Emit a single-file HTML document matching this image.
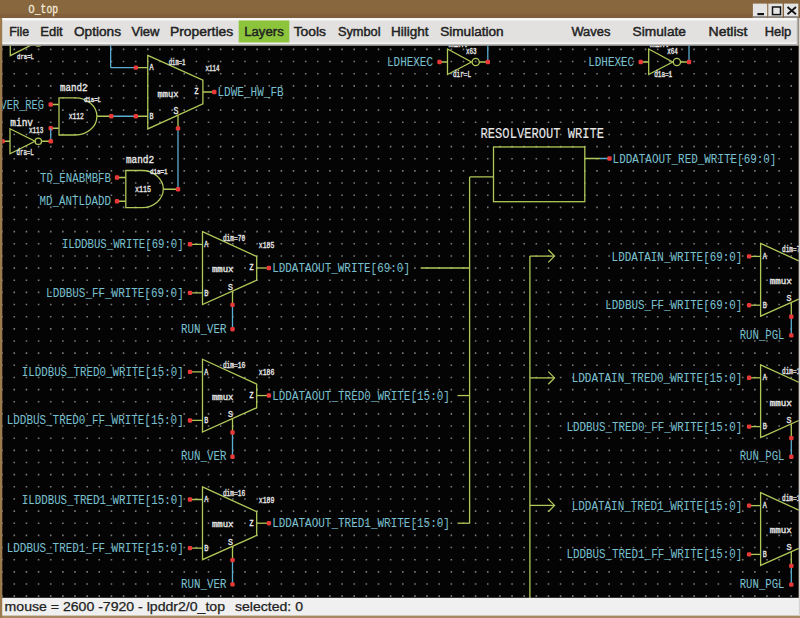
<!DOCTYPE html><html><head><meta charset="utf-8"><style>html,body{margin:0;padding:0;width:800px;height:618px;overflow:hidden;background:#88663e}svg{display:block}</style></head><body>
<svg width="800" height="618" viewBox="0 0 800 618">
<rect x="0" y="0" width="800" height="618" fill="#88663e"/><rect x="0" y="14" width="800" height="4" fill="#80603a"/>
<rect x="2.2" y="45.5" width="796.5" height="552.5" fill="#040404"/>
<clipPath id="cv"><rect x="2.2" y="45.5" width="796.5" height="552.5"/></clipPath>
<g clip-path="url(#cv)">
<path d="M1.36,48.60h1.6v1.6h-1.6zM1.36,60.75h1.6v1.6h-1.6zM1.36,72.90h1.6v1.6h-1.6zM1.36,85.05h1.6v1.6h-1.6zM1.36,97.20h1.6v1.6h-1.6zM1.36,109.35h1.6v1.6h-1.6zM1.36,121.50h1.6v1.6h-1.6zM1.36,133.65h1.6v1.6h-1.6zM1.36,145.80h1.6v1.6h-1.6zM1.36,157.95h1.6v1.6h-1.6zM1.36,170.10h1.6v1.6h-1.6zM1.36,182.25h1.6v1.6h-1.6zM1.36,194.40h1.6v1.6h-1.6zM1.36,206.55h1.6v1.6h-1.6zM1.36,218.70h1.6v1.6h-1.6zM1.36,230.85h1.6v1.6h-1.6zM1.36,243.00h1.6v1.6h-1.6zM1.36,255.15h1.6v1.6h-1.6zM1.36,267.30h1.6v1.6h-1.6zM1.36,279.45h1.6v1.6h-1.6zM1.36,291.60h1.6v1.6h-1.6zM1.36,303.75h1.6v1.6h-1.6zM1.36,315.90h1.6v1.6h-1.6zM1.36,328.05h1.6v1.6h-1.6zM1.36,340.20h1.6v1.6h-1.6zM1.36,352.35h1.6v1.6h-1.6zM1.36,364.50h1.6v1.6h-1.6zM1.36,376.65h1.6v1.6h-1.6zM1.36,388.80h1.6v1.6h-1.6zM1.36,400.95h1.6v1.6h-1.6zM1.36,413.10h1.6v1.6h-1.6zM1.36,425.25h1.6v1.6h-1.6zM1.36,437.40h1.6v1.6h-1.6zM1.36,449.55h1.6v1.6h-1.6zM1.36,461.70h1.6v1.6h-1.6zM1.36,473.85h1.6v1.6h-1.6zM1.36,486.00h1.6v1.6h-1.6zM1.36,498.15h1.6v1.6h-1.6zM1.36,510.30h1.6v1.6h-1.6zM1.36,522.45h1.6v1.6h-1.6zM1.36,534.60h1.6v1.6h-1.6zM1.36,546.75h1.6v1.6h-1.6zM1.36,558.90h1.6v1.6h-1.6zM1.36,571.05h1.6v1.6h-1.6zM1.36,583.20h1.6v1.6h-1.6zM1.36,595.35h1.6v1.6h-1.6zM13.50,48.60h1.6v1.6h-1.6zM13.50,60.75h1.6v1.6h-1.6zM13.50,72.90h1.6v1.6h-1.6zM13.50,85.05h1.6v1.6h-1.6zM13.50,97.20h1.6v1.6h-1.6zM13.50,109.35h1.6v1.6h-1.6zM13.50,121.50h1.6v1.6h-1.6zM13.50,133.65h1.6v1.6h-1.6zM13.50,145.80h1.6v1.6h-1.6zM13.50,157.95h1.6v1.6h-1.6zM13.50,170.10h1.6v1.6h-1.6zM13.50,182.25h1.6v1.6h-1.6zM13.50,194.40h1.6v1.6h-1.6zM13.50,206.55h1.6v1.6h-1.6zM13.50,218.70h1.6v1.6h-1.6zM13.50,230.85h1.6v1.6h-1.6zM13.50,243.00h1.6v1.6h-1.6zM13.50,255.15h1.6v1.6h-1.6zM13.50,267.30h1.6v1.6h-1.6zM13.50,279.45h1.6v1.6h-1.6zM13.50,291.60h1.6v1.6h-1.6zM13.50,303.75h1.6v1.6h-1.6zM13.50,315.90h1.6v1.6h-1.6zM13.50,328.05h1.6v1.6h-1.6zM13.50,340.20h1.6v1.6h-1.6zM13.50,352.35h1.6v1.6h-1.6zM13.50,364.50h1.6v1.6h-1.6zM13.50,376.65h1.6v1.6h-1.6zM13.50,388.80h1.6v1.6h-1.6zM13.50,400.95h1.6v1.6h-1.6zM13.50,413.10h1.6v1.6h-1.6zM13.50,425.25h1.6v1.6h-1.6zM13.50,437.40h1.6v1.6h-1.6zM13.50,449.55h1.6v1.6h-1.6zM13.50,461.70h1.6v1.6h-1.6zM13.50,473.85h1.6v1.6h-1.6zM13.50,486.00h1.6v1.6h-1.6zM13.50,498.15h1.6v1.6h-1.6zM13.50,510.30h1.6v1.6h-1.6zM13.50,522.45h1.6v1.6h-1.6zM13.50,534.60h1.6v1.6h-1.6zM13.50,546.75h1.6v1.6h-1.6zM13.50,558.90h1.6v1.6h-1.6zM13.50,571.05h1.6v1.6h-1.6zM13.50,583.20h1.6v1.6h-1.6zM13.50,595.35h1.6v1.6h-1.6zM25.64,48.60h1.6v1.6h-1.6zM25.64,60.75h1.6v1.6h-1.6zM25.64,72.90h1.6v1.6h-1.6zM25.64,85.05h1.6v1.6h-1.6zM25.64,97.20h1.6v1.6h-1.6zM25.64,109.35h1.6v1.6h-1.6zM25.64,121.50h1.6v1.6h-1.6zM25.64,133.65h1.6v1.6h-1.6zM25.64,145.80h1.6v1.6h-1.6zM25.64,157.95h1.6v1.6h-1.6zM25.64,170.10h1.6v1.6h-1.6zM25.64,182.25h1.6v1.6h-1.6zM25.64,194.40h1.6v1.6h-1.6zM25.64,206.55h1.6v1.6h-1.6zM25.64,218.70h1.6v1.6h-1.6zM25.64,230.85h1.6v1.6h-1.6zM25.64,243.00h1.6v1.6h-1.6zM25.64,255.15h1.6v1.6h-1.6zM25.64,267.30h1.6v1.6h-1.6zM25.64,279.45h1.6v1.6h-1.6zM25.64,291.60h1.6v1.6h-1.6zM25.64,303.75h1.6v1.6h-1.6zM25.64,315.90h1.6v1.6h-1.6zM25.64,328.05h1.6v1.6h-1.6zM25.64,340.20h1.6v1.6h-1.6zM25.64,352.35h1.6v1.6h-1.6zM25.64,364.50h1.6v1.6h-1.6zM25.64,376.65h1.6v1.6h-1.6zM25.64,388.80h1.6v1.6h-1.6zM25.64,400.95h1.6v1.6h-1.6zM25.64,413.10h1.6v1.6h-1.6zM25.64,425.25h1.6v1.6h-1.6zM25.64,437.40h1.6v1.6h-1.6zM25.64,449.55h1.6v1.6h-1.6zM25.64,461.70h1.6v1.6h-1.6zM25.64,473.85h1.6v1.6h-1.6zM25.64,486.00h1.6v1.6h-1.6zM25.64,498.15h1.6v1.6h-1.6zM25.64,510.30h1.6v1.6h-1.6zM25.64,522.45h1.6v1.6h-1.6zM25.64,534.60h1.6v1.6h-1.6zM25.64,546.75h1.6v1.6h-1.6zM25.64,558.90h1.6v1.6h-1.6zM25.64,571.05h1.6v1.6h-1.6zM25.64,583.20h1.6v1.6h-1.6zM25.64,595.35h1.6v1.6h-1.6zM37.78,48.60h1.6v1.6h-1.6zM37.78,60.75h1.6v1.6h-1.6zM37.78,72.90h1.6v1.6h-1.6zM37.78,85.05h1.6v1.6h-1.6zM37.78,97.20h1.6v1.6h-1.6zM37.78,109.35h1.6v1.6h-1.6zM37.78,121.50h1.6v1.6h-1.6zM37.78,133.65h1.6v1.6h-1.6zM37.78,145.80h1.6v1.6h-1.6zM37.78,157.95h1.6v1.6h-1.6zM37.78,170.10h1.6v1.6h-1.6zM37.78,182.25h1.6v1.6h-1.6zM37.78,194.40h1.6v1.6h-1.6zM37.78,206.55h1.6v1.6h-1.6zM37.78,218.70h1.6v1.6h-1.6zM37.78,230.85h1.6v1.6h-1.6zM37.78,243.00h1.6v1.6h-1.6zM37.78,255.15h1.6v1.6h-1.6zM37.78,267.30h1.6v1.6h-1.6zM37.78,279.45h1.6v1.6h-1.6zM37.78,291.60h1.6v1.6h-1.6zM37.78,303.75h1.6v1.6h-1.6zM37.78,315.90h1.6v1.6h-1.6zM37.78,328.05h1.6v1.6h-1.6zM37.78,340.20h1.6v1.6h-1.6zM37.78,352.35h1.6v1.6h-1.6zM37.78,364.50h1.6v1.6h-1.6zM37.78,376.65h1.6v1.6h-1.6zM37.78,388.80h1.6v1.6h-1.6zM37.78,400.95h1.6v1.6h-1.6zM37.78,413.10h1.6v1.6h-1.6zM37.78,425.25h1.6v1.6h-1.6zM37.78,437.40h1.6v1.6h-1.6zM37.78,449.55h1.6v1.6h-1.6zM37.78,461.70h1.6v1.6h-1.6zM37.78,473.85h1.6v1.6h-1.6zM37.78,486.00h1.6v1.6h-1.6zM37.78,498.15h1.6v1.6h-1.6zM37.78,510.30h1.6v1.6h-1.6zM37.78,522.45h1.6v1.6h-1.6zM37.78,534.60h1.6v1.6h-1.6zM37.78,546.75h1.6v1.6h-1.6zM37.78,558.90h1.6v1.6h-1.6zM37.78,571.05h1.6v1.6h-1.6zM37.78,583.20h1.6v1.6h-1.6zM37.78,595.35h1.6v1.6h-1.6zM49.92,48.60h1.6v1.6h-1.6zM49.92,60.75h1.6v1.6h-1.6zM49.92,72.90h1.6v1.6h-1.6zM49.92,85.05h1.6v1.6h-1.6zM49.92,97.20h1.6v1.6h-1.6zM49.92,109.35h1.6v1.6h-1.6zM49.92,121.50h1.6v1.6h-1.6zM49.92,133.65h1.6v1.6h-1.6zM49.92,145.80h1.6v1.6h-1.6zM49.92,157.95h1.6v1.6h-1.6zM49.92,170.10h1.6v1.6h-1.6zM49.92,182.25h1.6v1.6h-1.6zM49.92,194.40h1.6v1.6h-1.6zM49.92,206.55h1.6v1.6h-1.6zM49.92,218.70h1.6v1.6h-1.6zM49.92,230.85h1.6v1.6h-1.6zM49.92,243.00h1.6v1.6h-1.6zM49.92,255.15h1.6v1.6h-1.6zM49.92,267.30h1.6v1.6h-1.6zM49.92,279.45h1.6v1.6h-1.6zM49.92,291.60h1.6v1.6h-1.6zM49.92,303.75h1.6v1.6h-1.6zM49.92,315.90h1.6v1.6h-1.6zM49.92,328.05h1.6v1.6h-1.6zM49.92,340.20h1.6v1.6h-1.6zM49.92,352.35h1.6v1.6h-1.6zM49.92,364.50h1.6v1.6h-1.6zM49.92,376.65h1.6v1.6h-1.6zM49.92,388.80h1.6v1.6h-1.6zM49.92,400.95h1.6v1.6h-1.6zM49.92,413.10h1.6v1.6h-1.6zM49.92,425.25h1.6v1.6h-1.6zM49.92,437.40h1.6v1.6h-1.6zM49.92,449.55h1.6v1.6h-1.6zM49.92,461.70h1.6v1.6h-1.6zM49.92,473.85h1.6v1.6h-1.6zM49.92,486.00h1.6v1.6h-1.6zM49.92,498.15h1.6v1.6h-1.6zM49.92,510.30h1.6v1.6h-1.6zM49.92,522.45h1.6v1.6h-1.6zM49.92,534.60h1.6v1.6h-1.6zM49.92,546.75h1.6v1.6h-1.6zM49.92,558.90h1.6v1.6h-1.6zM49.92,571.05h1.6v1.6h-1.6zM49.92,583.20h1.6v1.6h-1.6zM49.92,595.35h1.6v1.6h-1.6zM62.06,48.60h1.6v1.6h-1.6zM62.06,60.75h1.6v1.6h-1.6zM62.06,72.90h1.6v1.6h-1.6zM62.06,85.05h1.6v1.6h-1.6zM62.06,97.20h1.6v1.6h-1.6zM62.06,109.35h1.6v1.6h-1.6zM62.06,121.50h1.6v1.6h-1.6zM62.06,133.65h1.6v1.6h-1.6zM62.06,145.80h1.6v1.6h-1.6zM62.06,157.95h1.6v1.6h-1.6zM62.06,170.10h1.6v1.6h-1.6zM62.06,182.25h1.6v1.6h-1.6zM62.06,194.40h1.6v1.6h-1.6zM62.06,206.55h1.6v1.6h-1.6zM62.06,218.70h1.6v1.6h-1.6zM62.06,230.85h1.6v1.6h-1.6zM62.06,243.00h1.6v1.6h-1.6zM62.06,255.15h1.6v1.6h-1.6zM62.06,267.30h1.6v1.6h-1.6zM62.06,279.45h1.6v1.6h-1.6zM62.06,291.60h1.6v1.6h-1.6zM62.06,303.75h1.6v1.6h-1.6zM62.06,315.90h1.6v1.6h-1.6zM62.06,328.05h1.6v1.6h-1.6zM62.06,340.20h1.6v1.6h-1.6zM62.06,352.35h1.6v1.6h-1.6zM62.06,364.50h1.6v1.6h-1.6zM62.06,376.65h1.6v1.6h-1.6zM62.06,388.80h1.6v1.6h-1.6zM62.06,400.95h1.6v1.6h-1.6zM62.06,413.10h1.6v1.6h-1.6zM62.06,425.25h1.6v1.6h-1.6zM62.06,437.40h1.6v1.6h-1.6zM62.06,449.55h1.6v1.6h-1.6zM62.06,461.70h1.6v1.6h-1.6zM62.06,473.85h1.6v1.6h-1.6zM62.06,486.00h1.6v1.6h-1.6zM62.06,498.15h1.6v1.6h-1.6zM62.06,510.30h1.6v1.6h-1.6zM62.06,522.45h1.6v1.6h-1.6zM62.06,534.60h1.6v1.6h-1.6zM62.06,546.75h1.6v1.6h-1.6zM62.06,558.90h1.6v1.6h-1.6zM62.06,571.05h1.6v1.6h-1.6zM62.06,583.20h1.6v1.6h-1.6zM62.06,595.35h1.6v1.6h-1.6zM74.20,48.60h1.6v1.6h-1.6zM74.20,60.75h1.6v1.6h-1.6zM74.20,72.90h1.6v1.6h-1.6zM74.20,85.05h1.6v1.6h-1.6zM74.20,97.20h1.6v1.6h-1.6zM74.20,109.35h1.6v1.6h-1.6zM74.20,121.50h1.6v1.6h-1.6zM74.20,133.65h1.6v1.6h-1.6zM74.20,145.80h1.6v1.6h-1.6zM74.20,157.95h1.6v1.6h-1.6zM74.20,170.10h1.6v1.6h-1.6zM74.20,182.25h1.6v1.6h-1.6zM74.20,194.40h1.6v1.6h-1.6zM74.20,206.55h1.6v1.6h-1.6zM74.20,218.70h1.6v1.6h-1.6zM74.20,230.85h1.6v1.6h-1.6zM74.20,243.00h1.6v1.6h-1.6zM74.20,255.15h1.6v1.6h-1.6zM74.20,267.30h1.6v1.6h-1.6zM74.20,279.45h1.6v1.6h-1.6zM74.20,291.60h1.6v1.6h-1.6zM74.20,303.75h1.6v1.6h-1.6zM74.20,315.90h1.6v1.6h-1.6zM74.20,328.05h1.6v1.6h-1.6zM74.20,340.20h1.6v1.6h-1.6zM74.20,352.35h1.6v1.6h-1.6zM74.20,364.50h1.6v1.6h-1.6zM74.20,376.65h1.6v1.6h-1.6zM74.20,388.80h1.6v1.6h-1.6zM74.20,400.95h1.6v1.6h-1.6zM74.20,413.10h1.6v1.6h-1.6zM74.20,425.25h1.6v1.6h-1.6zM74.20,437.40h1.6v1.6h-1.6zM74.20,449.55h1.6v1.6h-1.6zM74.20,461.70h1.6v1.6h-1.6zM74.20,473.85h1.6v1.6h-1.6zM74.20,486.00h1.6v1.6h-1.6zM74.20,498.15h1.6v1.6h-1.6zM74.20,510.30h1.6v1.6h-1.6zM74.20,522.45h1.6v1.6h-1.6zM74.20,534.60h1.6v1.6h-1.6zM74.20,546.75h1.6v1.6h-1.6zM74.20,558.90h1.6v1.6h-1.6zM74.20,571.05h1.6v1.6h-1.6zM74.20,583.20h1.6v1.6h-1.6zM74.20,595.35h1.6v1.6h-1.6zM86.34,48.60h1.6v1.6h-1.6zM86.34,60.75h1.6v1.6h-1.6zM86.34,72.90h1.6v1.6h-1.6zM86.34,85.05h1.6v1.6h-1.6zM86.34,97.20h1.6v1.6h-1.6zM86.34,109.35h1.6v1.6h-1.6zM86.34,121.50h1.6v1.6h-1.6zM86.34,133.65h1.6v1.6h-1.6zM86.34,145.80h1.6v1.6h-1.6zM86.34,157.95h1.6v1.6h-1.6zM86.34,170.10h1.6v1.6h-1.6zM86.34,182.25h1.6v1.6h-1.6zM86.34,194.40h1.6v1.6h-1.6zM86.34,206.55h1.6v1.6h-1.6zM86.34,218.70h1.6v1.6h-1.6zM86.34,230.85h1.6v1.6h-1.6zM86.34,243.00h1.6v1.6h-1.6zM86.34,255.15h1.6v1.6h-1.6zM86.34,267.30h1.6v1.6h-1.6zM86.34,279.45h1.6v1.6h-1.6zM86.34,291.60h1.6v1.6h-1.6zM86.34,303.75h1.6v1.6h-1.6zM86.34,315.90h1.6v1.6h-1.6zM86.34,328.05h1.6v1.6h-1.6zM86.34,340.20h1.6v1.6h-1.6zM86.34,352.35h1.6v1.6h-1.6zM86.34,364.50h1.6v1.6h-1.6zM86.34,376.65h1.6v1.6h-1.6zM86.34,388.80h1.6v1.6h-1.6zM86.34,400.95h1.6v1.6h-1.6zM86.34,413.10h1.6v1.6h-1.6zM86.34,425.25h1.6v1.6h-1.6zM86.34,437.40h1.6v1.6h-1.6zM86.34,449.55h1.6v1.6h-1.6zM86.34,461.70h1.6v1.6h-1.6zM86.34,473.85h1.6v1.6h-1.6zM86.34,486.00h1.6v1.6h-1.6zM86.34,498.15h1.6v1.6h-1.6zM86.34,510.30h1.6v1.6h-1.6zM86.34,522.45h1.6v1.6h-1.6zM86.34,534.60h1.6v1.6h-1.6zM86.34,546.75h1.6v1.6h-1.6zM86.34,558.90h1.6v1.6h-1.6zM86.34,571.05h1.6v1.6h-1.6zM86.34,583.20h1.6v1.6h-1.6zM86.34,595.35h1.6v1.6h-1.6zM98.48,48.60h1.6v1.6h-1.6zM98.48,60.75h1.6v1.6h-1.6zM98.48,72.90h1.6v1.6h-1.6zM98.48,85.05h1.6v1.6h-1.6zM98.48,97.20h1.6v1.6h-1.6zM98.48,109.35h1.6v1.6h-1.6zM98.48,121.50h1.6v1.6h-1.6zM98.48,133.65h1.6v1.6h-1.6zM98.48,145.80h1.6v1.6h-1.6zM98.48,157.95h1.6v1.6h-1.6zM98.48,170.10h1.6v1.6h-1.6zM98.48,182.25h1.6v1.6h-1.6zM98.48,194.40h1.6v1.6h-1.6zM98.48,206.55h1.6v1.6h-1.6zM98.48,218.70h1.6v1.6h-1.6zM98.48,230.85h1.6v1.6h-1.6zM98.48,243.00h1.6v1.6h-1.6zM98.48,255.15h1.6v1.6h-1.6zM98.48,267.30h1.6v1.6h-1.6zM98.48,279.45h1.6v1.6h-1.6zM98.48,291.60h1.6v1.6h-1.6zM98.48,303.75h1.6v1.6h-1.6zM98.48,315.90h1.6v1.6h-1.6zM98.48,328.05h1.6v1.6h-1.6zM98.48,340.20h1.6v1.6h-1.6zM98.48,352.35h1.6v1.6h-1.6zM98.48,364.50h1.6v1.6h-1.6zM98.48,376.65h1.6v1.6h-1.6zM98.48,388.80h1.6v1.6h-1.6zM98.48,400.95h1.6v1.6h-1.6zM98.48,413.10h1.6v1.6h-1.6zM98.48,425.25h1.6v1.6h-1.6zM98.48,437.40h1.6v1.6h-1.6zM98.48,449.55h1.6v1.6h-1.6zM98.48,461.70h1.6v1.6h-1.6zM98.48,473.85h1.6v1.6h-1.6zM98.48,486.00h1.6v1.6h-1.6zM98.48,498.15h1.6v1.6h-1.6zM98.48,510.30h1.6v1.6h-1.6zM98.48,522.45h1.6v1.6h-1.6zM98.48,534.60h1.6v1.6h-1.6zM98.48,546.75h1.6v1.6h-1.6zM98.48,558.90h1.6v1.6h-1.6zM98.48,571.05h1.6v1.6h-1.6zM98.48,583.20h1.6v1.6h-1.6zM98.48,595.35h1.6v1.6h-1.6zM110.62,48.60h1.6v1.6h-1.6zM110.62,60.75h1.6v1.6h-1.6zM110.62,72.90h1.6v1.6h-1.6zM110.62,85.05h1.6v1.6h-1.6zM110.62,97.20h1.6v1.6h-1.6zM110.62,109.35h1.6v1.6h-1.6zM110.62,121.50h1.6v1.6h-1.6zM110.62,133.65h1.6v1.6h-1.6zM110.62,145.80h1.6v1.6h-1.6zM110.62,157.95h1.6v1.6h-1.6zM110.62,170.10h1.6v1.6h-1.6zM110.62,182.25h1.6v1.6h-1.6zM110.62,194.40h1.6v1.6h-1.6zM110.62,206.55h1.6v1.6h-1.6zM110.62,218.70h1.6v1.6h-1.6zM110.62,230.85h1.6v1.6h-1.6zM110.62,243.00h1.6v1.6h-1.6zM110.62,255.15h1.6v1.6h-1.6zM110.62,267.30h1.6v1.6h-1.6zM110.62,279.45h1.6v1.6h-1.6zM110.62,291.60h1.6v1.6h-1.6zM110.62,303.75h1.6v1.6h-1.6zM110.62,315.90h1.6v1.6h-1.6zM110.62,328.05h1.6v1.6h-1.6zM110.62,340.20h1.6v1.6h-1.6zM110.62,352.35h1.6v1.6h-1.6zM110.62,364.50h1.6v1.6h-1.6zM110.62,376.65h1.6v1.6h-1.6zM110.62,388.80h1.6v1.6h-1.6zM110.62,400.95h1.6v1.6h-1.6zM110.62,413.10h1.6v1.6h-1.6zM110.62,425.25h1.6v1.6h-1.6zM110.62,437.40h1.6v1.6h-1.6zM110.62,449.55h1.6v1.6h-1.6zM110.62,461.70h1.6v1.6h-1.6zM110.62,473.85h1.6v1.6h-1.6zM110.62,486.00h1.6v1.6h-1.6zM110.62,498.15h1.6v1.6h-1.6zM110.62,510.30h1.6v1.6h-1.6zM110.62,522.45h1.6v1.6h-1.6zM110.62,534.60h1.6v1.6h-1.6zM110.62,546.75h1.6v1.6h-1.6zM110.62,558.90h1.6v1.6h-1.6zM110.62,571.05h1.6v1.6h-1.6zM110.62,583.20h1.6v1.6h-1.6zM110.62,595.35h1.6v1.6h-1.6zM122.76,48.60h1.6v1.6h-1.6zM122.76,60.75h1.6v1.6h-1.6zM122.76,72.90h1.6v1.6h-1.6zM122.76,85.05h1.6v1.6h-1.6zM122.76,97.20h1.6v1.6h-1.6zM122.76,109.35h1.6v1.6h-1.6zM122.76,121.50h1.6v1.6h-1.6zM122.76,133.65h1.6v1.6h-1.6zM122.76,145.80h1.6v1.6h-1.6zM122.76,157.95h1.6v1.6h-1.6zM122.76,170.10h1.6v1.6h-1.6zM122.76,182.25h1.6v1.6h-1.6zM122.76,194.40h1.6v1.6h-1.6zM122.76,206.55h1.6v1.6h-1.6zM122.76,218.70h1.6v1.6h-1.6zM122.76,230.85h1.6v1.6h-1.6zM122.76,243.00h1.6v1.6h-1.6zM122.76,255.15h1.6v1.6h-1.6zM122.76,267.30h1.6v1.6h-1.6zM122.76,279.45h1.6v1.6h-1.6zM122.76,291.60h1.6v1.6h-1.6zM122.76,303.75h1.6v1.6h-1.6zM122.76,315.90h1.6v1.6h-1.6zM122.76,328.05h1.6v1.6h-1.6zM122.76,340.20h1.6v1.6h-1.6zM122.76,352.35h1.6v1.6h-1.6zM122.76,364.50h1.6v1.6h-1.6zM122.76,376.65h1.6v1.6h-1.6zM122.76,388.80h1.6v1.6h-1.6zM122.76,400.95h1.6v1.6h-1.6zM122.76,413.10h1.6v1.6h-1.6zM122.76,425.25h1.6v1.6h-1.6zM122.76,437.40h1.6v1.6h-1.6zM122.76,449.55h1.6v1.6h-1.6zM122.76,461.70h1.6v1.6h-1.6zM122.76,473.85h1.6v1.6h-1.6zM122.76,486.00h1.6v1.6h-1.6zM122.76,498.15h1.6v1.6h-1.6zM122.76,510.30h1.6v1.6h-1.6zM122.76,522.45h1.6v1.6h-1.6zM122.76,534.60h1.6v1.6h-1.6zM122.76,546.75h1.6v1.6h-1.6zM122.76,558.90h1.6v1.6h-1.6zM122.76,571.05h1.6v1.6h-1.6zM122.76,583.20h1.6v1.6h-1.6zM122.76,595.35h1.6v1.6h-1.6zM134.90,48.60h1.6v1.6h-1.6zM134.90,60.75h1.6v1.6h-1.6zM134.90,72.90h1.6v1.6h-1.6zM134.90,85.05h1.6v1.6h-1.6zM134.90,97.20h1.6v1.6h-1.6zM134.90,109.35h1.6v1.6h-1.6zM134.90,121.50h1.6v1.6h-1.6zM134.90,133.65h1.6v1.6h-1.6zM134.90,145.80h1.6v1.6h-1.6zM134.90,157.95h1.6v1.6h-1.6zM134.90,170.10h1.6v1.6h-1.6zM134.90,182.25h1.6v1.6h-1.6zM134.90,194.40h1.6v1.6h-1.6zM134.90,206.55h1.6v1.6h-1.6zM134.90,218.70h1.6v1.6h-1.6zM134.90,230.85h1.6v1.6h-1.6zM134.90,243.00h1.6v1.6h-1.6zM134.90,255.15h1.6v1.6h-1.6zM134.90,267.30h1.6v1.6h-1.6zM134.90,279.45h1.6v1.6h-1.6zM134.90,291.60h1.6v1.6h-1.6zM134.90,303.75h1.6v1.6h-1.6zM134.90,315.90h1.6v1.6h-1.6zM134.90,328.05h1.6v1.6h-1.6zM134.90,340.20h1.6v1.6h-1.6zM134.90,352.35h1.6v1.6h-1.6zM134.90,364.50h1.6v1.6h-1.6zM134.90,376.65h1.6v1.6h-1.6zM134.90,388.80h1.6v1.6h-1.6zM134.90,400.95h1.6v1.6h-1.6zM134.90,413.10h1.6v1.6h-1.6zM134.90,425.25h1.6v1.6h-1.6zM134.90,437.40h1.6v1.6h-1.6zM134.90,449.55h1.6v1.6h-1.6zM134.90,461.70h1.6v1.6h-1.6zM134.90,473.85h1.6v1.6h-1.6zM134.90,486.00h1.6v1.6h-1.6zM134.90,498.15h1.6v1.6h-1.6zM134.90,510.30h1.6v1.6h-1.6zM134.90,522.45h1.6v1.6h-1.6zM134.90,534.60h1.6v1.6h-1.6zM134.90,546.75h1.6v1.6h-1.6zM134.90,558.90h1.6v1.6h-1.6zM134.90,571.05h1.6v1.6h-1.6zM134.90,583.20h1.6v1.6h-1.6zM134.90,595.35h1.6v1.6h-1.6zM147.04,48.60h1.6v1.6h-1.6zM147.04,60.75h1.6v1.6h-1.6zM147.04,72.90h1.6v1.6h-1.6zM147.04,85.05h1.6v1.6h-1.6zM147.04,97.20h1.6v1.6h-1.6zM147.04,109.35h1.6v1.6h-1.6zM147.04,121.50h1.6v1.6h-1.6zM147.04,133.65h1.6v1.6h-1.6zM147.04,145.80h1.6v1.6h-1.6zM147.04,157.95h1.6v1.6h-1.6zM147.04,170.10h1.6v1.6h-1.6zM147.04,182.25h1.6v1.6h-1.6zM147.04,194.40h1.6v1.6h-1.6zM147.04,206.55h1.6v1.6h-1.6zM147.04,218.70h1.6v1.6h-1.6zM147.04,230.85h1.6v1.6h-1.6zM147.04,243.00h1.6v1.6h-1.6zM147.04,255.15h1.6v1.6h-1.6zM147.04,267.30h1.6v1.6h-1.6zM147.04,279.45h1.6v1.6h-1.6zM147.04,291.60h1.6v1.6h-1.6zM147.04,303.75h1.6v1.6h-1.6zM147.04,315.90h1.6v1.6h-1.6zM147.04,328.05h1.6v1.6h-1.6zM147.04,340.20h1.6v1.6h-1.6zM147.04,352.35h1.6v1.6h-1.6zM147.04,364.50h1.6v1.6h-1.6zM147.04,376.65h1.6v1.6h-1.6zM147.04,388.80h1.6v1.6h-1.6zM147.04,400.95h1.6v1.6h-1.6zM147.04,413.10h1.6v1.6h-1.6zM147.04,425.25h1.6v1.6h-1.6zM147.04,437.40h1.6v1.6h-1.6zM147.04,449.55h1.6v1.6h-1.6zM147.04,461.70h1.6v1.6h-1.6zM147.04,473.85h1.6v1.6h-1.6zM147.04,486.00h1.6v1.6h-1.6zM147.04,498.15h1.6v1.6h-1.6zM147.04,510.30h1.6v1.6h-1.6zM147.04,522.45h1.6v1.6h-1.6zM147.04,534.60h1.6v1.6h-1.6zM147.04,546.75h1.6v1.6h-1.6zM147.04,558.90h1.6v1.6h-1.6zM147.04,571.05h1.6v1.6h-1.6zM147.04,583.20h1.6v1.6h-1.6zM147.04,595.35h1.6v1.6h-1.6zM159.18,48.60h1.6v1.6h-1.6zM159.18,60.75h1.6v1.6h-1.6zM159.18,72.90h1.6v1.6h-1.6zM159.18,85.05h1.6v1.6h-1.6zM159.18,97.20h1.6v1.6h-1.6zM159.18,109.35h1.6v1.6h-1.6zM159.18,121.50h1.6v1.6h-1.6zM159.18,133.65h1.6v1.6h-1.6zM159.18,145.80h1.6v1.6h-1.6zM159.18,157.95h1.6v1.6h-1.6zM159.18,170.10h1.6v1.6h-1.6zM159.18,182.25h1.6v1.6h-1.6zM159.18,194.40h1.6v1.6h-1.6zM159.18,206.55h1.6v1.6h-1.6zM159.18,218.70h1.6v1.6h-1.6zM159.18,230.85h1.6v1.6h-1.6zM159.18,243.00h1.6v1.6h-1.6zM159.18,255.15h1.6v1.6h-1.6zM159.18,267.30h1.6v1.6h-1.6zM159.18,279.45h1.6v1.6h-1.6zM159.18,291.60h1.6v1.6h-1.6zM159.18,303.75h1.6v1.6h-1.6zM159.18,315.90h1.6v1.6h-1.6zM159.18,328.05h1.6v1.6h-1.6zM159.18,340.20h1.6v1.6h-1.6zM159.18,352.35h1.6v1.6h-1.6zM159.18,364.50h1.6v1.6h-1.6zM159.18,376.65h1.6v1.6h-1.6zM159.18,388.80h1.6v1.6h-1.6zM159.18,400.95h1.6v1.6h-1.6zM159.18,413.10h1.6v1.6h-1.6zM159.18,425.25h1.6v1.6h-1.6zM159.18,437.40h1.6v1.6h-1.6zM159.18,449.55h1.6v1.6h-1.6zM159.18,461.70h1.6v1.6h-1.6zM159.18,473.85h1.6v1.6h-1.6zM159.18,486.00h1.6v1.6h-1.6zM159.18,498.15h1.6v1.6h-1.6zM159.18,510.30h1.6v1.6h-1.6zM159.18,522.45h1.6v1.6h-1.6zM159.18,534.60h1.6v1.6h-1.6zM159.18,546.75h1.6v1.6h-1.6zM159.18,558.90h1.6v1.6h-1.6zM159.18,571.05h1.6v1.6h-1.6zM159.18,583.20h1.6v1.6h-1.6zM159.18,595.35h1.6v1.6h-1.6zM171.32,48.60h1.6v1.6h-1.6zM171.32,60.75h1.6v1.6h-1.6zM171.32,72.90h1.6v1.6h-1.6zM171.32,85.05h1.6v1.6h-1.6zM171.32,97.20h1.6v1.6h-1.6zM171.32,109.35h1.6v1.6h-1.6zM171.32,121.50h1.6v1.6h-1.6zM171.32,133.65h1.6v1.6h-1.6zM171.32,145.80h1.6v1.6h-1.6zM171.32,157.95h1.6v1.6h-1.6zM171.32,170.10h1.6v1.6h-1.6zM171.32,182.25h1.6v1.6h-1.6zM171.32,194.40h1.6v1.6h-1.6zM171.32,206.55h1.6v1.6h-1.6zM171.32,218.70h1.6v1.6h-1.6zM171.32,230.85h1.6v1.6h-1.6zM171.32,243.00h1.6v1.6h-1.6zM171.32,255.15h1.6v1.6h-1.6zM171.32,267.30h1.6v1.6h-1.6zM171.32,279.45h1.6v1.6h-1.6zM171.32,291.60h1.6v1.6h-1.6zM171.32,303.75h1.6v1.6h-1.6zM171.32,315.90h1.6v1.6h-1.6zM171.32,328.05h1.6v1.6h-1.6zM171.32,340.20h1.6v1.6h-1.6zM171.32,352.35h1.6v1.6h-1.6zM171.32,364.50h1.6v1.6h-1.6zM171.32,376.65h1.6v1.6h-1.6zM171.32,388.80h1.6v1.6h-1.6zM171.32,400.95h1.6v1.6h-1.6zM171.32,413.10h1.6v1.6h-1.6zM171.32,425.25h1.6v1.6h-1.6zM171.32,437.40h1.6v1.6h-1.6zM171.32,449.55h1.6v1.6h-1.6zM171.32,461.70h1.6v1.6h-1.6zM171.32,473.85h1.6v1.6h-1.6zM171.32,486.00h1.6v1.6h-1.6zM171.32,498.15h1.6v1.6h-1.6zM171.32,510.30h1.6v1.6h-1.6zM171.32,522.45h1.6v1.6h-1.6zM171.32,534.60h1.6v1.6h-1.6zM171.32,546.75h1.6v1.6h-1.6zM171.32,558.90h1.6v1.6h-1.6zM171.32,571.05h1.6v1.6h-1.6zM171.32,583.20h1.6v1.6h-1.6zM171.32,595.35h1.6v1.6h-1.6zM183.46,48.60h1.6v1.6h-1.6zM183.46,60.75h1.6v1.6h-1.6zM183.46,72.90h1.6v1.6h-1.6zM183.46,85.05h1.6v1.6h-1.6zM183.46,97.20h1.6v1.6h-1.6zM183.46,109.35h1.6v1.6h-1.6zM183.46,121.50h1.6v1.6h-1.6zM183.46,133.65h1.6v1.6h-1.6zM183.46,145.80h1.6v1.6h-1.6zM183.46,157.95h1.6v1.6h-1.6zM183.46,170.10h1.6v1.6h-1.6zM183.46,182.25h1.6v1.6h-1.6zM183.46,194.40h1.6v1.6h-1.6zM183.46,206.55h1.6v1.6h-1.6zM183.46,218.70h1.6v1.6h-1.6zM183.46,230.85h1.6v1.6h-1.6zM183.46,243.00h1.6v1.6h-1.6zM183.46,255.15h1.6v1.6h-1.6zM183.46,267.30h1.6v1.6h-1.6zM183.46,279.45h1.6v1.6h-1.6zM183.46,291.60h1.6v1.6h-1.6zM183.46,303.75h1.6v1.6h-1.6zM183.46,315.90h1.6v1.6h-1.6zM183.46,328.05h1.6v1.6h-1.6zM183.46,340.20h1.6v1.6h-1.6zM183.46,352.35h1.6v1.6h-1.6zM183.46,364.50h1.6v1.6h-1.6zM183.46,376.65h1.6v1.6h-1.6zM183.46,388.80h1.6v1.6h-1.6zM183.46,400.95h1.6v1.6h-1.6zM183.46,413.10h1.6v1.6h-1.6zM183.46,425.25h1.6v1.6h-1.6zM183.46,437.40h1.6v1.6h-1.6zM183.46,449.55h1.6v1.6h-1.6zM183.46,461.70h1.6v1.6h-1.6zM183.46,473.85h1.6v1.6h-1.6zM183.46,486.00h1.6v1.6h-1.6zM183.46,498.15h1.6v1.6h-1.6zM183.46,510.30h1.6v1.6h-1.6zM183.46,522.45h1.6v1.6h-1.6zM183.46,534.60h1.6v1.6h-1.6zM183.46,546.75h1.6v1.6h-1.6zM183.46,558.90h1.6v1.6h-1.6zM183.46,571.05h1.6v1.6h-1.6zM183.46,583.20h1.6v1.6h-1.6zM183.46,595.35h1.6v1.6h-1.6zM195.60,48.60h1.6v1.6h-1.6zM195.60,60.75h1.6v1.6h-1.6zM195.60,72.90h1.6v1.6h-1.6zM195.60,85.05h1.6v1.6h-1.6zM195.60,97.20h1.6v1.6h-1.6zM195.60,109.35h1.6v1.6h-1.6zM195.60,121.50h1.6v1.6h-1.6zM195.60,133.65h1.6v1.6h-1.6zM195.60,145.80h1.6v1.6h-1.6zM195.60,157.95h1.6v1.6h-1.6zM195.60,170.10h1.6v1.6h-1.6zM195.60,182.25h1.6v1.6h-1.6zM195.60,194.40h1.6v1.6h-1.6zM195.60,206.55h1.6v1.6h-1.6zM195.60,218.70h1.6v1.6h-1.6zM195.60,230.85h1.6v1.6h-1.6zM195.60,243.00h1.6v1.6h-1.6zM195.60,255.15h1.6v1.6h-1.6zM195.60,267.30h1.6v1.6h-1.6zM195.60,279.45h1.6v1.6h-1.6zM195.60,291.60h1.6v1.6h-1.6zM195.60,303.75h1.6v1.6h-1.6zM195.60,315.90h1.6v1.6h-1.6zM195.60,328.05h1.6v1.6h-1.6zM195.60,340.20h1.6v1.6h-1.6zM195.60,352.35h1.6v1.6h-1.6zM195.60,364.50h1.6v1.6h-1.6zM195.60,376.65h1.6v1.6h-1.6zM195.60,388.80h1.6v1.6h-1.6zM195.60,400.95h1.6v1.6h-1.6zM195.60,413.10h1.6v1.6h-1.6zM195.60,425.25h1.6v1.6h-1.6zM195.60,437.40h1.6v1.6h-1.6zM195.60,449.55h1.6v1.6h-1.6zM195.60,461.70h1.6v1.6h-1.6zM195.60,473.85h1.6v1.6h-1.6zM195.60,486.00h1.6v1.6h-1.6zM195.60,498.15h1.6v1.6h-1.6zM195.60,510.30h1.6v1.6h-1.6zM195.60,522.45h1.6v1.6h-1.6zM195.60,534.60h1.6v1.6h-1.6zM195.60,546.75h1.6v1.6h-1.6zM195.60,558.90h1.6v1.6h-1.6zM195.60,571.05h1.6v1.6h-1.6zM195.60,583.20h1.6v1.6h-1.6zM195.60,595.35h1.6v1.6h-1.6zM207.74,48.60h1.6v1.6h-1.6zM207.74,60.75h1.6v1.6h-1.6zM207.74,72.90h1.6v1.6h-1.6zM207.74,85.05h1.6v1.6h-1.6zM207.74,97.20h1.6v1.6h-1.6zM207.74,109.35h1.6v1.6h-1.6zM207.74,121.50h1.6v1.6h-1.6zM207.74,133.65h1.6v1.6h-1.6zM207.74,145.80h1.6v1.6h-1.6zM207.74,157.95h1.6v1.6h-1.6zM207.74,170.10h1.6v1.6h-1.6zM207.74,182.25h1.6v1.6h-1.6zM207.74,194.40h1.6v1.6h-1.6zM207.74,206.55h1.6v1.6h-1.6zM207.74,218.70h1.6v1.6h-1.6zM207.74,230.85h1.6v1.6h-1.6zM207.74,243.00h1.6v1.6h-1.6zM207.74,255.15h1.6v1.6h-1.6zM207.74,267.30h1.6v1.6h-1.6zM207.74,279.45h1.6v1.6h-1.6zM207.74,291.60h1.6v1.6h-1.6zM207.74,303.75h1.6v1.6h-1.6zM207.74,315.90h1.6v1.6h-1.6zM207.74,328.05h1.6v1.6h-1.6zM207.74,340.20h1.6v1.6h-1.6zM207.74,352.35h1.6v1.6h-1.6zM207.74,364.50h1.6v1.6h-1.6zM207.74,376.65h1.6v1.6h-1.6zM207.74,388.80h1.6v1.6h-1.6zM207.74,400.95h1.6v1.6h-1.6zM207.74,413.10h1.6v1.6h-1.6zM207.74,425.25h1.6v1.6h-1.6zM207.74,437.40h1.6v1.6h-1.6zM207.74,449.55h1.6v1.6h-1.6zM207.74,461.70h1.6v1.6h-1.6zM207.74,473.85h1.6v1.6h-1.6zM207.74,486.00h1.6v1.6h-1.6zM207.74,498.15h1.6v1.6h-1.6zM207.74,510.30h1.6v1.6h-1.6zM207.74,522.45h1.6v1.6h-1.6zM207.74,534.60h1.6v1.6h-1.6zM207.74,546.75h1.6v1.6h-1.6zM207.74,558.90h1.6v1.6h-1.6zM207.74,571.05h1.6v1.6h-1.6zM207.74,583.20h1.6v1.6h-1.6zM207.74,595.35h1.6v1.6h-1.6zM219.88,48.60h1.6v1.6h-1.6zM219.88,60.75h1.6v1.6h-1.6zM219.88,72.90h1.6v1.6h-1.6zM219.88,85.05h1.6v1.6h-1.6zM219.88,97.20h1.6v1.6h-1.6zM219.88,109.35h1.6v1.6h-1.6zM219.88,121.50h1.6v1.6h-1.6zM219.88,133.65h1.6v1.6h-1.6zM219.88,145.80h1.6v1.6h-1.6zM219.88,157.95h1.6v1.6h-1.6zM219.88,170.10h1.6v1.6h-1.6zM219.88,182.25h1.6v1.6h-1.6zM219.88,194.40h1.6v1.6h-1.6zM219.88,206.55h1.6v1.6h-1.6zM219.88,218.70h1.6v1.6h-1.6zM219.88,230.85h1.6v1.6h-1.6zM219.88,243.00h1.6v1.6h-1.6zM219.88,255.15h1.6v1.6h-1.6zM219.88,267.30h1.6v1.6h-1.6zM219.88,279.45h1.6v1.6h-1.6zM219.88,291.60h1.6v1.6h-1.6zM219.88,303.75h1.6v1.6h-1.6zM219.88,315.90h1.6v1.6h-1.6zM219.88,328.05h1.6v1.6h-1.6zM219.88,340.20h1.6v1.6h-1.6zM219.88,352.35h1.6v1.6h-1.6zM219.88,364.50h1.6v1.6h-1.6zM219.88,376.65h1.6v1.6h-1.6zM219.88,388.80h1.6v1.6h-1.6zM219.88,400.95h1.6v1.6h-1.6zM219.88,413.10h1.6v1.6h-1.6zM219.88,425.25h1.6v1.6h-1.6zM219.88,437.40h1.6v1.6h-1.6zM219.88,449.55h1.6v1.6h-1.6zM219.88,461.70h1.6v1.6h-1.6zM219.88,473.85h1.6v1.6h-1.6zM219.88,486.00h1.6v1.6h-1.6zM219.88,498.15h1.6v1.6h-1.6zM219.88,510.30h1.6v1.6h-1.6zM219.88,522.45h1.6v1.6h-1.6zM219.88,534.60h1.6v1.6h-1.6zM219.88,546.75h1.6v1.6h-1.6zM219.88,558.90h1.6v1.6h-1.6zM219.88,571.05h1.6v1.6h-1.6zM219.88,583.20h1.6v1.6h-1.6zM219.88,595.35h1.6v1.6h-1.6zM232.02,48.60h1.6v1.6h-1.6zM232.02,60.75h1.6v1.6h-1.6zM232.02,72.90h1.6v1.6h-1.6zM232.02,85.05h1.6v1.6h-1.6zM232.02,97.20h1.6v1.6h-1.6zM232.02,109.35h1.6v1.6h-1.6zM232.02,121.50h1.6v1.6h-1.6zM232.02,133.65h1.6v1.6h-1.6zM232.02,145.80h1.6v1.6h-1.6zM232.02,157.95h1.6v1.6h-1.6zM232.02,170.10h1.6v1.6h-1.6zM232.02,182.25h1.6v1.6h-1.6zM232.02,194.40h1.6v1.6h-1.6zM232.02,206.55h1.6v1.6h-1.6zM232.02,218.70h1.6v1.6h-1.6zM232.02,230.85h1.6v1.6h-1.6zM232.02,243.00h1.6v1.6h-1.6zM232.02,255.15h1.6v1.6h-1.6zM232.02,267.30h1.6v1.6h-1.6zM232.02,279.45h1.6v1.6h-1.6zM232.02,291.60h1.6v1.6h-1.6zM232.02,303.75h1.6v1.6h-1.6zM232.02,315.90h1.6v1.6h-1.6zM232.02,328.05h1.6v1.6h-1.6zM232.02,340.20h1.6v1.6h-1.6zM232.02,352.35h1.6v1.6h-1.6zM232.02,364.50h1.6v1.6h-1.6zM232.02,376.65h1.6v1.6h-1.6zM232.02,388.80h1.6v1.6h-1.6zM232.02,400.95h1.6v1.6h-1.6zM232.02,413.10h1.6v1.6h-1.6zM232.02,425.25h1.6v1.6h-1.6zM232.02,437.40h1.6v1.6h-1.6zM232.02,449.55h1.6v1.6h-1.6zM232.02,461.70h1.6v1.6h-1.6zM232.02,473.85h1.6v1.6h-1.6zM232.02,486.00h1.6v1.6h-1.6zM232.02,498.15h1.6v1.6h-1.6zM232.02,510.30h1.6v1.6h-1.6zM232.02,522.45h1.6v1.6h-1.6zM232.02,534.60h1.6v1.6h-1.6zM232.02,546.75h1.6v1.6h-1.6zM232.02,558.90h1.6v1.6h-1.6zM232.02,571.05h1.6v1.6h-1.6zM232.02,583.20h1.6v1.6h-1.6zM232.02,595.35h1.6v1.6h-1.6zM244.16,48.60h1.6v1.6h-1.6zM244.16,60.75h1.6v1.6h-1.6zM244.16,72.90h1.6v1.6h-1.6zM244.16,85.05h1.6v1.6h-1.6zM244.16,97.20h1.6v1.6h-1.6zM244.16,109.35h1.6v1.6h-1.6zM244.16,121.50h1.6v1.6h-1.6zM244.16,133.65h1.6v1.6h-1.6zM244.16,145.80h1.6v1.6h-1.6zM244.16,157.95h1.6v1.6h-1.6zM244.16,170.10h1.6v1.6h-1.6zM244.16,182.25h1.6v1.6h-1.6zM244.16,194.40h1.6v1.6h-1.6zM244.16,206.55h1.6v1.6h-1.6zM244.16,218.70h1.6v1.6h-1.6zM244.16,230.85h1.6v1.6h-1.6zM244.16,243.00h1.6v1.6h-1.6zM244.16,255.15h1.6v1.6h-1.6zM244.16,267.30h1.6v1.6h-1.6zM244.16,279.45h1.6v1.6h-1.6zM244.16,291.60h1.6v1.6h-1.6zM244.16,303.75h1.6v1.6h-1.6zM244.16,315.90h1.6v1.6h-1.6zM244.16,328.05h1.6v1.6h-1.6zM244.16,340.20h1.6v1.6h-1.6zM244.16,352.35h1.6v1.6h-1.6zM244.16,364.50h1.6v1.6h-1.6zM244.16,376.65h1.6v1.6h-1.6zM244.16,388.80h1.6v1.6h-1.6zM244.16,400.95h1.6v1.6h-1.6zM244.16,413.10h1.6v1.6h-1.6zM244.16,425.25h1.6v1.6h-1.6zM244.16,437.40h1.6v1.6h-1.6zM244.16,449.55h1.6v1.6h-1.6zM244.16,461.70h1.6v1.6h-1.6zM244.16,473.85h1.6v1.6h-1.6zM244.16,486.00h1.6v1.6h-1.6zM244.16,498.15h1.6v1.6h-1.6zM244.16,510.30h1.6v1.6h-1.6zM244.16,522.45h1.6v1.6h-1.6zM244.16,534.60h1.6v1.6h-1.6zM244.16,546.75h1.6v1.6h-1.6zM244.16,558.90h1.6v1.6h-1.6zM244.16,571.05h1.6v1.6h-1.6zM244.16,583.20h1.6v1.6h-1.6zM244.16,595.35h1.6v1.6h-1.6zM256.30,48.60h1.6v1.6h-1.6zM256.30,60.75h1.6v1.6h-1.6zM256.30,72.90h1.6v1.6h-1.6zM256.30,85.05h1.6v1.6h-1.6zM256.30,97.20h1.6v1.6h-1.6zM256.30,109.35h1.6v1.6h-1.6zM256.30,121.50h1.6v1.6h-1.6zM256.30,133.65h1.6v1.6h-1.6zM256.30,145.80h1.6v1.6h-1.6zM256.30,157.95h1.6v1.6h-1.6zM256.30,170.10h1.6v1.6h-1.6zM256.30,182.25h1.6v1.6h-1.6zM256.30,194.40h1.6v1.6h-1.6zM256.30,206.55h1.6v1.6h-1.6zM256.30,218.70h1.6v1.6h-1.6zM256.30,230.85h1.6v1.6h-1.6zM256.30,243.00h1.6v1.6h-1.6zM256.30,255.15h1.6v1.6h-1.6zM256.30,267.30h1.6v1.6h-1.6zM256.30,279.45h1.6v1.6h-1.6zM256.30,291.60h1.6v1.6h-1.6zM256.30,303.75h1.6v1.6h-1.6zM256.30,315.90h1.6v1.6h-1.6zM256.30,328.05h1.6v1.6h-1.6zM256.30,340.20h1.6v1.6h-1.6zM256.30,352.35h1.6v1.6h-1.6zM256.30,364.50h1.6v1.6h-1.6zM256.30,376.65h1.6v1.6h-1.6zM256.30,388.80h1.6v1.6h-1.6zM256.30,400.95h1.6v1.6h-1.6zM256.30,413.10h1.6v1.6h-1.6zM256.30,425.25h1.6v1.6h-1.6zM256.30,437.40h1.6v1.6h-1.6zM256.30,449.55h1.6v1.6h-1.6zM256.30,461.70h1.6v1.6h-1.6zM256.30,473.85h1.6v1.6h-1.6zM256.30,486.00h1.6v1.6h-1.6zM256.30,498.15h1.6v1.6h-1.6zM256.30,510.30h1.6v1.6h-1.6zM256.30,522.45h1.6v1.6h-1.6zM256.30,534.60h1.6v1.6h-1.6zM256.30,546.75h1.6v1.6h-1.6zM256.30,558.90h1.6v1.6h-1.6zM256.30,571.05h1.6v1.6h-1.6zM256.30,583.20h1.6v1.6h-1.6zM256.30,595.35h1.6v1.6h-1.6zM268.44,48.60h1.6v1.6h-1.6zM268.44,60.75h1.6v1.6h-1.6zM268.44,72.90h1.6v1.6h-1.6zM268.44,85.05h1.6v1.6h-1.6zM268.44,97.20h1.6v1.6h-1.6zM268.44,109.35h1.6v1.6h-1.6zM268.44,121.50h1.6v1.6h-1.6zM268.44,133.65h1.6v1.6h-1.6zM268.44,145.80h1.6v1.6h-1.6zM268.44,157.95h1.6v1.6h-1.6zM268.44,170.10h1.6v1.6h-1.6zM268.44,182.25h1.6v1.6h-1.6zM268.44,194.40h1.6v1.6h-1.6zM268.44,206.55h1.6v1.6h-1.6zM268.44,218.70h1.6v1.6h-1.6zM268.44,230.85h1.6v1.6h-1.6zM268.44,243.00h1.6v1.6h-1.6zM268.44,255.15h1.6v1.6h-1.6zM268.44,267.30h1.6v1.6h-1.6zM268.44,279.45h1.6v1.6h-1.6zM268.44,291.60h1.6v1.6h-1.6zM268.44,303.75h1.6v1.6h-1.6zM268.44,315.90h1.6v1.6h-1.6zM268.44,328.05h1.6v1.6h-1.6zM268.44,340.20h1.6v1.6h-1.6zM268.44,352.35h1.6v1.6h-1.6zM268.44,364.50h1.6v1.6h-1.6zM268.44,376.65h1.6v1.6h-1.6zM268.44,388.80h1.6v1.6h-1.6zM268.44,400.95h1.6v1.6h-1.6zM268.44,413.10h1.6v1.6h-1.6zM268.44,425.25h1.6v1.6h-1.6zM268.44,437.40h1.6v1.6h-1.6zM268.44,449.55h1.6v1.6h-1.6zM268.44,461.70h1.6v1.6h-1.6zM268.44,473.85h1.6v1.6h-1.6zM268.44,486.00h1.6v1.6h-1.6zM268.44,498.15h1.6v1.6h-1.6zM268.44,510.30h1.6v1.6h-1.6zM268.44,522.45h1.6v1.6h-1.6zM268.44,534.60h1.6v1.6h-1.6zM268.44,546.75h1.6v1.6h-1.6zM268.44,558.90h1.6v1.6h-1.6zM268.44,571.05h1.6v1.6h-1.6zM268.44,583.20h1.6v1.6h-1.6zM268.44,595.35h1.6v1.6h-1.6zM280.58,48.60h1.6v1.6h-1.6zM280.58,60.75h1.6v1.6h-1.6zM280.58,72.90h1.6v1.6h-1.6zM280.58,85.05h1.6v1.6h-1.6zM280.58,97.20h1.6v1.6h-1.6zM280.58,109.35h1.6v1.6h-1.6zM280.58,121.50h1.6v1.6h-1.6zM280.58,133.65h1.6v1.6h-1.6zM280.58,145.80h1.6v1.6h-1.6zM280.58,157.95h1.6v1.6h-1.6zM280.58,170.10h1.6v1.6h-1.6zM280.58,182.25h1.6v1.6h-1.6zM280.58,194.40h1.6v1.6h-1.6zM280.58,206.55h1.6v1.6h-1.6zM280.58,218.70h1.6v1.6h-1.6zM280.58,230.85h1.6v1.6h-1.6zM280.58,243.00h1.6v1.6h-1.6zM280.58,255.15h1.6v1.6h-1.6zM280.58,267.30h1.6v1.6h-1.6zM280.58,279.45h1.6v1.6h-1.6zM280.58,291.60h1.6v1.6h-1.6zM280.58,303.75h1.6v1.6h-1.6zM280.58,315.90h1.6v1.6h-1.6zM280.58,328.05h1.6v1.6h-1.6zM280.58,340.20h1.6v1.6h-1.6zM280.58,352.35h1.6v1.6h-1.6zM280.58,364.50h1.6v1.6h-1.6zM280.58,376.65h1.6v1.6h-1.6zM280.58,388.80h1.6v1.6h-1.6zM280.58,400.95h1.6v1.6h-1.6zM280.58,413.10h1.6v1.6h-1.6zM280.58,425.25h1.6v1.6h-1.6zM280.58,437.40h1.6v1.6h-1.6zM280.58,449.55h1.6v1.6h-1.6zM280.58,461.70h1.6v1.6h-1.6zM280.58,473.85h1.6v1.6h-1.6zM280.58,486.00h1.6v1.6h-1.6zM280.58,498.15h1.6v1.6h-1.6zM280.58,510.30h1.6v1.6h-1.6zM280.58,522.45h1.6v1.6h-1.6zM280.58,534.60h1.6v1.6h-1.6zM280.58,546.75h1.6v1.6h-1.6zM280.58,558.90h1.6v1.6h-1.6zM280.58,571.05h1.6v1.6h-1.6zM280.58,583.20h1.6v1.6h-1.6zM280.58,595.35h1.6v1.6h-1.6zM292.72,48.60h1.6v1.6h-1.6zM292.72,60.75h1.6v1.6h-1.6zM292.72,72.90h1.6v1.6h-1.6zM292.72,85.05h1.6v1.6h-1.6zM292.72,97.20h1.6v1.6h-1.6zM292.72,109.35h1.6v1.6h-1.6zM292.72,121.50h1.6v1.6h-1.6zM292.72,133.65h1.6v1.6h-1.6zM292.72,145.80h1.6v1.6h-1.6zM292.72,157.95h1.6v1.6h-1.6zM292.72,170.10h1.6v1.6h-1.6zM292.72,182.25h1.6v1.6h-1.6zM292.72,194.40h1.6v1.6h-1.6zM292.72,206.55h1.6v1.6h-1.6zM292.72,218.70h1.6v1.6h-1.6zM292.72,230.85h1.6v1.6h-1.6zM292.72,243.00h1.6v1.6h-1.6zM292.72,255.15h1.6v1.6h-1.6zM292.72,267.30h1.6v1.6h-1.6zM292.72,279.45h1.6v1.6h-1.6zM292.72,291.60h1.6v1.6h-1.6zM292.72,303.75h1.6v1.6h-1.6zM292.72,315.90h1.6v1.6h-1.6zM292.72,328.05h1.6v1.6h-1.6zM292.72,340.20h1.6v1.6h-1.6zM292.72,352.35h1.6v1.6h-1.6zM292.72,364.50h1.6v1.6h-1.6zM292.72,376.65h1.6v1.6h-1.6zM292.72,388.80h1.6v1.6h-1.6zM292.72,400.95h1.6v1.6h-1.6zM292.72,413.10h1.6v1.6h-1.6zM292.72,425.25h1.6v1.6h-1.6zM292.72,437.40h1.6v1.6h-1.6zM292.72,449.55h1.6v1.6h-1.6zM292.72,461.70h1.6v1.6h-1.6zM292.72,473.85h1.6v1.6h-1.6zM292.72,486.00h1.6v1.6h-1.6zM292.72,498.15h1.6v1.6h-1.6zM292.72,510.30h1.6v1.6h-1.6zM292.72,522.45h1.6v1.6h-1.6zM292.72,534.60h1.6v1.6h-1.6zM292.72,546.75h1.6v1.6h-1.6zM292.72,558.90h1.6v1.6h-1.6zM292.72,571.05h1.6v1.6h-1.6zM292.72,583.20h1.6v1.6h-1.6zM292.72,595.35h1.6v1.6h-1.6zM304.86,48.60h1.6v1.6h-1.6zM304.86,60.75h1.6v1.6h-1.6zM304.86,72.90h1.6v1.6h-1.6zM304.86,85.05h1.6v1.6h-1.6zM304.86,97.20h1.6v1.6h-1.6zM304.86,109.35h1.6v1.6h-1.6zM304.86,121.50h1.6v1.6h-1.6zM304.86,133.65h1.6v1.6h-1.6zM304.86,145.80h1.6v1.6h-1.6zM304.86,157.95h1.6v1.6h-1.6zM304.86,170.10h1.6v1.6h-1.6zM304.86,182.25h1.6v1.6h-1.6zM304.86,194.40h1.6v1.6h-1.6zM304.86,206.55h1.6v1.6h-1.6zM304.86,218.70h1.6v1.6h-1.6zM304.86,230.85h1.6v1.6h-1.6zM304.86,243.00h1.6v1.6h-1.6zM304.86,255.15h1.6v1.6h-1.6zM304.86,267.30h1.6v1.6h-1.6zM304.86,279.45h1.6v1.6h-1.6zM304.86,291.60h1.6v1.6h-1.6zM304.86,303.75h1.6v1.6h-1.6zM304.86,315.90h1.6v1.6h-1.6zM304.86,328.05h1.6v1.6h-1.6zM304.86,340.20h1.6v1.6h-1.6zM304.86,352.35h1.6v1.6h-1.6zM304.86,364.50h1.6v1.6h-1.6zM304.86,376.65h1.6v1.6h-1.6zM304.86,388.80h1.6v1.6h-1.6zM304.86,400.95h1.6v1.6h-1.6zM304.86,413.10h1.6v1.6h-1.6zM304.86,425.25h1.6v1.6h-1.6zM304.86,437.40h1.6v1.6h-1.6zM304.86,449.55h1.6v1.6h-1.6zM304.86,461.70h1.6v1.6h-1.6zM304.86,473.85h1.6v1.6h-1.6zM304.86,486.00h1.6v1.6h-1.6zM304.86,498.15h1.6v1.6h-1.6zM304.86,510.30h1.6v1.6h-1.6zM304.86,522.45h1.6v1.6h-1.6zM304.86,534.60h1.6v1.6h-1.6zM304.86,546.75h1.6v1.6h-1.6zM304.86,558.90h1.6v1.6h-1.6zM304.86,571.05h1.6v1.6h-1.6zM304.86,583.20h1.6v1.6h-1.6zM304.86,595.35h1.6v1.6h-1.6zM317.00,48.60h1.6v1.6h-1.6zM317.00,60.75h1.6v1.6h-1.6zM317.00,72.90h1.6v1.6h-1.6zM317.00,85.05h1.6v1.6h-1.6zM317.00,97.20h1.6v1.6h-1.6zM317.00,109.35h1.6v1.6h-1.6zM317.00,121.50h1.6v1.6h-1.6zM317.00,133.65h1.6v1.6h-1.6zM317.00,145.80h1.6v1.6h-1.6zM317.00,157.95h1.6v1.6h-1.6zM317.00,170.10h1.6v1.6h-1.6zM317.00,182.25h1.6v1.6h-1.6zM317.00,194.40h1.6v1.6h-1.6zM317.00,206.55h1.6v1.6h-1.6zM317.00,218.70h1.6v1.6h-1.6zM317.00,230.85h1.6v1.6h-1.6zM317.00,243.00h1.6v1.6h-1.6zM317.00,255.15h1.6v1.6h-1.6zM317.00,267.30h1.6v1.6h-1.6zM317.00,279.45h1.6v1.6h-1.6zM317.00,291.60h1.6v1.6h-1.6zM317.00,303.75h1.6v1.6h-1.6zM317.00,315.90h1.6v1.6h-1.6zM317.00,328.05h1.6v1.6h-1.6zM317.00,340.20h1.6v1.6h-1.6zM317.00,352.35h1.6v1.6h-1.6zM317.00,364.50h1.6v1.6h-1.6zM317.00,376.65h1.6v1.6h-1.6zM317.00,388.80h1.6v1.6h-1.6zM317.00,400.95h1.6v1.6h-1.6zM317.00,413.10h1.6v1.6h-1.6zM317.00,425.25h1.6v1.6h-1.6zM317.00,437.40h1.6v1.6h-1.6zM317.00,449.55h1.6v1.6h-1.6zM317.00,461.70h1.6v1.6h-1.6zM317.00,473.85h1.6v1.6h-1.6zM317.00,486.00h1.6v1.6h-1.6zM317.00,498.15h1.6v1.6h-1.6zM317.00,510.30h1.6v1.6h-1.6zM317.00,522.45h1.6v1.6h-1.6zM317.00,534.60h1.6v1.6h-1.6zM317.00,546.75h1.6v1.6h-1.6zM317.00,558.90h1.6v1.6h-1.6zM317.00,571.05h1.6v1.6h-1.6zM317.00,583.20h1.6v1.6h-1.6zM317.00,595.35h1.6v1.6h-1.6zM329.14,48.60h1.6v1.6h-1.6zM329.14,60.75h1.6v1.6h-1.6zM329.14,72.90h1.6v1.6h-1.6zM329.14,85.05h1.6v1.6h-1.6zM329.14,97.20h1.6v1.6h-1.6zM329.14,109.35h1.6v1.6h-1.6zM329.14,121.50h1.6v1.6h-1.6zM329.14,133.65h1.6v1.6h-1.6zM329.14,145.80h1.6v1.6h-1.6zM329.14,157.95h1.6v1.6h-1.6zM329.14,170.10h1.6v1.6h-1.6zM329.14,182.25h1.6v1.6h-1.6zM329.14,194.40h1.6v1.6h-1.6zM329.14,206.55h1.6v1.6h-1.6zM329.14,218.70h1.6v1.6h-1.6zM329.14,230.85h1.6v1.6h-1.6zM329.14,243.00h1.6v1.6h-1.6zM329.14,255.15h1.6v1.6h-1.6zM329.14,267.30h1.6v1.6h-1.6zM329.14,279.45h1.6v1.6h-1.6zM329.14,291.60h1.6v1.6h-1.6zM329.14,303.75h1.6v1.6h-1.6zM329.14,315.90h1.6v1.6h-1.6zM329.14,328.05h1.6v1.6h-1.6zM329.14,340.20h1.6v1.6h-1.6zM329.14,352.35h1.6v1.6h-1.6zM329.14,364.50h1.6v1.6h-1.6zM329.14,376.65h1.6v1.6h-1.6zM329.14,388.80h1.6v1.6h-1.6zM329.14,400.95h1.6v1.6h-1.6zM329.14,413.10h1.6v1.6h-1.6zM329.14,425.25h1.6v1.6h-1.6zM329.14,437.40h1.6v1.6h-1.6zM329.14,449.55h1.6v1.6h-1.6zM329.14,461.70h1.6v1.6h-1.6zM329.14,473.85h1.6v1.6h-1.6zM329.14,486.00h1.6v1.6h-1.6zM329.14,498.15h1.6v1.6h-1.6zM329.14,510.30h1.6v1.6h-1.6zM329.14,522.45h1.6v1.6h-1.6zM329.14,534.60h1.6v1.6h-1.6zM329.14,546.75h1.6v1.6h-1.6zM329.14,558.90h1.6v1.6h-1.6zM329.14,571.05h1.6v1.6h-1.6zM329.14,583.20h1.6v1.6h-1.6zM329.14,595.35h1.6v1.6h-1.6zM341.28,48.60h1.6v1.6h-1.6zM341.28,60.75h1.6v1.6h-1.6zM341.28,72.90h1.6v1.6h-1.6zM341.28,85.05h1.6v1.6h-1.6zM341.28,97.20h1.6v1.6h-1.6zM341.28,109.35h1.6v1.6h-1.6zM341.28,121.50h1.6v1.6h-1.6zM341.28,133.65h1.6v1.6h-1.6zM341.28,145.80h1.6v1.6h-1.6zM341.28,157.95h1.6v1.6h-1.6zM341.28,170.10h1.6v1.6h-1.6zM341.28,182.25h1.6v1.6h-1.6zM341.28,194.40h1.6v1.6h-1.6zM341.28,206.55h1.6v1.6h-1.6zM341.28,218.70h1.6v1.6h-1.6zM341.28,230.85h1.6v1.6h-1.6zM341.28,243.00h1.6v1.6h-1.6zM341.28,255.15h1.6v1.6h-1.6zM341.28,267.30h1.6v1.6h-1.6zM341.28,279.45h1.6v1.6h-1.6zM341.28,291.60h1.6v1.6h-1.6zM341.28,303.75h1.6v1.6h-1.6zM341.28,315.90h1.6v1.6h-1.6zM341.28,328.05h1.6v1.6h-1.6zM341.28,340.20h1.6v1.6h-1.6zM341.28,352.35h1.6v1.6h-1.6zM341.28,364.50h1.6v1.6h-1.6zM341.28,376.65h1.6v1.6h-1.6zM341.28,388.80h1.6v1.6h-1.6zM341.28,400.95h1.6v1.6h-1.6zM341.28,413.10h1.6v1.6h-1.6zM341.28,425.25h1.6v1.6h-1.6zM341.28,437.40h1.6v1.6h-1.6zM341.28,449.55h1.6v1.6h-1.6zM341.28,461.70h1.6v1.6h-1.6zM341.28,473.85h1.6v1.6h-1.6zM341.28,486.00h1.6v1.6h-1.6zM341.28,498.15h1.6v1.6h-1.6zM341.28,510.30h1.6v1.6h-1.6zM341.28,522.45h1.6v1.6h-1.6zM341.28,534.60h1.6v1.6h-1.6zM341.28,546.75h1.6v1.6h-1.6zM341.28,558.90h1.6v1.6h-1.6zM341.28,571.05h1.6v1.6h-1.6zM341.28,583.20h1.6v1.6h-1.6zM341.28,595.35h1.6v1.6h-1.6zM353.42,48.60h1.6v1.6h-1.6zM353.42,60.75h1.6v1.6h-1.6zM353.42,72.90h1.6v1.6h-1.6zM353.42,85.05h1.6v1.6h-1.6zM353.42,97.20h1.6v1.6h-1.6zM353.42,109.35h1.6v1.6h-1.6zM353.42,121.50h1.6v1.6h-1.6zM353.42,133.65h1.6v1.6h-1.6zM353.42,145.80h1.6v1.6h-1.6zM353.42,157.95h1.6v1.6h-1.6zM353.42,170.10h1.6v1.6h-1.6zM353.42,182.25h1.6v1.6h-1.6zM353.42,194.40h1.6v1.6h-1.6zM353.42,206.55h1.6v1.6h-1.6zM353.42,218.70h1.6v1.6h-1.6zM353.42,230.85h1.6v1.6h-1.6zM353.42,243.00h1.6v1.6h-1.6zM353.42,255.15h1.6v1.6h-1.6zM353.42,267.30h1.6v1.6h-1.6zM353.42,279.45h1.6v1.6h-1.6zM353.42,291.60h1.6v1.6h-1.6zM353.42,303.75h1.6v1.6h-1.6zM353.42,315.90h1.6v1.6h-1.6zM353.42,328.05h1.6v1.6h-1.6zM353.42,340.20h1.6v1.6h-1.6zM353.42,352.35h1.6v1.6h-1.6zM353.42,364.50h1.6v1.6h-1.6zM353.42,376.65h1.6v1.6h-1.6zM353.42,388.80h1.6v1.6h-1.6zM353.42,400.95h1.6v1.6h-1.6zM353.42,413.10h1.6v1.6h-1.6zM353.42,425.25h1.6v1.6h-1.6zM353.42,437.40h1.6v1.6h-1.6zM353.42,449.55h1.6v1.6h-1.6zM353.42,461.70h1.6v1.6h-1.6zM353.42,473.85h1.6v1.6h-1.6zM353.42,486.00h1.6v1.6h-1.6zM353.42,498.15h1.6v1.6h-1.6zM353.42,510.30h1.6v1.6h-1.6zM353.42,522.45h1.6v1.6h-1.6zM353.42,534.60h1.6v1.6h-1.6zM353.42,546.75h1.6v1.6h-1.6zM353.42,558.90h1.6v1.6h-1.6zM353.42,571.05h1.6v1.6h-1.6zM353.42,583.20h1.6v1.6h-1.6zM353.42,595.35h1.6v1.6h-1.6zM365.56,48.60h1.6v1.6h-1.6zM365.56,60.75h1.6v1.6h-1.6zM365.56,72.90h1.6v1.6h-1.6zM365.56,85.05h1.6v1.6h-1.6zM365.56,97.20h1.6v1.6h-1.6zM365.56,109.35h1.6v1.6h-1.6zM365.56,121.50h1.6v1.6h-1.6zM365.56,133.65h1.6v1.6h-1.6zM365.56,145.80h1.6v1.6h-1.6zM365.56,157.95h1.6v1.6h-1.6zM365.56,170.10h1.6v1.6h-1.6zM365.56,182.25h1.6v1.6h-1.6zM365.56,194.40h1.6v1.6h-1.6zM365.56,206.55h1.6v1.6h-1.6zM365.56,218.70h1.6v1.6h-1.6zM365.56,230.85h1.6v1.6h-1.6zM365.56,243.00h1.6v1.6h-1.6zM365.56,255.15h1.6v1.6h-1.6zM365.56,267.30h1.6v1.6h-1.6zM365.56,279.45h1.6v1.6h-1.6zM365.56,291.60h1.6v1.6h-1.6zM365.56,303.75h1.6v1.6h-1.6zM365.56,315.90h1.6v1.6h-1.6zM365.56,328.05h1.6v1.6h-1.6zM365.56,340.20h1.6v1.6h-1.6zM365.56,352.35h1.6v1.6h-1.6zM365.56,364.50h1.6v1.6h-1.6zM365.56,376.65h1.6v1.6h-1.6zM365.56,388.80h1.6v1.6h-1.6zM365.56,400.95h1.6v1.6h-1.6zM365.56,413.10h1.6v1.6h-1.6zM365.56,425.25h1.6v1.6h-1.6zM365.56,437.40h1.6v1.6h-1.6zM365.56,449.55h1.6v1.6h-1.6zM365.56,461.70h1.6v1.6h-1.6zM365.56,473.85h1.6v1.6h-1.6zM365.56,486.00h1.6v1.6h-1.6zM365.56,498.15h1.6v1.6h-1.6zM365.56,510.30h1.6v1.6h-1.6zM365.56,522.45h1.6v1.6h-1.6zM365.56,534.60h1.6v1.6h-1.6zM365.56,546.75h1.6v1.6h-1.6zM365.56,558.90h1.6v1.6h-1.6zM365.56,571.05h1.6v1.6h-1.6zM365.56,583.20h1.6v1.6h-1.6zM365.56,595.35h1.6v1.6h-1.6zM377.70,48.60h1.6v1.6h-1.6zM377.70,60.75h1.6v1.6h-1.6zM377.70,72.90h1.6v1.6h-1.6zM377.70,85.05h1.6v1.6h-1.6zM377.70,97.20h1.6v1.6h-1.6zM377.70,109.35h1.6v1.6h-1.6zM377.70,121.50h1.6v1.6h-1.6zM377.70,133.65h1.6v1.6h-1.6zM377.70,145.80h1.6v1.6h-1.6zM377.70,157.95h1.6v1.6h-1.6zM377.70,170.10h1.6v1.6h-1.6zM377.70,182.25h1.6v1.6h-1.6zM377.70,194.40h1.6v1.6h-1.6zM377.70,206.55h1.6v1.6h-1.6zM377.70,218.70h1.6v1.6h-1.6zM377.70,230.85h1.6v1.6h-1.6zM377.70,243.00h1.6v1.6h-1.6zM377.70,255.15h1.6v1.6h-1.6zM377.70,267.30h1.6v1.6h-1.6zM377.70,279.45h1.6v1.6h-1.6zM377.70,291.60h1.6v1.6h-1.6zM377.70,303.75h1.6v1.6h-1.6zM377.70,315.90h1.6v1.6h-1.6zM377.70,328.05h1.6v1.6h-1.6zM377.70,340.20h1.6v1.6h-1.6zM377.70,352.35h1.6v1.6h-1.6zM377.70,364.50h1.6v1.6h-1.6zM377.70,376.65h1.6v1.6h-1.6zM377.70,388.80h1.6v1.6h-1.6zM377.70,400.95h1.6v1.6h-1.6zM377.70,413.10h1.6v1.6h-1.6zM377.70,425.25h1.6v1.6h-1.6zM377.70,437.40h1.6v1.6h-1.6zM377.70,449.55h1.6v1.6h-1.6zM377.70,461.70h1.6v1.6h-1.6zM377.70,473.85h1.6v1.6h-1.6zM377.70,486.00h1.6v1.6h-1.6zM377.70,498.15h1.6v1.6h-1.6zM377.70,510.30h1.6v1.6h-1.6zM377.70,522.45h1.6v1.6h-1.6zM377.70,534.60h1.6v1.6h-1.6zM377.70,546.75h1.6v1.6h-1.6zM377.70,558.90h1.6v1.6h-1.6zM377.70,571.05h1.6v1.6h-1.6zM377.70,583.20h1.6v1.6h-1.6zM377.70,595.35h1.6v1.6h-1.6zM389.84,48.60h1.6v1.6h-1.6zM389.84,60.75h1.6v1.6h-1.6zM389.84,72.90h1.6v1.6h-1.6zM389.84,85.05h1.6v1.6h-1.6zM389.84,97.20h1.6v1.6h-1.6zM389.84,109.35h1.6v1.6h-1.6zM389.84,121.50h1.6v1.6h-1.6zM389.84,133.65h1.6v1.6h-1.6zM389.84,145.80h1.6v1.6h-1.6zM389.84,157.95h1.6v1.6h-1.6zM389.84,170.10h1.6v1.6h-1.6zM389.84,182.25h1.6v1.6h-1.6zM389.84,194.40h1.6v1.6h-1.6zM389.84,206.55h1.6v1.6h-1.6zM389.84,218.70h1.6v1.6h-1.6zM389.84,230.85h1.6v1.6h-1.6zM389.84,243.00h1.6v1.6h-1.6zM389.84,255.15h1.6v1.6h-1.6zM389.84,267.30h1.6v1.6h-1.6zM389.84,279.45h1.6v1.6h-1.6zM389.84,291.60h1.6v1.6h-1.6zM389.84,303.75h1.6v1.6h-1.6zM389.84,315.90h1.6v1.6h-1.6zM389.84,328.05h1.6v1.6h-1.6zM389.84,340.20h1.6v1.6h-1.6zM389.84,352.35h1.6v1.6h-1.6zM389.84,364.50h1.6v1.6h-1.6zM389.84,376.65h1.6v1.6h-1.6zM389.84,388.80h1.6v1.6h-1.6zM389.84,400.95h1.6v1.6h-1.6zM389.84,413.10h1.6v1.6h-1.6zM389.84,425.25h1.6v1.6h-1.6zM389.84,437.40h1.6v1.6h-1.6zM389.84,449.55h1.6v1.6h-1.6zM389.84,461.70h1.6v1.6h-1.6zM389.84,473.85h1.6v1.6h-1.6zM389.84,486.00h1.6v1.6h-1.6zM389.84,498.15h1.6v1.6h-1.6zM389.84,510.30h1.6v1.6h-1.6zM389.84,522.45h1.6v1.6h-1.6zM389.84,534.60h1.6v1.6h-1.6zM389.84,546.75h1.6v1.6h-1.6zM389.84,558.90h1.6v1.6h-1.6zM389.84,571.05h1.6v1.6h-1.6zM389.84,583.20h1.6v1.6h-1.6zM389.84,595.35h1.6v1.6h-1.6zM401.98,48.60h1.6v1.6h-1.6zM401.98,60.75h1.6v1.6h-1.6zM401.98,72.90h1.6v1.6h-1.6zM401.98,85.05h1.6v1.6h-1.6zM401.98,97.20h1.6v1.6h-1.6zM401.98,109.35h1.6v1.6h-1.6zM401.98,121.50h1.6v1.6h-1.6zM401.98,133.65h1.6v1.6h-1.6zM401.98,145.80h1.6v1.6h-1.6zM401.98,157.95h1.6v1.6h-1.6zM401.98,170.10h1.6v1.6h-1.6zM401.98,182.25h1.6v1.6h-1.6zM401.98,194.40h1.6v1.6h-1.6zM401.98,206.55h1.6v1.6h-1.6zM401.98,218.70h1.6v1.6h-1.6zM401.98,230.85h1.6v1.6h-1.6zM401.98,243.00h1.6v1.6h-1.6zM401.98,255.15h1.6v1.6h-1.6zM401.98,267.30h1.6v1.6h-1.6zM401.98,279.45h1.6v1.6h-1.6zM401.98,291.60h1.6v1.6h-1.6zM401.98,303.75h1.6v1.6h-1.6zM401.98,315.90h1.6v1.6h-1.6zM401.98,328.05h1.6v1.6h-1.6zM401.98,340.20h1.6v1.6h-1.6zM401.98,352.35h1.6v1.6h-1.6zM401.98,364.50h1.6v1.6h-1.6zM401.98,376.65h1.6v1.6h-1.6zM401.98,388.80h1.6v1.6h-1.6zM401.98,400.95h1.6v1.6h-1.6zM401.98,413.10h1.6v1.6h-1.6zM401.98,425.25h1.6v1.6h-1.6zM401.98,437.40h1.6v1.6h-1.6zM401.98,449.55h1.6v1.6h-1.6zM401.98,461.70h1.6v1.6h-1.6zM401.98,473.85h1.6v1.6h-1.6zM401.98,486.00h1.6v1.6h-1.6zM401.98,498.15h1.6v1.6h-1.6zM401.98,510.30h1.6v1.6h-1.6zM401.98,522.45h1.6v1.6h-1.6zM401.98,534.60h1.6v1.6h-1.6zM401.98,546.75h1.6v1.6h-1.6zM401.98,558.90h1.6v1.6h-1.6zM401.98,571.05h1.6v1.6h-1.6zM401.98,583.20h1.6v1.6h-1.6zM401.98,595.35h1.6v1.6h-1.6zM414.12,48.60h1.6v1.6h-1.6zM414.12,60.75h1.6v1.6h-1.6zM414.12,72.90h1.6v1.6h-1.6zM414.12,85.05h1.6v1.6h-1.6zM414.12,97.20h1.6v1.6h-1.6zM414.12,109.35h1.6v1.6h-1.6zM414.12,121.50h1.6v1.6h-1.6zM414.12,133.65h1.6v1.6h-1.6zM414.12,145.80h1.6v1.6h-1.6zM414.12,157.95h1.6v1.6h-1.6zM414.12,170.10h1.6v1.6h-1.6zM414.12,182.25h1.6v1.6h-1.6zM414.12,194.40h1.6v1.6h-1.6zM414.12,206.55h1.6v1.6h-1.6zM414.12,218.70h1.6v1.6h-1.6zM414.12,230.85h1.6v1.6h-1.6zM414.12,243.00h1.6v1.6h-1.6zM414.12,255.15h1.6v1.6h-1.6zM414.12,267.30h1.6v1.6h-1.6zM414.12,279.45h1.6v1.6h-1.6zM414.12,291.60h1.6v1.6h-1.6zM414.12,303.75h1.6v1.6h-1.6zM414.12,315.90h1.6v1.6h-1.6zM414.12,328.05h1.6v1.6h-1.6zM414.12,340.20h1.6v1.6h-1.6zM414.12,352.35h1.6v1.6h-1.6zM414.12,364.50h1.6v1.6h-1.6zM414.12,376.65h1.6v1.6h-1.6zM414.12,388.80h1.6v1.6h-1.6zM414.12,400.95h1.6v1.6h-1.6zM414.12,413.10h1.6v1.6h-1.6zM414.12,425.25h1.6v1.6h-1.6zM414.12,437.40h1.6v1.6h-1.6zM414.12,449.55h1.6v1.6h-1.6zM414.12,461.70h1.6v1.6h-1.6zM414.12,473.85h1.6v1.6h-1.6zM414.12,486.00h1.6v1.6h-1.6zM414.12,498.15h1.6v1.6h-1.6zM414.12,510.30h1.6v1.6h-1.6zM414.12,522.45h1.6v1.6h-1.6zM414.12,534.60h1.6v1.6h-1.6zM414.12,546.75h1.6v1.6h-1.6zM414.12,558.90h1.6v1.6h-1.6zM414.12,571.05h1.6v1.6h-1.6zM414.12,583.20h1.6v1.6h-1.6zM414.12,595.35h1.6v1.6h-1.6zM426.26,48.60h1.6v1.6h-1.6zM426.26,60.75h1.6v1.6h-1.6zM426.26,72.90h1.6v1.6h-1.6zM426.26,85.05h1.6v1.6h-1.6zM426.26,97.20h1.6v1.6h-1.6zM426.26,109.35h1.6v1.6h-1.6zM426.26,121.50h1.6v1.6h-1.6zM426.26,133.65h1.6v1.6h-1.6zM426.26,145.80h1.6v1.6h-1.6zM426.26,157.95h1.6v1.6h-1.6zM426.26,170.10h1.6v1.6h-1.6zM426.26,182.25h1.6v1.6h-1.6zM426.26,194.40h1.6v1.6h-1.6zM426.26,206.55h1.6v1.6h-1.6zM426.26,218.70h1.6v1.6h-1.6zM426.26,230.85h1.6v1.6h-1.6zM426.26,243.00h1.6v1.6h-1.6zM426.26,255.15h1.6v1.6h-1.6zM426.26,267.30h1.6v1.6h-1.6zM426.26,279.45h1.6v1.6h-1.6zM426.26,291.60h1.6v1.6h-1.6zM426.26,303.75h1.6v1.6h-1.6zM426.26,315.90h1.6v1.6h-1.6zM426.26,328.05h1.6v1.6h-1.6zM426.26,340.20h1.6v1.6h-1.6zM426.26,352.35h1.6v1.6h-1.6zM426.26,364.50h1.6v1.6h-1.6zM426.26,376.65h1.6v1.6h-1.6zM426.26,388.80h1.6v1.6h-1.6zM426.26,400.95h1.6v1.6h-1.6zM426.26,413.10h1.6v1.6h-1.6zM426.26,425.25h1.6v1.6h-1.6zM426.26,437.40h1.6v1.6h-1.6zM426.26,449.55h1.6v1.6h-1.6zM426.26,461.70h1.6v1.6h-1.6zM426.26,473.85h1.6v1.6h-1.6zM426.26,486.00h1.6v1.6h-1.6zM426.26,498.15h1.6v1.6h-1.6zM426.26,510.30h1.6v1.6h-1.6zM426.26,522.45h1.6v1.6h-1.6zM426.26,534.60h1.6v1.6h-1.6zM426.26,546.75h1.6v1.6h-1.6zM426.26,558.90h1.6v1.6h-1.6zM426.26,571.05h1.6v1.6h-1.6zM426.26,583.20h1.6v1.6h-1.6zM426.26,595.35h1.6v1.6h-1.6zM438.40,48.60h1.6v1.6h-1.6zM438.40,60.75h1.6v1.6h-1.6zM438.40,72.90h1.6v1.6h-1.6zM438.40,85.05h1.6v1.6h-1.6zM438.40,97.20h1.6v1.6h-1.6zM438.40,109.35h1.6v1.6h-1.6zM438.40,121.50h1.6v1.6h-1.6zM438.40,133.65h1.6v1.6h-1.6zM438.40,145.80h1.6v1.6h-1.6zM438.40,157.95h1.6v1.6h-1.6zM438.40,170.10h1.6v1.6h-1.6zM438.40,182.25h1.6v1.6h-1.6zM438.40,194.40h1.6v1.6h-1.6zM438.40,206.55h1.6v1.6h-1.6zM438.40,218.70h1.6v1.6h-1.6zM438.40,230.85h1.6v1.6h-1.6zM438.40,243.00h1.6v1.6h-1.6zM438.40,255.15h1.6v1.6h-1.6zM438.40,267.30h1.6v1.6h-1.6zM438.40,279.45h1.6v1.6h-1.6zM438.40,291.60h1.6v1.6h-1.6zM438.40,303.75h1.6v1.6h-1.6zM438.40,315.90h1.6v1.6h-1.6zM438.40,328.05h1.6v1.6h-1.6zM438.40,340.20h1.6v1.6h-1.6zM438.40,352.35h1.6v1.6h-1.6zM438.40,364.50h1.6v1.6h-1.6zM438.40,376.65h1.6v1.6h-1.6zM438.40,388.80h1.6v1.6h-1.6zM438.40,400.95h1.6v1.6h-1.6zM438.40,413.10h1.6v1.6h-1.6zM438.40,425.25h1.6v1.6h-1.6zM438.40,437.40h1.6v1.6h-1.6zM438.40,449.55h1.6v1.6h-1.6zM438.40,461.70h1.6v1.6h-1.6zM438.40,473.85h1.6v1.6h-1.6zM438.40,486.00h1.6v1.6h-1.6zM438.40,498.15h1.6v1.6h-1.6zM438.40,510.30h1.6v1.6h-1.6zM438.40,522.45h1.6v1.6h-1.6zM438.40,534.60h1.6v1.6h-1.6zM438.40,546.75h1.6v1.6h-1.6zM438.40,558.90h1.6v1.6h-1.6zM438.40,571.05h1.6v1.6h-1.6zM438.40,583.20h1.6v1.6h-1.6zM438.40,595.35h1.6v1.6h-1.6zM450.54,48.60h1.6v1.6h-1.6zM450.54,60.75h1.6v1.6h-1.6zM450.54,72.90h1.6v1.6h-1.6zM450.54,85.05h1.6v1.6h-1.6zM450.54,97.20h1.6v1.6h-1.6zM450.54,109.35h1.6v1.6h-1.6zM450.54,121.50h1.6v1.6h-1.6zM450.54,133.65h1.6v1.6h-1.6zM450.54,145.80h1.6v1.6h-1.6zM450.54,157.95h1.6v1.6h-1.6zM450.54,170.10h1.6v1.6h-1.6zM450.54,182.25h1.6v1.6h-1.6zM450.54,194.40h1.6v1.6h-1.6zM450.54,206.55h1.6v1.6h-1.6zM450.54,218.70h1.6v1.6h-1.6zM450.54,230.85h1.6v1.6h-1.6zM450.54,243.00h1.6v1.6h-1.6zM450.54,255.15h1.6v1.6h-1.6zM450.54,267.30h1.6v1.6h-1.6zM450.54,279.45h1.6v1.6h-1.6zM450.54,291.60h1.6v1.6h-1.6zM450.54,303.75h1.6v1.6h-1.6zM450.54,315.90h1.6v1.6h-1.6zM450.54,328.05h1.6v1.6h-1.6zM450.54,340.20h1.6v1.6h-1.6zM450.54,352.35h1.6v1.6h-1.6zM450.54,364.50h1.6v1.6h-1.6zM450.54,376.65h1.6v1.6h-1.6zM450.54,388.80h1.6v1.6h-1.6zM450.54,400.95h1.6v1.6h-1.6zM450.54,413.10h1.6v1.6h-1.6zM450.54,425.25h1.6v1.6h-1.6zM450.54,437.40h1.6v1.6h-1.6zM450.54,449.55h1.6v1.6h-1.6zM450.54,461.70h1.6v1.6h-1.6zM450.54,473.85h1.6v1.6h-1.6zM450.54,486.00h1.6v1.6h-1.6zM450.54,498.15h1.6v1.6h-1.6zM450.54,510.30h1.6v1.6h-1.6zM450.54,522.45h1.6v1.6h-1.6zM450.54,534.60h1.6v1.6h-1.6zM450.54,546.75h1.6v1.6h-1.6zM450.54,558.90h1.6v1.6h-1.6zM450.54,571.05h1.6v1.6h-1.6zM450.54,583.20h1.6v1.6h-1.6zM450.54,595.35h1.6v1.6h-1.6zM462.68,48.60h1.6v1.6h-1.6zM462.68,60.75h1.6v1.6h-1.6zM462.68,72.90h1.6v1.6h-1.6zM462.68,85.05h1.6v1.6h-1.6zM462.68,97.20h1.6v1.6h-1.6zM462.68,109.35h1.6v1.6h-1.6zM462.68,121.50h1.6v1.6h-1.6zM462.68,133.65h1.6v1.6h-1.6zM462.68,145.80h1.6v1.6h-1.6zM462.68,157.95h1.6v1.6h-1.6zM462.68,170.10h1.6v1.6h-1.6zM462.68,182.25h1.6v1.6h-1.6zM462.68,194.40h1.6v1.6h-1.6zM462.68,206.55h1.6v1.6h-1.6zM462.68,218.70h1.6v1.6h-1.6zM462.68,230.85h1.6v1.6h-1.6zM462.68,243.00h1.6v1.6h-1.6zM462.68,255.15h1.6v1.6h-1.6zM462.68,267.30h1.6v1.6h-1.6zM462.68,279.45h1.6v1.6h-1.6zM462.68,291.60h1.6v1.6h-1.6zM462.68,303.75h1.6v1.6h-1.6zM462.68,315.90h1.6v1.6h-1.6zM462.68,328.05h1.6v1.6h-1.6zM462.68,340.20h1.6v1.6h-1.6zM462.68,352.35h1.6v1.6h-1.6zM462.68,364.50h1.6v1.6h-1.6zM462.68,376.65h1.6v1.6h-1.6zM462.68,388.80h1.6v1.6h-1.6zM462.68,400.95h1.6v1.6h-1.6zM462.68,413.10h1.6v1.6h-1.6zM462.68,425.25h1.6v1.6h-1.6zM462.68,437.40h1.6v1.6h-1.6zM462.68,449.55h1.6v1.6h-1.6zM462.68,461.70h1.6v1.6h-1.6zM462.68,473.85h1.6v1.6h-1.6zM462.68,486.00h1.6v1.6h-1.6zM462.68,498.15h1.6v1.6h-1.6zM462.68,510.30h1.6v1.6h-1.6zM462.68,522.45h1.6v1.6h-1.6zM462.68,534.60h1.6v1.6h-1.6zM462.68,546.75h1.6v1.6h-1.6zM462.68,558.90h1.6v1.6h-1.6zM462.68,571.05h1.6v1.6h-1.6zM462.68,583.20h1.6v1.6h-1.6zM462.68,595.35h1.6v1.6h-1.6zM474.82,48.60h1.6v1.6h-1.6zM474.82,60.75h1.6v1.6h-1.6zM474.82,72.90h1.6v1.6h-1.6zM474.82,85.05h1.6v1.6h-1.6zM474.82,97.20h1.6v1.6h-1.6zM474.82,109.35h1.6v1.6h-1.6zM474.82,121.50h1.6v1.6h-1.6zM474.82,133.65h1.6v1.6h-1.6zM474.82,145.80h1.6v1.6h-1.6zM474.82,157.95h1.6v1.6h-1.6zM474.82,170.10h1.6v1.6h-1.6zM474.82,182.25h1.6v1.6h-1.6zM474.82,194.40h1.6v1.6h-1.6zM474.82,206.55h1.6v1.6h-1.6zM474.82,218.70h1.6v1.6h-1.6zM474.82,230.85h1.6v1.6h-1.6zM474.82,243.00h1.6v1.6h-1.6zM474.82,255.15h1.6v1.6h-1.6zM474.82,267.30h1.6v1.6h-1.6zM474.82,279.45h1.6v1.6h-1.6zM474.82,291.60h1.6v1.6h-1.6zM474.82,303.75h1.6v1.6h-1.6zM474.82,315.90h1.6v1.6h-1.6zM474.82,328.05h1.6v1.6h-1.6zM474.82,340.20h1.6v1.6h-1.6zM474.82,352.35h1.6v1.6h-1.6zM474.82,364.50h1.6v1.6h-1.6zM474.82,376.65h1.6v1.6h-1.6zM474.82,388.80h1.6v1.6h-1.6zM474.82,400.95h1.6v1.6h-1.6zM474.82,413.10h1.6v1.6h-1.6zM474.82,425.25h1.6v1.6h-1.6zM474.82,437.40h1.6v1.6h-1.6zM474.82,449.55h1.6v1.6h-1.6zM474.82,461.70h1.6v1.6h-1.6zM474.82,473.85h1.6v1.6h-1.6zM474.82,486.00h1.6v1.6h-1.6zM474.82,498.15h1.6v1.6h-1.6zM474.82,510.30h1.6v1.6h-1.6zM474.82,522.45h1.6v1.6h-1.6zM474.82,534.60h1.6v1.6h-1.6zM474.82,546.75h1.6v1.6h-1.6zM474.82,558.90h1.6v1.6h-1.6zM474.82,571.05h1.6v1.6h-1.6zM474.82,583.20h1.6v1.6h-1.6zM474.82,595.35h1.6v1.6h-1.6zM486.96,48.60h1.6v1.6h-1.6zM486.96,60.75h1.6v1.6h-1.6zM486.96,72.90h1.6v1.6h-1.6zM486.96,85.05h1.6v1.6h-1.6zM486.96,97.20h1.6v1.6h-1.6zM486.96,109.35h1.6v1.6h-1.6zM486.96,121.50h1.6v1.6h-1.6zM486.96,133.65h1.6v1.6h-1.6zM486.96,145.80h1.6v1.6h-1.6zM486.96,157.95h1.6v1.6h-1.6zM486.96,170.10h1.6v1.6h-1.6zM486.96,182.25h1.6v1.6h-1.6zM486.96,194.40h1.6v1.6h-1.6zM486.96,206.55h1.6v1.6h-1.6zM486.96,218.70h1.6v1.6h-1.6zM486.96,230.85h1.6v1.6h-1.6zM486.96,243.00h1.6v1.6h-1.6zM486.96,255.15h1.6v1.6h-1.6zM486.96,267.30h1.6v1.6h-1.6zM486.96,279.45h1.6v1.6h-1.6zM486.96,291.60h1.6v1.6h-1.6zM486.96,303.75h1.6v1.6h-1.6zM486.96,315.90h1.6v1.6h-1.6zM486.96,328.05h1.6v1.6h-1.6zM486.96,340.20h1.6v1.6h-1.6zM486.96,352.35h1.6v1.6h-1.6zM486.96,364.50h1.6v1.6h-1.6zM486.96,376.65h1.6v1.6h-1.6zM486.96,388.80h1.6v1.6h-1.6zM486.96,400.95h1.6v1.6h-1.6zM486.96,413.10h1.6v1.6h-1.6zM486.96,425.25h1.6v1.6h-1.6zM486.96,437.40h1.6v1.6h-1.6zM486.96,449.55h1.6v1.6h-1.6zM486.96,461.70h1.6v1.6h-1.6zM486.96,473.85h1.6v1.6h-1.6zM486.96,486.00h1.6v1.6h-1.6zM486.96,498.15h1.6v1.6h-1.6zM486.96,510.30h1.6v1.6h-1.6zM486.96,522.45h1.6v1.6h-1.6zM486.96,534.60h1.6v1.6h-1.6zM486.96,546.75h1.6v1.6h-1.6zM486.96,558.90h1.6v1.6h-1.6zM486.96,571.05h1.6v1.6h-1.6zM486.96,583.20h1.6v1.6h-1.6zM486.96,595.35h1.6v1.6h-1.6zM499.10,48.60h1.6v1.6h-1.6zM499.10,60.75h1.6v1.6h-1.6zM499.10,72.90h1.6v1.6h-1.6zM499.10,85.05h1.6v1.6h-1.6zM499.10,97.20h1.6v1.6h-1.6zM499.10,109.35h1.6v1.6h-1.6zM499.10,121.50h1.6v1.6h-1.6zM499.10,133.65h1.6v1.6h-1.6zM499.10,145.80h1.6v1.6h-1.6zM499.10,157.95h1.6v1.6h-1.6zM499.10,170.10h1.6v1.6h-1.6zM499.10,182.25h1.6v1.6h-1.6zM499.10,194.40h1.6v1.6h-1.6zM499.10,206.55h1.6v1.6h-1.6zM499.10,218.70h1.6v1.6h-1.6zM499.10,230.85h1.6v1.6h-1.6zM499.10,243.00h1.6v1.6h-1.6zM499.10,255.15h1.6v1.6h-1.6zM499.10,267.30h1.6v1.6h-1.6zM499.10,279.45h1.6v1.6h-1.6zM499.10,291.60h1.6v1.6h-1.6zM499.10,303.75h1.6v1.6h-1.6zM499.10,315.90h1.6v1.6h-1.6zM499.10,328.05h1.6v1.6h-1.6zM499.10,340.20h1.6v1.6h-1.6zM499.10,352.35h1.6v1.6h-1.6zM499.10,364.50h1.6v1.6h-1.6zM499.10,376.65h1.6v1.6h-1.6zM499.10,388.80h1.6v1.6h-1.6zM499.10,400.95h1.6v1.6h-1.6zM499.10,413.10h1.6v1.6h-1.6zM499.10,425.25h1.6v1.6h-1.6zM499.10,437.40h1.6v1.6h-1.6zM499.10,449.55h1.6v1.6h-1.6zM499.10,461.70h1.6v1.6h-1.6zM499.10,473.85h1.6v1.6h-1.6zM499.10,486.00h1.6v1.6h-1.6zM499.10,498.15h1.6v1.6h-1.6zM499.10,510.30h1.6v1.6h-1.6zM499.10,522.45h1.6v1.6h-1.6zM499.10,534.60h1.6v1.6h-1.6zM499.10,546.75h1.6v1.6h-1.6zM499.10,558.90h1.6v1.6h-1.6zM499.10,571.05h1.6v1.6h-1.6zM499.10,583.20h1.6v1.6h-1.6zM499.10,595.35h1.6v1.6h-1.6zM511.24,48.60h1.6v1.6h-1.6zM511.24,60.75h1.6v1.6h-1.6zM511.24,72.90h1.6v1.6h-1.6zM511.24,85.05h1.6v1.6h-1.6zM511.24,97.20h1.6v1.6h-1.6zM511.24,109.35h1.6v1.6h-1.6zM511.24,121.50h1.6v1.6h-1.6zM511.24,133.65h1.6v1.6h-1.6zM511.24,145.80h1.6v1.6h-1.6zM511.24,157.95h1.6v1.6h-1.6zM511.24,170.10h1.6v1.6h-1.6zM511.24,182.25h1.6v1.6h-1.6zM511.24,194.40h1.6v1.6h-1.6zM511.24,206.55h1.6v1.6h-1.6zM511.24,218.70h1.6v1.6h-1.6zM511.24,230.85h1.6v1.6h-1.6zM511.24,243.00h1.6v1.6h-1.6zM511.24,255.15h1.6v1.6h-1.6zM511.24,267.30h1.6v1.6h-1.6zM511.24,279.45h1.6v1.6h-1.6zM511.24,291.60h1.6v1.6h-1.6zM511.24,303.75h1.6v1.6h-1.6zM511.24,315.90h1.6v1.6h-1.6zM511.24,328.05h1.6v1.6h-1.6zM511.24,340.20h1.6v1.6h-1.6zM511.24,352.35h1.6v1.6h-1.6zM511.24,364.50h1.6v1.6h-1.6zM511.24,376.65h1.6v1.6h-1.6zM511.24,388.80h1.6v1.6h-1.6zM511.24,400.95h1.6v1.6h-1.6zM511.24,413.10h1.6v1.6h-1.6zM511.24,425.25h1.6v1.6h-1.6zM511.24,437.40h1.6v1.6h-1.6zM511.24,449.55h1.6v1.6h-1.6zM511.24,461.70h1.6v1.6h-1.6zM511.24,473.85h1.6v1.6h-1.6zM511.24,486.00h1.6v1.6h-1.6zM511.24,498.15h1.6v1.6h-1.6zM511.24,510.30h1.6v1.6h-1.6zM511.24,522.45h1.6v1.6h-1.6zM511.24,534.60h1.6v1.6h-1.6zM511.24,546.75h1.6v1.6h-1.6zM511.24,558.90h1.6v1.6h-1.6zM511.24,571.05h1.6v1.6h-1.6zM511.24,583.20h1.6v1.6h-1.6zM511.24,595.35h1.6v1.6h-1.6zM523.38,48.60h1.6v1.6h-1.6zM523.38,60.75h1.6v1.6h-1.6zM523.38,72.90h1.6v1.6h-1.6zM523.38,85.05h1.6v1.6h-1.6zM523.38,97.20h1.6v1.6h-1.6zM523.38,109.35h1.6v1.6h-1.6zM523.38,121.50h1.6v1.6h-1.6zM523.38,133.65h1.6v1.6h-1.6zM523.38,145.80h1.6v1.6h-1.6zM523.38,157.95h1.6v1.6h-1.6zM523.38,170.10h1.6v1.6h-1.6zM523.38,182.25h1.6v1.6h-1.6zM523.38,194.40h1.6v1.6h-1.6zM523.38,206.55h1.6v1.6h-1.6zM523.38,218.70h1.6v1.6h-1.6zM523.38,230.85h1.6v1.6h-1.6zM523.38,243.00h1.6v1.6h-1.6zM523.38,255.15h1.6v1.6h-1.6zM523.38,267.30h1.6v1.6h-1.6zM523.38,279.45h1.6v1.6h-1.6zM523.38,291.60h1.6v1.6h-1.6zM523.38,303.75h1.6v1.6h-1.6zM523.38,315.90h1.6v1.6h-1.6zM523.38,328.05h1.6v1.6h-1.6zM523.38,340.20h1.6v1.6h-1.6zM523.38,352.35h1.6v1.6h-1.6zM523.38,364.50h1.6v1.6h-1.6zM523.38,376.65h1.6v1.6h-1.6zM523.38,388.80h1.6v1.6h-1.6zM523.38,400.95h1.6v1.6h-1.6zM523.38,413.10h1.6v1.6h-1.6zM523.38,425.25h1.6v1.6h-1.6zM523.38,437.40h1.6v1.6h-1.6zM523.38,449.55h1.6v1.6h-1.6zM523.38,461.70h1.6v1.6h-1.6zM523.38,473.85h1.6v1.6h-1.6zM523.38,486.00h1.6v1.6h-1.6zM523.38,498.15h1.6v1.6h-1.6zM523.38,510.30h1.6v1.6h-1.6zM523.38,522.45h1.6v1.6h-1.6zM523.38,534.60h1.6v1.6h-1.6zM523.38,546.75h1.6v1.6h-1.6zM523.38,558.90h1.6v1.6h-1.6zM523.38,571.05h1.6v1.6h-1.6zM523.38,583.20h1.6v1.6h-1.6zM523.38,595.35h1.6v1.6h-1.6zM535.52,48.60h1.6v1.6h-1.6zM535.52,60.75h1.6v1.6h-1.6zM535.52,72.90h1.6v1.6h-1.6zM535.52,85.05h1.6v1.6h-1.6zM535.52,97.20h1.6v1.6h-1.6zM535.52,109.35h1.6v1.6h-1.6zM535.52,121.50h1.6v1.6h-1.6zM535.52,133.65h1.6v1.6h-1.6zM535.52,145.80h1.6v1.6h-1.6zM535.52,157.95h1.6v1.6h-1.6zM535.52,170.10h1.6v1.6h-1.6zM535.52,182.25h1.6v1.6h-1.6zM535.52,194.40h1.6v1.6h-1.6zM535.52,206.55h1.6v1.6h-1.6zM535.52,218.70h1.6v1.6h-1.6zM535.52,230.85h1.6v1.6h-1.6zM535.52,243.00h1.6v1.6h-1.6zM535.52,255.15h1.6v1.6h-1.6zM535.52,267.30h1.6v1.6h-1.6zM535.52,279.45h1.6v1.6h-1.6zM535.52,291.60h1.6v1.6h-1.6zM535.52,303.75h1.6v1.6h-1.6zM535.52,315.90h1.6v1.6h-1.6zM535.52,328.05h1.6v1.6h-1.6zM535.52,340.20h1.6v1.6h-1.6zM535.52,352.35h1.6v1.6h-1.6zM535.52,364.50h1.6v1.6h-1.6zM535.52,376.65h1.6v1.6h-1.6zM535.52,388.80h1.6v1.6h-1.6zM535.52,400.95h1.6v1.6h-1.6zM535.52,413.10h1.6v1.6h-1.6zM535.52,425.25h1.6v1.6h-1.6zM535.52,437.40h1.6v1.6h-1.6zM535.52,449.55h1.6v1.6h-1.6zM535.52,461.70h1.6v1.6h-1.6zM535.52,473.85h1.6v1.6h-1.6zM535.52,486.00h1.6v1.6h-1.6zM535.52,498.15h1.6v1.6h-1.6zM535.52,510.30h1.6v1.6h-1.6zM535.52,522.45h1.6v1.6h-1.6zM535.52,534.60h1.6v1.6h-1.6zM535.52,546.75h1.6v1.6h-1.6zM535.52,558.90h1.6v1.6h-1.6zM535.52,571.05h1.6v1.6h-1.6zM535.52,583.20h1.6v1.6h-1.6zM535.52,595.35h1.6v1.6h-1.6zM547.66,48.60h1.6v1.6h-1.6zM547.66,60.75h1.6v1.6h-1.6zM547.66,72.90h1.6v1.6h-1.6zM547.66,85.05h1.6v1.6h-1.6zM547.66,97.20h1.6v1.6h-1.6zM547.66,109.35h1.6v1.6h-1.6zM547.66,121.50h1.6v1.6h-1.6zM547.66,133.65h1.6v1.6h-1.6zM547.66,145.80h1.6v1.6h-1.6zM547.66,157.95h1.6v1.6h-1.6zM547.66,170.10h1.6v1.6h-1.6zM547.66,182.25h1.6v1.6h-1.6zM547.66,194.40h1.6v1.6h-1.6zM547.66,206.55h1.6v1.6h-1.6zM547.66,218.70h1.6v1.6h-1.6zM547.66,230.85h1.6v1.6h-1.6zM547.66,243.00h1.6v1.6h-1.6zM547.66,255.15h1.6v1.6h-1.6zM547.66,267.30h1.6v1.6h-1.6zM547.66,279.45h1.6v1.6h-1.6zM547.66,291.60h1.6v1.6h-1.6zM547.66,303.75h1.6v1.6h-1.6zM547.66,315.90h1.6v1.6h-1.6zM547.66,328.05h1.6v1.6h-1.6zM547.66,340.20h1.6v1.6h-1.6zM547.66,352.35h1.6v1.6h-1.6zM547.66,364.50h1.6v1.6h-1.6zM547.66,376.65h1.6v1.6h-1.6zM547.66,388.80h1.6v1.6h-1.6zM547.66,400.95h1.6v1.6h-1.6zM547.66,413.10h1.6v1.6h-1.6zM547.66,425.25h1.6v1.6h-1.6zM547.66,437.40h1.6v1.6h-1.6zM547.66,449.55h1.6v1.6h-1.6zM547.66,461.70h1.6v1.6h-1.6zM547.66,473.85h1.6v1.6h-1.6zM547.66,486.00h1.6v1.6h-1.6zM547.66,498.15h1.6v1.6h-1.6zM547.66,510.30h1.6v1.6h-1.6zM547.66,522.45h1.6v1.6h-1.6zM547.66,534.60h1.6v1.6h-1.6zM547.66,546.75h1.6v1.6h-1.6zM547.66,558.90h1.6v1.6h-1.6zM547.66,571.05h1.6v1.6h-1.6zM547.66,583.20h1.6v1.6h-1.6zM547.66,595.35h1.6v1.6h-1.6zM559.80,48.60h1.6v1.6h-1.6zM559.80,60.75h1.6v1.6h-1.6zM559.80,72.90h1.6v1.6h-1.6zM559.80,85.05h1.6v1.6h-1.6zM559.80,97.20h1.6v1.6h-1.6zM559.80,109.35h1.6v1.6h-1.6zM559.80,121.50h1.6v1.6h-1.6zM559.80,133.65h1.6v1.6h-1.6zM559.80,145.80h1.6v1.6h-1.6zM559.80,157.95h1.6v1.6h-1.6zM559.80,170.10h1.6v1.6h-1.6zM559.80,182.25h1.6v1.6h-1.6zM559.80,194.40h1.6v1.6h-1.6zM559.80,206.55h1.6v1.6h-1.6zM559.80,218.70h1.6v1.6h-1.6zM559.80,230.85h1.6v1.6h-1.6zM559.80,243.00h1.6v1.6h-1.6zM559.80,255.15h1.6v1.6h-1.6zM559.80,267.30h1.6v1.6h-1.6zM559.80,279.45h1.6v1.6h-1.6zM559.80,291.60h1.6v1.6h-1.6zM559.80,303.75h1.6v1.6h-1.6zM559.80,315.90h1.6v1.6h-1.6zM559.80,328.05h1.6v1.6h-1.6zM559.80,340.20h1.6v1.6h-1.6zM559.80,352.35h1.6v1.6h-1.6zM559.80,364.50h1.6v1.6h-1.6zM559.80,376.65h1.6v1.6h-1.6zM559.80,388.80h1.6v1.6h-1.6zM559.80,400.95h1.6v1.6h-1.6zM559.80,413.10h1.6v1.6h-1.6zM559.80,425.25h1.6v1.6h-1.6zM559.80,437.40h1.6v1.6h-1.6zM559.80,449.55h1.6v1.6h-1.6zM559.80,461.70h1.6v1.6h-1.6zM559.80,473.85h1.6v1.6h-1.6zM559.80,486.00h1.6v1.6h-1.6zM559.80,498.15h1.6v1.6h-1.6zM559.80,510.30h1.6v1.6h-1.6zM559.80,522.45h1.6v1.6h-1.6zM559.80,534.60h1.6v1.6h-1.6zM559.80,546.75h1.6v1.6h-1.6zM559.80,558.90h1.6v1.6h-1.6zM559.80,571.05h1.6v1.6h-1.6zM559.80,583.20h1.6v1.6h-1.6zM559.80,595.35h1.6v1.6h-1.6zM571.94,48.60h1.6v1.6h-1.6zM571.94,60.75h1.6v1.6h-1.6zM571.94,72.90h1.6v1.6h-1.6zM571.94,85.05h1.6v1.6h-1.6zM571.94,97.20h1.6v1.6h-1.6zM571.94,109.35h1.6v1.6h-1.6zM571.94,121.50h1.6v1.6h-1.6zM571.94,133.65h1.6v1.6h-1.6zM571.94,145.80h1.6v1.6h-1.6zM571.94,157.95h1.6v1.6h-1.6zM571.94,170.10h1.6v1.6h-1.6zM571.94,182.25h1.6v1.6h-1.6zM571.94,194.40h1.6v1.6h-1.6zM571.94,206.55h1.6v1.6h-1.6zM571.94,218.70h1.6v1.6h-1.6zM571.94,230.85h1.6v1.6h-1.6zM571.94,243.00h1.6v1.6h-1.6zM571.94,255.15h1.6v1.6h-1.6zM571.94,267.30h1.6v1.6h-1.6zM571.94,279.45h1.6v1.6h-1.6zM571.94,291.60h1.6v1.6h-1.6zM571.94,303.75h1.6v1.6h-1.6zM571.94,315.90h1.6v1.6h-1.6zM571.94,328.05h1.6v1.6h-1.6zM571.94,340.20h1.6v1.6h-1.6zM571.94,352.35h1.6v1.6h-1.6zM571.94,364.50h1.6v1.6h-1.6zM571.94,376.65h1.6v1.6h-1.6zM571.94,388.80h1.6v1.6h-1.6zM571.94,400.95h1.6v1.6h-1.6zM571.94,413.10h1.6v1.6h-1.6zM571.94,425.25h1.6v1.6h-1.6zM571.94,437.40h1.6v1.6h-1.6zM571.94,449.55h1.6v1.6h-1.6zM571.94,461.70h1.6v1.6h-1.6zM571.94,473.85h1.6v1.6h-1.6zM571.94,486.00h1.6v1.6h-1.6zM571.94,498.15h1.6v1.6h-1.6zM571.94,510.30h1.6v1.6h-1.6zM571.94,522.45h1.6v1.6h-1.6zM571.94,534.60h1.6v1.6h-1.6zM571.94,546.75h1.6v1.6h-1.6zM571.94,558.90h1.6v1.6h-1.6zM571.94,571.05h1.6v1.6h-1.6zM571.94,583.20h1.6v1.6h-1.6zM571.94,595.35h1.6v1.6h-1.6zM584.08,48.60h1.6v1.6h-1.6zM584.08,60.75h1.6v1.6h-1.6zM584.08,72.90h1.6v1.6h-1.6zM584.08,85.05h1.6v1.6h-1.6zM584.08,97.20h1.6v1.6h-1.6zM584.08,109.35h1.6v1.6h-1.6zM584.08,121.50h1.6v1.6h-1.6zM584.08,133.65h1.6v1.6h-1.6zM584.08,145.80h1.6v1.6h-1.6zM584.08,157.95h1.6v1.6h-1.6zM584.08,170.10h1.6v1.6h-1.6zM584.08,182.25h1.6v1.6h-1.6zM584.08,194.40h1.6v1.6h-1.6zM584.08,206.55h1.6v1.6h-1.6zM584.08,218.70h1.6v1.6h-1.6zM584.08,230.85h1.6v1.6h-1.6zM584.08,243.00h1.6v1.6h-1.6zM584.08,255.15h1.6v1.6h-1.6zM584.08,267.30h1.6v1.6h-1.6zM584.08,279.45h1.6v1.6h-1.6zM584.08,291.60h1.6v1.6h-1.6zM584.08,303.75h1.6v1.6h-1.6zM584.08,315.90h1.6v1.6h-1.6zM584.08,328.05h1.6v1.6h-1.6zM584.08,340.20h1.6v1.6h-1.6zM584.08,352.35h1.6v1.6h-1.6zM584.08,364.50h1.6v1.6h-1.6zM584.08,376.65h1.6v1.6h-1.6zM584.08,388.80h1.6v1.6h-1.6zM584.08,400.95h1.6v1.6h-1.6zM584.08,413.10h1.6v1.6h-1.6zM584.08,425.25h1.6v1.6h-1.6zM584.08,437.40h1.6v1.6h-1.6zM584.08,449.55h1.6v1.6h-1.6zM584.08,461.70h1.6v1.6h-1.6zM584.08,473.85h1.6v1.6h-1.6zM584.08,486.00h1.6v1.6h-1.6zM584.08,498.15h1.6v1.6h-1.6zM584.08,510.30h1.6v1.6h-1.6zM584.08,522.45h1.6v1.6h-1.6zM584.08,534.60h1.6v1.6h-1.6zM584.08,546.75h1.6v1.6h-1.6zM584.08,558.90h1.6v1.6h-1.6zM584.08,571.05h1.6v1.6h-1.6zM584.08,583.20h1.6v1.6h-1.6zM584.08,595.35h1.6v1.6h-1.6zM596.22,48.60h1.6v1.6h-1.6zM596.22,60.75h1.6v1.6h-1.6zM596.22,72.90h1.6v1.6h-1.6zM596.22,85.05h1.6v1.6h-1.6zM596.22,97.20h1.6v1.6h-1.6zM596.22,109.35h1.6v1.6h-1.6zM596.22,121.50h1.6v1.6h-1.6zM596.22,133.65h1.6v1.6h-1.6zM596.22,145.80h1.6v1.6h-1.6zM596.22,157.95h1.6v1.6h-1.6zM596.22,170.10h1.6v1.6h-1.6zM596.22,182.25h1.6v1.6h-1.6zM596.22,194.40h1.6v1.6h-1.6zM596.22,206.55h1.6v1.6h-1.6zM596.22,218.70h1.6v1.6h-1.6zM596.22,230.85h1.6v1.6h-1.6zM596.22,243.00h1.6v1.6h-1.6zM596.22,255.15h1.6v1.6h-1.6zM596.22,267.30h1.6v1.6h-1.6zM596.22,279.45h1.6v1.6h-1.6zM596.22,291.60h1.6v1.6h-1.6zM596.22,303.75h1.6v1.6h-1.6zM596.22,315.90h1.6v1.6h-1.6zM596.22,328.05h1.6v1.6h-1.6zM596.22,340.20h1.6v1.6h-1.6zM596.22,352.35h1.6v1.6h-1.6zM596.22,364.50h1.6v1.6h-1.6zM596.22,376.65h1.6v1.6h-1.6zM596.22,388.80h1.6v1.6h-1.6zM596.22,400.95h1.6v1.6h-1.6zM596.22,413.10h1.6v1.6h-1.6zM596.22,425.25h1.6v1.6h-1.6zM596.22,437.40h1.6v1.6h-1.6zM596.22,449.55h1.6v1.6h-1.6zM596.22,461.70h1.6v1.6h-1.6zM596.22,473.85h1.6v1.6h-1.6zM596.22,486.00h1.6v1.6h-1.6zM596.22,498.15h1.6v1.6h-1.6zM596.22,510.30h1.6v1.6h-1.6zM596.22,522.45h1.6v1.6h-1.6zM596.22,534.60h1.6v1.6h-1.6zM596.22,546.75h1.6v1.6h-1.6zM596.22,558.90h1.6v1.6h-1.6zM596.22,571.05h1.6v1.6h-1.6zM596.22,583.20h1.6v1.6h-1.6zM596.22,595.35h1.6v1.6h-1.6zM608.36,48.60h1.6v1.6h-1.6zM608.36,60.75h1.6v1.6h-1.6zM608.36,72.90h1.6v1.6h-1.6zM608.36,85.05h1.6v1.6h-1.6zM608.36,97.20h1.6v1.6h-1.6zM608.36,109.35h1.6v1.6h-1.6zM608.36,121.50h1.6v1.6h-1.6zM608.36,133.65h1.6v1.6h-1.6zM608.36,145.80h1.6v1.6h-1.6zM608.36,157.95h1.6v1.6h-1.6zM608.36,170.10h1.6v1.6h-1.6zM608.36,182.25h1.6v1.6h-1.6zM608.36,194.40h1.6v1.6h-1.6zM608.36,206.55h1.6v1.6h-1.6zM608.36,218.70h1.6v1.6h-1.6zM608.36,230.85h1.6v1.6h-1.6zM608.36,243.00h1.6v1.6h-1.6zM608.36,255.15h1.6v1.6h-1.6zM608.36,267.30h1.6v1.6h-1.6zM608.36,279.45h1.6v1.6h-1.6zM608.36,291.60h1.6v1.6h-1.6zM608.36,303.75h1.6v1.6h-1.6zM608.36,315.90h1.6v1.6h-1.6zM608.36,328.05h1.6v1.6h-1.6zM608.36,340.20h1.6v1.6h-1.6zM608.36,352.35h1.6v1.6h-1.6zM608.36,364.50h1.6v1.6h-1.6zM608.36,376.65h1.6v1.6h-1.6zM608.36,388.80h1.6v1.6h-1.6zM608.36,400.95h1.6v1.6h-1.6zM608.36,413.10h1.6v1.6h-1.6zM608.36,425.25h1.6v1.6h-1.6zM608.36,437.40h1.6v1.6h-1.6zM608.36,449.55h1.6v1.6h-1.6zM608.36,461.70h1.6v1.6h-1.6zM608.36,473.85h1.6v1.6h-1.6zM608.36,486.00h1.6v1.6h-1.6zM608.36,498.15h1.6v1.6h-1.6zM608.36,510.30h1.6v1.6h-1.6zM608.36,522.45h1.6v1.6h-1.6zM608.36,534.60h1.6v1.6h-1.6zM608.36,546.75h1.6v1.6h-1.6zM608.36,558.90h1.6v1.6h-1.6zM608.36,571.05h1.6v1.6h-1.6zM608.36,583.20h1.6v1.6h-1.6zM608.36,595.35h1.6v1.6h-1.6zM620.50,48.60h1.6v1.6h-1.6zM620.50,60.75h1.6v1.6h-1.6zM620.50,72.90h1.6v1.6h-1.6zM620.50,85.05h1.6v1.6h-1.6zM620.50,97.20h1.6v1.6h-1.6zM620.50,109.35h1.6v1.6h-1.6zM620.50,121.50h1.6v1.6h-1.6zM620.50,133.65h1.6v1.6h-1.6zM620.50,145.80h1.6v1.6h-1.6zM620.50,157.95h1.6v1.6h-1.6zM620.50,170.10h1.6v1.6h-1.6zM620.50,182.25h1.6v1.6h-1.6zM620.50,194.40h1.6v1.6h-1.6zM620.50,206.55h1.6v1.6h-1.6zM620.50,218.70h1.6v1.6h-1.6zM620.50,230.85h1.6v1.6h-1.6zM620.50,243.00h1.6v1.6h-1.6zM620.50,255.15h1.6v1.6h-1.6zM620.50,267.30h1.6v1.6h-1.6zM620.50,279.45h1.6v1.6h-1.6zM620.50,291.60h1.6v1.6h-1.6zM620.50,303.75h1.6v1.6h-1.6zM620.50,315.90h1.6v1.6h-1.6zM620.50,328.05h1.6v1.6h-1.6zM620.50,340.20h1.6v1.6h-1.6zM620.50,352.35h1.6v1.6h-1.6zM620.50,364.50h1.6v1.6h-1.6zM620.50,376.65h1.6v1.6h-1.6zM620.50,388.80h1.6v1.6h-1.6zM620.50,400.95h1.6v1.6h-1.6zM620.50,413.10h1.6v1.6h-1.6zM620.50,425.25h1.6v1.6h-1.6zM620.50,437.40h1.6v1.6h-1.6zM620.50,449.55h1.6v1.6h-1.6zM620.50,461.70h1.6v1.6h-1.6zM620.50,473.85h1.6v1.6h-1.6zM620.50,486.00h1.6v1.6h-1.6zM620.50,498.15h1.6v1.6h-1.6zM620.50,510.30h1.6v1.6h-1.6zM620.50,522.45h1.6v1.6h-1.6zM620.50,534.60h1.6v1.6h-1.6zM620.50,546.75h1.6v1.6h-1.6zM620.50,558.90h1.6v1.6h-1.6zM620.50,571.05h1.6v1.6h-1.6zM620.50,583.20h1.6v1.6h-1.6zM620.50,595.35h1.6v1.6h-1.6zM632.64,48.60h1.6v1.6h-1.6zM632.64,60.75h1.6v1.6h-1.6zM632.64,72.90h1.6v1.6h-1.6zM632.64,85.05h1.6v1.6h-1.6zM632.64,97.20h1.6v1.6h-1.6zM632.64,109.35h1.6v1.6h-1.6zM632.64,121.50h1.6v1.6h-1.6zM632.64,133.65h1.6v1.6h-1.6zM632.64,145.80h1.6v1.6h-1.6zM632.64,157.95h1.6v1.6h-1.6zM632.64,170.10h1.6v1.6h-1.6zM632.64,182.25h1.6v1.6h-1.6zM632.64,194.40h1.6v1.6h-1.6zM632.64,206.55h1.6v1.6h-1.6zM632.64,218.70h1.6v1.6h-1.6zM632.64,230.85h1.6v1.6h-1.6zM632.64,243.00h1.6v1.6h-1.6zM632.64,255.15h1.6v1.6h-1.6zM632.64,267.30h1.6v1.6h-1.6zM632.64,279.45h1.6v1.6h-1.6zM632.64,291.60h1.6v1.6h-1.6zM632.64,303.75h1.6v1.6h-1.6zM632.64,315.90h1.6v1.6h-1.6zM632.64,328.05h1.6v1.6h-1.6zM632.64,340.20h1.6v1.6h-1.6zM632.64,352.35h1.6v1.6h-1.6zM632.64,364.50h1.6v1.6h-1.6zM632.64,376.65h1.6v1.6h-1.6zM632.64,388.80h1.6v1.6h-1.6zM632.64,400.95h1.6v1.6h-1.6zM632.64,413.10h1.6v1.6h-1.6zM632.64,425.25h1.6v1.6h-1.6zM632.64,437.40h1.6v1.6h-1.6zM632.64,449.55h1.6v1.6h-1.6zM632.64,461.70h1.6v1.6h-1.6zM632.64,473.85h1.6v1.6h-1.6zM632.64,486.00h1.6v1.6h-1.6zM632.64,498.15h1.6v1.6h-1.6zM632.64,510.30h1.6v1.6h-1.6zM632.64,522.45h1.6v1.6h-1.6zM632.64,534.60h1.6v1.6h-1.6zM632.64,546.75h1.6v1.6h-1.6zM632.64,558.90h1.6v1.6h-1.6zM632.64,571.05h1.6v1.6h-1.6zM632.64,583.20h1.6v1.6h-1.6zM632.64,595.35h1.6v1.6h-1.6zM644.78,48.60h1.6v1.6h-1.6zM644.78,60.75h1.6v1.6h-1.6zM644.78,72.90h1.6v1.6h-1.6zM644.78,85.05h1.6v1.6h-1.6zM644.78,97.20h1.6v1.6h-1.6zM644.78,109.35h1.6v1.6h-1.6zM644.78,121.50h1.6v1.6h-1.6zM644.78,133.65h1.6v1.6h-1.6zM644.78,145.80h1.6v1.6h-1.6zM644.78,157.95h1.6v1.6h-1.6zM644.78,170.10h1.6v1.6h-1.6zM644.78,182.25h1.6v1.6h-1.6zM644.78,194.40h1.6v1.6h-1.6zM644.78,206.55h1.6v1.6h-1.6zM644.78,218.70h1.6v1.6h-1.6zM644.78,230.85h1.6v1.6h-1.6zM644.78,243.00h1.6v1.6h-1.6zM644.78,255.15h1.6v1.6h-1.6zM644.78,267.30h1.6v1.6h-1.6zM644.78,279.45h1.6v1.6h-1.6zM644.78,291.60h1.6v1.6h-1.6zM644.78,303.75h1.6v1.6h-1.6zM644.78,315.90h1.6v1.6h-1.6zM644.78,328.05h1.6v1.6h-1.6zM644.78,340.20h1.6v1.6h-1.6zM644.78,352.35h1.6v1.6h-1.6zM644.78,364.50h1.6v1.6h-1.6zM644.78,376.65h1.6v1.6h-1.6zM644.78,388.80h1.6v1.6h-1.6zM644.78,400.95h1.6v1.6h-1.6zM644.78,413.10h1.6v1.6h-1.6zM644.78,425.25h1.6v1.6h-1.6zM644.78,437.40h1.6v1.6h-1.6zM644.78,449.55h1.6v1.6h-1.6zM644.78,461.70h1.6v1.6h-1.6zM644.78,473.85h1.6v1.6h-1.6zM644.78,486.00h1.6v1.6h-1.6zM644.78,498.15h1.6v1.6h-1.6zM644.78,510.30h1.6v1.6h-1.6zM644.78,522.45h1.6v1.6h-1.6zM644.78,534.60h1.6v1.6h-1.6zM644.78,546.75h1.6v1.6h-1.6zM644.78,558.90h1.6v1.6h-1.6zM644.78,571.05h1.6v1.6h-1.6zM644.78,583.20h1.6v1.6h-1.6zM644.78,595.35h1.6v1.6h-1.6zM656.92,48.60h1.6v1.6h-1.6zM656.92,60.75h1.6v1.6h-1.6zM656.92,72.90h1.6v1.6h-1.6zM656.92,85.05h1.6v1.6h-1.6zM656.92,97.20h1.6v1.6h-1.6zM656.92,109.35h1.6v1.6h-1.6zM656.92,121.50h1.6v1.6h-1.6zM656.92,133.65h1.6v1.6h-1.6zM656.92,145.80h1.6v1.6h-1.6zM656.92,157.95h1.6v1.6h-1.6zM656.92,170.10h1.6v1.6h-1.6zM656.92,182.25h1.6v1.6h-1.6zM656.92,194.40h1.6v1.6h-1.6zM656.92,206.55h1.6v1.6h-1.6zM656.92,218.70h1.6v1.6h-1.6zM656.92,230.85h1.6v1.6h-1.6zM656.92,243.00h1.6v1.6h-1.6zM656.92,255.15h1.6v1.6h-1.6zM656.92,267.30h1.6v1.6h-1.6zM656.92,279.45h1.6v1.6h-1.6zM656.92,291.60h1.6v1.6h-1.6zM656.92,303.75h1.6v1.6h-1.6zM656.92,315.90h1.6v1.6h-1.6zM656.92,328.05h1.6v1.6h-1.6zM656.92,340.20h1.6v1.6h-1.6zM656.92,352.35h1.6v1.6h-1.6zM656.92,364.50h1.6v1.6h-1.6zM656.92,376.65h1.6v1.6h-1.6zM656.92,388.80h1.6v1.6h-1.6zM656.92,400.95h1.6v1.6h-1.6zM656.92,413.10h1.6v1.6h-1.6zM656.92,425.25h1.6v1.6h-1.6zM656.92,437.40h1.6v1.6h-1.6zM656.92,449.55h1.6v1.6h-1.6zM656.92,461.70h1.6v1.6h-1.6zM656.92,473.85h1.6v1.6h-1.6zM656.92,486.00h1.6v1.6h-1.6zM656.92,498.15h1.6v1.6h-1.6zM656.92,510.30h1.6v1.6h-1.6zM656.92,522.45h1.6v1.6h-1.6zM656.92,534.60h1.6v1.6h-1.6zM656.92,546.75h1.6v1.6h-1.6zM656.92,558.90h1.6v1.6h-1.6zM656.92,571.05h1.6v1.6h-1.6zM656.92,583.20h1.6v1.6h-1.6zM656.92,595.35h1.6v1.6h-1.6zM669.06,48.60h1.6v1.6h-1.6zM669.06,60.75h1.6v1.6h-1.6zM669.06,72.90h1.6v1.6h-1.6zM669.06,85.05h1.6v1.6h-1.6zM669.06,97.20h1.6v1.6h-1.6zM669.06,109.35h1.6v1.6h-1.6zM669.06,121.50h1.6v1.6h-1.6zM669.06,133.65h1.6v1.6h-1.6zM669.06,145.80h1.6v1.6h-1.6zM669.06,157.95h1.6v1.6h-1.6zM669.06,170.10h1.6v1.6h-1.6zM669.06,182.25h1.6v1.6h-1.6zM669.06,194.40h1.6v1.6h-1.6zM669.06,206.55h1.6v1.6h-1.6zM669.06,218.70h1.6v1.6h-1.6zM669.06,230.85h1.6v1.6h-1.6zM669.06,243.00h1.6v1.6h-1.6zM669.06,255.15h1.6v1.6h-1.6zM669.06,267.30h1.6v1.6h-1.6zM669.06,279.45h1.6v1.6h-1.6zM669.06,291.60h1.6v1.6h-1.6zM669.06,303.75h1.6v1.6h-1.6zM669.06,315.90h1.6v1.6h-1.6zM669.06,328.05h1.6v1.6h-1.6zM669.06,340.20h1.6v1.6h-1.6zM669.06,352.35h1.6v1.6h-1.6zM669.06,364.50h1.6v1.6h-1.6zM669.06,376.65h1.6v1.6h-1.6zM669.06,388.80h1.6v1.6h-1.6zM669.06,400.95h1.6v1.6h-1.6zM669.06,413.10h1.6v1.6h-1.6zM669.06,425.25h1.6v1.6h-1.6zM669.06,437.40h1.6v1.6h-1.6zM669.06,449.55h1.6v1.6h-1.6zM669.06,461.70h1.6v1.6h-1.6zM669.06,473.85h1.6v1.6h-1.6zM669.06,486.00h1.6v1.6h-1.6zM669.06,498.15h1.6v1.6h-1.6zM669.06,510.30h1.6v1.6h-1.6zM669.06,522.45h1.6v1.6h-1.6zM669.06,534.60h1.6v1.6h-1.6zM669.06,546.75h1.6v1.6h-1.6zM669.06,558.90h1.6v1.6h-1.6zM669.06,571.05h1.6v1.6h-1.6zM669.06,583.20h1.6v1.6h-1.6zM669.06,595.35h1.6v1.6h-1.6zM681.20,48.60h1.6v1.6h-1.6zM681.20,60.75h1.6v1.6h-1.6zM681.20,72.90h1.6v1.6h-1.6zM681.20,85.05h1.6v1.6h-1.6zM681.20,97.20h1.6v1.6h-1.6zM681.20,109.35h1.6v1.6h-1.6zM681.20,121.50h1.6v1.6h-1.6zM681.20,133.65h1.6v1.6h-1.6zM681.20,145.80h1.6v1.6h-1.6zM681.20,157.95h1.6v1.6h-1.6zM681.20,170.10h1.6v1.6h-1.6zM681.20,182.25h1.6v1.6h-1.6zM681.20,194.40h1.6v1.6h-1.6zM681.20,206.55h1.6v1.6h-1.6zM681.20,218.70h1.6v1.6h-1.6zM681.20,230.85h1.6v1.6h-1.6zM681.20,243.00h1.6v1.6h-1.6zM681.20,255.15h1.6v1.6h-1.6zM681.20,267.30h1.6v1.6h-1.6zM681.20,279.45h1.6v1.6h-1.6zM681.20,291.60h1.6v1.6h-1.6zM681.20,303.75h1.6v1.6h-1.6zM681.20,315.90h1.6v1.6h-1.6zM681.20,328.05h1.6v1.6h-1.6zM681.20,340.20h1.6v1.6h-1.6zM681.20,352.35h1.6v1.6h-1.6zM681.20,364.50h1.6v1.6h-1.6zM681.20,376.65h1.6v1.6h-1.6zM681.20,388.80h1.6v1.6h-1.6zM681.20,400.95h1.6v1.6h-1.6zM681.20,413.10h1.6v1.6h-1.6zM681.20,425.25h1.6v1.6h-1.6zM681.20,437.40h1.6v1.6h-1.6zM681.20,449.55h1.6v1.6h-1.6zM681.20,461.70h1.6v1.6h-1.6zM681.20,473.85h1.6v1.6h-1.6zM681.20,486.00h1.6v1.6h-1.6zM681.20,498.15h1.6v1.6h-1.6zM681.20,510.30h1.6v1.6h-1.6zM681.20,522.45h1.6v1.6h-1.6zM681.20,534.60h1.6v1.6h-1.6zM681.20,546.75h1.6v1.6h-1.6zM681.20,558.90h1.6v1.6h-1.6zM681.20,571.05h1.6v1.6h-1.6zM681.20,583.20h1.6v1.6h-1.6zM681.20,595.35h1.6v1.6h-1.6zM693.34,48.60h1.6v1.6h-1.6zM693.34,60.75h1.6v1.6h-1.6zM693.34,72.90h1.6v1.6h-1.6zM693.34,85.05h1.6v1.6h-1.6zM693.34,97.20h1.6v1.6h-1.6zM693.34,109.35h1.6v1.6h-1.6zM693.34,121.50h1.6v1.6h-1.6zM693.34,133.65h1.6v1.6h-1.6zM693.34,145.80h1.6v1.6h-1.6zM693.34,157.95h1.6v1.6h-1.6zM693.34,170.10h1.6v1.6h-1.6zM693.34,182.25h1.6v1.6h-1.6zM693.34,194.40h1.6v1.6h-1.6zM693.34,206.55h1.6v1.6h-1.6zM693.34,218.70h1.6v1.6h-1.6zM693.34,230.85h1.6v1.6h-1.6zM693.34,243.00h1.6v1.6h-1.6zM693.34,255.15h1.6v1.6h-1.6zM693.34,267.30h1.6v1.6h-1.6zM693.34,279.45h1.6v1.6h-1.6zM693.34,291.60h1.6v1.6h-1.6zM693.34,303.75h1.6v1.6h-1.6zM693.34,315.90h1.6v1.6h-1.6zM693.34,328.05h1.6v1.6h-1.6zM693.34,340.20h1.6v1.6h-1.6zM693.34,352.35h1.6v1.6h-1.6zM693.34,364.50h1.6v1.6h-1.6zM693.34,376.65h1.6v1.6h-1.6zM693.34,388.80h1.6v1.6h-1.6zM693.34,400.95h1.6v1.6h-1.6zM693.34,413.10h1.6v1.6h-1.6zM693.34,425.25h1.6v1.6h-1.6zM693.34,437.40h1.6v1.6h-1.6zM693.34,449.55h1.6v1.6h-1.6zM693.34,461.70h1.6v1.6h-1.6zM693.34,473.85h1.6v1.6h-1.6zM693.34,486.00h1.6v1.6h-1.6zM693.34,498.15h1.6v1.6h-1.6zM693.34,510.30h1.6v1.6h-1.6zM693.34,522.45h1.6v1.6h-1.6zM693.34,534.60h1.6v1.6h-1.6zM693.34,546.75h1.6v1.6h-1.6zM693.34,558.90h1.6v1.6h-1.6zM693.34,571.05h1.6v1.6h-1.6zM693.34,583.20h1.6v1.6h-1.6zM693.34,595.35h1.6v1.6h-1.6zM705.48,48.60h1.6v1.6h-1.6zM705.48,60.75h1.6v1.6h-1.6zM705.48,72.90h1.6v1.6h-1.6zM705.48,85.05h1.6v1.6h-1.6zM705.48,97.20h1.6v1.6h-1.6zM705.48,109.35h1.6v1.6h-1.6zM705.48,121.50h1.6v1.6h-1.6zM705.48,133.65h1.6v1.6h-1.6zM705.48,145.80h1.6v1.6h-1.6zM705.48,157.95h1.6v1.6h-1.6zM705.48,170.10h1.6v1.6h-1.6zM705.48,182.25h1.6v1.6h-1.6zM705.48,194.40h1.6v1.6h-1.6zM705.48,206.55h1.6v1.6h-1.6zM705.48,218.70h1.6v1.6h-1.6zM705.48,230.85h1.6v1.6h-1.6zM705.48,243.00h1.6v1.6h-1.6zM705.48,255.15h1.6v1.6h-1.6zM705.48,267.30h1.6v1.6h-1.6zM705.48,279.45h1.6v1.6h-1.6zM705.48,291.60h1.6v1.6h-1.6zM705.48,303.75h1.6v1.6h-1.6zM705.48,315.90h1.6v1.6h-1.6zM705.48,328.05h1.6v1.6h-1.6zM705.48,340.20h1.6v1.6h-1.6zM705.48,352.35h1.6v1.6h-1.6zM705.48,364.50h1.6v1.6h-1.6zM705.48,376.65h1.6v1.6h-1.6zM705.48,388.80h1.6v1.6h-1.6zM705.48,400.95h1.6v1.6h-1.6zM705.48,413.10h1.6v1.6h-1.6zM705.48,425.25h1.6v1.6h-1.6zM705.48,437.40h1.6v1.6h-1.6zM705.48,449.55h1.6v1.6h-1.6zM705.48,461.70h1.6v1.6h-1.6zM705.48,473.85h1.6v1.6h-1.6zM705.48,486.00h1.6v1.6h-1.6zM705.48,498.15h1.6v1.6h-1.6zM705.48,510.30h1.6v1.6h-1.6zM705.48,522.45h1.6v1.6h-1.6zM705.48,534.60h1.6v1.6h-1.6zM705.48,546.75h1.6v1.6h-1.6zM705.48,558.90h1.6v1.6h-1.6zM705.48,571.05h1.6v1.6h-1.6zM705.48,583.20h1.6v1.6h-1.6zM705.48,595.35h1.6v1.6h-1.6zM717.62,48.60h1.6v1.6h-1.6zM717.62,60.75h1.6v1.6h-1.6zM717.62,72.90h1.6v1.6h-1.6zM717.62,85.05h1.6v1.6h-1.6zM717.62,97.20h1.6v1.6h-1.6zM717.62,109.35h1.6v1.6h-1.6zM717.62,121.50h1.6v1.6h-1.6zM717.62,133.65h1.6v1.6h-1.6zM717.62,145.80h1.6v1.6h-1.6zM717.62,157.95h1.6v1.6h-1.6zM717.62,170.10h1.6v1.6h-1.6zM717.62,182.25h1.6v1.6h-1.6zM717.62,194.40h1.6v1.6h-1.6zM717.62,206.55h1.6v1.6h-1.6zM717.62,218.70h1.6v1.6h-1.6zM717.62,230.85h1.6v1.6h-1.6zM717.62,243.00h1.6v1.6h-1.6zM717.62,255.15h1.6v1.6h-1.6zM717.62,267.30h1.6v1.6h-1.6zM717.62,279.45h1.6v1.6h-1.6zM717.62,291.60h1.6v1.6h-1.6zM717.62,303.75h1.6v1.6h-1.6zM717.62,315.90h1.6v1.6h-1.6zM717.62,328.05h1.6v1.6h-1.6zM717.62,340.20h1.6v1.6h-1.6zM717.62,352.35h1.6v1.6h-1.6zM717.62,364.50h1.6v1.6h-1.6zM717.62,376.65h1.6v1.6h-1.6zM717.62,388.80h1.6v1.6h-1.6zM717.62,400.95h1.6v1.6h-1.6zM717.62,413.10h1.6v1.6h-1.6zM717.62,425.25h1.6v1.6h-1.6zM717.62,437.40h1.6v1.6h-1.6zM717.62,449.55h1.6v1.6h-1.6zM717.62,461.70h1.6v1.6h-1.6zM717.62,473.85h1.6v1.6h-1.6zM717.62,486.00h1.6v1.6h-1.6zM717.62,498.15h1.6v1.6h-1.6zM717.62,510.30h1.6v1.6h-1.6zM717.62,522.45h1.6v1.6h-1.6zM717.62,534.60h1.6v1.6h-1.6zM717.62,546.75h1.6v1.6h-1.6zM717.62,558.90h1.6v1.6h-1.6zM717.62,571.05h1.6v1.6h-1.6zM717.62,583.20h1.6v1.6h-1.6zM717.62,595.35h1.6v1.6h-1.6zM729.76,48.60h1.6v1.6h-1.6zM729.76,60.75h1.6v1.6h-1.6zM729.76,72.90h1.6v1.6h-1.6zM729.76,85.05h1.6v1.6h-1.6zM729.76,97.20h1.6v1.6h-1.6zM729.76,109.35h1.6v1.6h-1.6zM729.76,121.50h1.6v1.6h-1.6zM729.76,133.65h1.6v1.6h-1.6zM729.76,145.80h1.6v1.6h-1.6zM729.76,157.95h1.6v1.6h-1.6zM729.76,170.10h1.6v1.6h-1.6zM729.76,182.25h1.6v1.6h-1.6zM729.76,194.40h1.6v1.6h-1.6zM729.76,206.55h1.6v1.6h-1.6zM729.76,218.70h1.6v1.6h-1.6zM729.76,230.85h1.6v1.6h-1.6zM729.76,243.00h1.6v1.6h-1.6zM729.76,255.15h1.6v1.6h-1.6zM729.76,267.30h1.6v1.6h-1.6zM729.76,279.45h1.6v1.6h-1.6zM729.76,291.60h1.6v1.6h-1.6zM729.76,303.75h1.6v1.6h-1.6zM729.76,315.90h1.6v1.6h-1.6zM729.76,328.05h1.6v1.6h-1.6zM729.76,340.20h1.6v1.6h-1.6zM729.76,352.35h1.6v1.6h-1.6zM729.76,364.50h1.6v1.6h-1.6zM729.76,376.65h1.6v1.6h-1.6zM729.76,388.80h1.6v1.6h-1.6zM729.76,400.95h1.6v1.6h-1.6zM729.76,413.10h1.6v1.6h-1.6zM729.76,425.25h1.6v1.6h-1.6zM729.76,437.40h1.6v1.6h-1.6zM729.76,449.55h1.6v1.6h-1.6zM729.76,461.70h1.6v1.6h-1.6zM729.76,473.85h1.6v1.6h-1.6zM729.76,486.00h1.6v1.6h-1.6zM729.76,498.15h1.6v1.6h-1.6zM729.76,510.30h1.6v1.6h-1.6zM729.76,522.45h1.6v1.6h-1.6zM729.76,534.60h1.6v1.6h-1.6zM729.76,546.75h1.6v1.6h-1.6zM729.76,558.90h1.6v1.6h-1.6zM729.76,571.05h1.6v1.6h-1.6zM729.76,583.20h1.6v1.6h-1.6zM729.76,595.35h1.6v1.6h-1.6zM741.90,48.60h1.6v1.6h-1.6zM741.90,60.75h1.6v1.6h-1.6zM741.90,72.90h1.6v1.6h-1.6zM741.90,85.05h1.6v1.6h-1.6zM741.90,97.20h1.6v1.6h-1.6zM741.90,109.35h1.6v1.6h-1.6zM741.90,121.50h1.6v1.6h-1.6zM741.90,133.65h1.6v1.6h-1.6zM741.90,145.80h1.6v1.6h-1.6zM741.90,157.95h1.6v1.6h-1.6zM741.90,170.10h1.6v1.6h-1.6zM741.90,182.25h1.6v1.6h-1.6zM741.90,194.40h1.6v1.6h-1.6zM741.90,206.55h1.6v1.6h-1.6zM741.90,218.70h1.6v1.6h-1.6zM741.90,230.85h1.6v1.6h-1.6zM741.90,243.00h1.6v1.6h-1.6zM741.90,255.15h1.6v1.6h-1.6zM741.90,267.30h1.6v1.6h-1.6zM741.90,279.45h1.6v1.6h-1.6zM741.90,291.60h1.6v1.6h-1.6zM741.90,303.75h1.6v1.6h-1.6zM741.90,315.90h1.6v1.6h-1.6zM741.90,328.05h1.6v1.6h-1.6zM741.90,340.20h1.6v1.6h-1.6zM741.90,352.35h1.6v1.6h-1.6zM741.90,364.50h1.6v1.6h-1.6zM741.90,376.65h1.6v1.6h-1.6zM741.90,388.80h1.6v1.6h-1.6zM741.90,400.95h1.6v1.6h-1.6zM741.90,413.10h1.6v1.6h-1.6zM741.90,425.25h1.6v1.6h-1.6zM741.90,437.40h1.6v1.6h-1.6zM741.90,449.55h1.6v1.6h-1.6zM741.90,461.70h1.6v1.6h-1.6zM741.90,473.85h1.6v1.6h-1.6zM741.90,486.00h1.6v1.6h-1.6zM741.90,498.15h1.6v1.6h-1.6zM741.90,510.30h1.6v1.6h-1.6zM741.90,522.45h1.6v1.6h-1.6zM741.90,534.60h1.6v1.6h-1.6zM741.90,546.75h1.6v1.6h-1.6zM741.90,558.90h1.6v1.6h-1.6zM741.90,571.05h1.6v1.6h-1.6zM741.90,583.20h1.6v1.6h-1.6zM741.90,595.35h1.6v1.6h-1.6zM754.04,48.60h1.6v1.6h-1.6zM754.04,60.75h1.6v1.6h-1.6zM754.04,72.90h1.6v1.6h-1.6zM754.04,85.05h1.6v1.6h-1.6zM754.04,97.20h1.6v1.6h-1.6zM754.04,109.35h1.6v1.6h-1.6zM754.04,121.50h1.6v1.6h-1.6zM754.04,133.65h1.6v1.6h-1.6zM754.04,145.80h1.6v1.6h-1.6zM754.04,157.95h1.6v1.6h-1.6zM754.04,170.10h1.6v1.6h-1.6zM754.04,182.25h1.6v1.6h-1.6zM754.04,194.40h1.6v1.6h-1.6zM754.04,206.55h1.6v1.6h-1.6zM754.04,218.70h1.6v1.6h-1.6zM754.04,230.85h1.6v1.6h-1.6zM754.04,243.00h1.6v1.6h-1.6zM754.04,255.15h1.6v1.6h-1.6zM754.04,267.30h1.6v1.6h-1.6zM754.04,279.45h1.6v1.6h-1.6zM754.04,291.60h1.6v1.6h-1.6zM754.04,303.75h1.6v1.6h-1.6zM754.04,315.90h1.6v1.6h-1.6zM754.04,328.05h1.6v1.6h-1.6zM754.04,340.20h1.6v1.6h-1.6zM754.04,352.35h1.6v1.6h-1.6zM754.04,364.50h1.6v1.6h-1.6zM754.04,376.65h1.6v1.6h-1.6zM754.04,388.80h1.6v1.6h-1.6zM754.04,400.95h1.6v1.6h-1.6zM754.04,413.10h1.6v1.6h-1.6zM754.04,425.25h1.6v1.6h-1.6zM754.04,437.40h1.6v1.6h-1.6zM754.04,449.55h1.6v1.6h-1.6zM754.04,461.70h1.6v1.6h-1.6zM754.04,473.85h1.6v1.6h-1.6zM754.04,486.00h1.6v1.6h-1.6zM754.04,498.15h1.6v1.6h-1.6zM754.04,510.30h1.6v1.6h-1.6zM754.04,522.45h1.6v1.6h-1.6zM754.04,534.60h1.6v1.6h-1.6zM754.04,546.75h1.6v1.6h-1.6zM754.04,558.90h1.6v1.6h-1.6zM754.04,571.05h1.6v1.6h-1.6zM754.04,583.20h1.6v1.6h-1.6zM754.04,595.35h1.6v1.6h-1.6zM766.18,48.60h1.6v1.6h-1.6zM766.18,60.75h1.6v1.6h-1.6zM766.18,72.90h1.6v1.6h-1.6zM766.18,85.05h1.6v1.6h-1.6zM766.18,97.20h1.6v1.6h-1.6zM766.18,109.35h1.6v1.6h-1.6zM766.18,121.50h1.6v1.6h-1.6zM766.18,133.65h1.6v1.6h-1.6zM766.18,145.80h1.6v1.6h-1.6zM766.18,157.95h1.6v1.6h-1.6zM766.18,170.10h1.6v1.6h-1.6zM766.18,182.25h1.6v1.6h-1.6zM766.18,194.40h1.6v1.6h-1.6zM766.18,206.55h1.6v1.6h-1.6zM766.18,218.70h1.6v1.6h-1.6zM766.18,230.85h1.6v1.6h-1.6zM766.18,243.00h1.6v1.6h-1.6zM766.18,255.15h1.6v1.6h-1.6zM766.18,267.30h1.6v1.6h-1.6zM766.18,279.45h1.6v1.6h-1.6zM766.18,291.60h1.6v1.6h-1.6zM766.18,303.75h1.6v1.6h-1.6zM766.18,315.90h1.6v1.6h-1.6zM766.18,328.05h1.6v1.6h-1.6zM766.18,340.20h1.6v1.6h-1.6zM766.18,352.35h1.6v1.6h-1.6zM766.18,364.50h1.6v1.6h-1.6zM766.18,376.65h1.6v1.6h-1.6zM766.18,388.80h1.6v1.6h-1.6zM766.18,400.95h1.6v1.6h-1.6zM766.18,413.10h1.6v1.6h-1.6zM766.18,425.25h1.6v1.6h-1.6zM766.18,437.40h1.6v1.6h-1.6zM766.18,449.55h1.6v1.6h-1.6zM766.18,461.70h1.6v1.6h-1.6zM766.18,473.85h1.6v1.6h-1.6zM766.18,486.00h1.6v1.6h-1.6zM766.18,498.15h1.6v1.6h-1.6zM766.18,510.30h1.6v1.6h-1.6zM766.18,522.45h1.6v1.6h-1.6zM766.18,534.60h1.6v1.6h-1.6zM766.18,546.75h1.6v1.6h-1.6zM766.18,558.90h1.6v1.6h-1.6zM766.18,571.05h1.6v1.6h-1.6zM766.18,583.20h1.6v1.6h-1.6zM766.18,595.35h1.6v1.6h-1.6zM778.32,48.60h1.6v1.6h-1.6zM778.32,60.75h1.6v1.6h-1.6zM778.32,72.90h1.6v1.6h-1.6zM778.32,85.05h1.6v1.6h-1.6zM778.32,97.20h1.6v1.6h-1.6zM778.32,109.35h1.6v1.6h-1.6zM778.32,121.50h1.6v1.6h-1.6zM778.32,133.65h1.6v1.6h-1.6zM778.32,145.80h1.6v1.6h-1.6zM778.32,157.95h1.6v1.6h-1.6zM778.32,170.10h1.6v1.6h-1.6zM778.32,182.25h1.6v1.6h-1.6zM778.32,194.40h1.6v1.6h-1.6zM778.32,206.55h1.6v1.6h-1.6zM778.32,218.70h1.6v1.6h-1.6zM778.32,230.85h1.6v1.6h-1.6zM778.32,243.00h1.6v1.6h-1.6zM778.32,255.15h1.6v1.6h-1.6zM778.32,267.30h1.6v1.6h-1.6zM778.32,279.45h1.6v1.6h-1.6zM778.32,291.60h1.6v1.6h-1.6zM778.32,303.75h1.6v1.6h-1.6zM778.32,315.90h1.6v1.6h-1.6zM778.32,328.05h1.6v1.6h-1.6zM778.32,340.20h1.6v1.6h-1.6zM778.32,352.35h1.6v1.6h-1.6zM778.32,364.50h1.6v1.6h-1.6zM778.32,376.65h1.6v1.6h-1.6zM778.32,388.80h1.6v1.6h-1.6zM778.32,400.95h1.6v1.6h-1.6zM778.32,413.10h1.6v1.6h-1.6zM778.32,425.25h1.6v1.6h-1.6zM778.32,437.40h1.6v1.6h-1.6zM778.32,449.55h1.6v1.6h-1.6zM778.32,461.70h1.6v1.6h-1.6zM778.32,473.85h1.6v1.6h-1.6zM778.32,486.00h1.6v1.6h-1.6zM778.32,498.15h1.6v1.6h-1.6zM778.32,510.30h1.6v1.6h-1.6zM778.32,522.45h1.6v1.6h-1.6zM778.32,534.60h1.6v1.6h-1.6zM778.32,546.75h1.6v1.6h-1.6zM778.32,558.90h1.6v1.6h-1.6zM778.32,571.05h1.6v1.6h-1.6zM778.32,583.20h1.6v1.6h-1.6zM778.32,595.35h1.6v1.6h-1.6zM790.46,48.60h1.6v1.6h-1.6zM790.46,60.75h1.6v1.6h-1.6zM790.46,72.90h1.6v1.6h-1.6zM790.46,85.05h1.6v1.6h-1.6zM790.46,97.20h1.6v1.6h-1.6zM790.46,109.35h1.6v1.6h-1.6zM790.46,121.50h1.6v1.6h-1.6zM790.46,133.65h1.6v1.6h-1.6zM790.46,145.80h1.6v1.6h-1.6zM790.46,157.95h1.6v1.6h-1.6zM790.46,170.10h1.6v1.6h-1.6zM790.46,182.25h1.6v1.6h-1.6zM790.46,194.40h1.6v1.6h-1.6zM790.46,206.55h1.6v1.6h-1.6zM790.46,218.70h1.6v1.6h-1.6zM790.46,230.85h1.6v1.6h-1.6zM790.46,243.00h1.6v1.6h-1.6zM790.46,255.15h1.6v1.6h-1.6zM790.46,267.30h1.6v1.6h-1.6zM790.46,279.45h1.6v1.6h-1.6zM790.46,291.60h1.6v1.6h-1.6zM790.46,303.75h1.6v1.6h-1.6zM790.46,315.90h1.6v1.6h-1.6zM790.46,328.05h1.6v1.6h-1.6zM790.46,340.20h1.6v1.6h-1.6zM790.46,352.35h1.6v1.6h-1.6zM790.46,364.50h1.6v1.6h-1.6zM790.46,376.65h1.6v1.6h-1.6zM790.46,388.80h1.6v1.6h-1.6zM790.46,400.95h1.6v1.6h-1.6zM790.46,413.10h1.6v1.6h-1.6zM790.46,425.25h1.6v1.6h-1.6zM790.46,437.40h1.6v1.6h-1.6zM790.46,449.55h1.6v1.6h-1.6zM790.46,461.70h1.6v1.6h-1.6zM790.46,473.85h1.6v1.6h-1.6zM790.46,486.00h1.6v1.6h-1.6zM790.46,498.15h1.6v1.6h-1.6zM790.46,510.30h1.6v1.6h-1.6zM790.46,522.45h1.6v1.6h-1.6zM790.46,534.60h1.6v1.6h-1.6zM790.46,546.75h1.6v1.6h-1.6zM790.46,558.90h1.6v1.6h-1.6zM790.46,571.05h1.6v1.6h-1.6zM790.46,583.20h1.6v1.6h-1.6zM790.46,595.35h1.6v1.6h-1.6z" fill="#7a7a7a"/>
<polygon points="10.30,30.50 35.30,43.00 10.30,55.70" fill="none" stroke="#b0c858" stroke-width="1.3" stroke-linejoin="miter"/>
<circle cx="38.30" cy="43.00" r="3.2" fill="none" stroke="#b0c858" stroke-width="1.3"/>
<line x1="41.50" y1="43.00" x2="50.75" y2="43.00" stroke="#b0c858" stroke-width="1.3"/>
<text x="17.00" y="58.85" font-family="Liberation Mono" font-size="7.59" fill="#e8e8e8" textLength="17.00" lengthAdjust="spacingAndGlyphs" stroke="#e8e8e8" stroke-width="0.35">dra=L</text>
<path d="M59.00,97.80 H75.30 A21.60,18.60 0 0 1 75.30,135.00 H59.00 Z" fill="none" stroke="#b0c858" stroke-width="1.3"/>
<line x1="50.75" y1="104.50" x2="58.75" y2="104.50" stroke="#b0c858" stroke-width="1.3"/>
<rect x="48.55" y="102.30" width="4.4" height="4.4" rx="1.3" fill="#e83838"/>
<line x1="50.75" y1="128.25" x2="58.75" y2="128.25" stroke="#b0c858" stroke-width="1.3"/>
<rect x="48.55" y="126.05" width="4.4" height="4.4" rx="1.3" fill="#e83838"/>
<line x1="96.90" y1="116.25" x2="111.30" y2="116.25" stroke="#b0c858" stroke-width="1.3"/>
<line x1="111.30" y1="116.25" x2="135.85" y2="116.25" stroke="#5aaed0" stroke-width="1.3"/>
<line x1="135.85" y1="116.25" x2="147.75" y2="116.25" stroke="#b0c858" stroke-width="1.3"/>
<rect x="109.10" y="114.05" width="4.4" height="4.4" rx="1.3" fill="#e83838"/>
<rect x="133.65" y="114.05" width="4.4" height="4.4" rx="1.3" fill="#e83838"/>
<text x="60.00" y="90.80" font-family="Liberation Mono" font-size="11.39" fill="#e8e8e8" textLength="27.50" lengthAdjust="spacingAndGlyphs" stroke="#e8e8e8" stroke-width="0.35">mand2</text>
<text x="68.75" y="118.65" font-family="Liberation Mono" font-size="9.11" fill="#e8e8e8" textLength="15.15" lengthAdjust="spacingAndGlyphs" stroke="#e8e8e8" stroke-width="0.35">x112</text>
<text x="83.90" y="102.35" font-family="Liberation Mono" font-size="7.59" fill="#e8e8e8" textLength="17.10" lengthAdjust="spacingAndGlyphs" stroke="#e8e8e8" stroke-width="0.35">d1a=L</text>
<text x="0.50" y="108.55" font-family="Liberation Mono" font-size="13.66" fill="#78c0d0" textLength="43.50" lengthAdjust="spacingAndGlyphs" stroke="#78c0d0" stroke-width="0.0">VER_REG</text>
<polygon points="10.00,128.75 35.00,141.25 10.00,153.75" fill="none" stroke="#b0c858" stroke-width="1.3" stroke-linejoin="miter"/>
<circle cx="38.30" cy="141.25" r="3.2" fill="none" stroke="#b0c858" stroke-width="1.3"/>
<line x1="41.50" y1="141.25" x2="50.75" y2="141.25" stroke="#b0c858" stroke-width="1.3"/>
<line x1="50.75" y1="128.25" x2="50.75" y2="141.25" stroke="#5aaed0" stroke-width="1.3"/>
<rect x="48.55" y="139.05" width="4.4" height="4.4" rx="1.3" fill="#e83838"/>
<line x1="2.50" y1="141.25" x2="10.00" y2="141.25" stroke="#b0c858" stroke-width="1.3"/>
<rect x="0.30" y="139.05" width="4.4" height="4.4" rx="1.3" fill="#e83838"/>
<text x="10.30" y="125.60" font-family="Liberation Mono" font-size="11.39" fill="#e8e8e8" textLength="22.70" lengthAdjust="spacingAndGlyphs" stroke="#e8e8e8" stroke-width="0.35">minv</text>
<text x="28.90" y="132.50" font-family="Liberation Mono" font-size="8.35" fill="#e8e8e8" textLength="14.40" lengthAdjust="spacingAndGlyphs" stroke="#e8e8e8" stroke-width="0.35">x113</text>
<text x="16.50" y="155.10" font-family="Liberation Mono" font-size="8.35" fill="#e8e8e8" textLength="17.20" lengthAdjust="spacingAndGlyphs" stroke="#e8e8e8" stroke-width="0.35">dra=L</text>
<polygon points="147.75,55.40 202.90,80.25 202.90,103.90 147.75,128.90" fill="none" stroke="#b0c858" stroke-width="1.3" stroke-linejoin="miter"/>
<line x1="110.65" y1="40.00" x2="110.65" y2="67.65" stroke="#5aaed0" stroke-width="1.3"/>
<line x1="110.65" y1="67.65" x2="135.85" y2="67.65" stroke="#5aaed0" stroke-width="1.3"/>
<line x1="135.85" y1="67.65" x2="147.75" y2="67.65" stroke="#b0c858" stroke-width="1.3"/>
<rect x="133.65" y="65.45" width="4.4" height="4.4" rx="1.3" fill="#e83838"/>
<line x1="202.90" y1="92.00" x2="214.25" y2="92.00" stroke="#b0c858" stroke-width="1.3"/>
<rect x="212.05" y="89.80" width="4.4" height="4.4" rx="1.3" fill="#e83838"/>
<text x="217.50" y="96.05" font-family="Liberation Mono" font-size="13.66" fill="#78c0d0" textLength="66.25" lengthAdjust="spacingAndGlyphs" stroke="#78c0d0" stroke-width="0.0">LDWE_HW_FB</text>
<line x1="178.00" y1="115.50" x2="178.00" y2="128.40" stroke="#b0c858" stroke-width="1.3"/>
<line x1="178.00" y1="128.40" x2="178.00" y2="189.25" stroke="#5aaed0" stroke-width="1.3"/>
<rect x="175.80" y="126.20" width="4.4" height="4.4" rx="1.3" fill="#e83838"/>
<text x="149.60" y="70.20" font-family="Liberation Mono" font-size="8.35" fill="#e8e8e8" textLength="4.00" lengthAdjust="spacingAndGlyphs" stroke="#e8e8e8" stroke-width="0.35">A</text>
<text x="149.60" y="118.80" font-family="Liberation Mono" font-size="8.35" fill="#e8e8e8" textLength="4.00" lengthAdjust="spacingAndGlyphs" stroke="#e8e8e8" stroke-width="0.35">B</text>
<text x="173.60" y="113.95" font-family="Liberation Mono" font-size="10.63" fill="#e8e8e8" textLength="5.00" lengthAdjust="spacingAndGlyphs" stroke="#e8e8e8" stroke-width="0.35">S</text>
<text x="194.40" y="94.30" font-family="Liberation Mono" font-size="8.35" fill="#e8e8e8" textLength="4.00" lengthAdjust="spacingAndGlyphs" stroke="#e8e8e8" stroke-width="0.35">Z</text>
<text x="157.40" y="96.80" font-family="Liberation Mono" font-size="9.11" fill="#e8e8e8" textLength="21.00" lengthAdjust="spacingAndGlyphs" stroke="#e8e8e8" stroke-width="0.35">mmux</text>
<text x="168.75" y="64.70" font-family="Liberation Mono" font-size="8.35" fill="#e8e8e8" textLength="16.65" lengthAdjust="spacingAndGlyphs" stroke="#e8e8e8" stroke-width="0.35">dim=1</text>
<text x="205.50" y="71.20" font-family="Liberation Mono" font-size="8.35" fill="#e8e8e8" textLength="14.00" lengthAdjust="spacingAndGlyphs" stroke="#e8e8e8" stroke-width="0.35">x114</text>
<path d="M125.80,170.50 H141.93 A21.38,18.55 0 0 1 141.93,207.60 H125.80 Z" fill="none" stroke="#b0c858" stroke-width="1.3"/>
<line x1="117.00" y1="177.50" x2="125.80" y2="177.50" stroke="#b0c858" stroke-width="1.3"/>
<rect x="114.80" y="175.30" width="4.4" height="4.4" rx="1.3" fill="#e83838"/>
<line x1="117.00" y1="201.25" x2="125.80" y2="201.25" stroke="#b0c858" stroke-width="1.3"/>
<rect x="114.80" y="199.05" width="4.4" height="4.4" rx="1.3" fill="#e83838"/>
<line x1="163.30" y1="189.25" x2="178.00" y2="189.25" stroke="#b0c858" stroke-width="1.3"/>
<rect x="175.80" y="187.05" width="4.4" height="4.4" rx="1.3" fill="#e83838"/>
<text x="40.00" y="181.55" font-family="Liberation Mono" font-size="13.66" fill="#78c0d0" textLength="71.00" lengthAdjust="spacingAndGlyphs" stroke="#78c0d0" stroke-width="0.0">TD_ENABMBFB</text>
<text x="39.50" y="204.80" font-family="Liberation Mono" font-size="13.66" fill="#78c0d0" textLength="71.50" lengthAdjust="spacingAndGlyphs" stroke="#78c0d0" stroke-width="0.0">MD_ANTLDADD</text>
<text x="135.00" y="191.75" font-family="Liberation Mono" font-size="9.11" fill="#e8e8e8" textLength="16.00" lengthAdjust="spacingAndGlyphs" stroke="#e8e8e8" stroke-width="0.35">x115</text>
<text x="126.00" y="162.80" font-family="Liberation Mono" font-size="11.39" fill="#e8e8e8" textLength="28.00" lengthAdjust="spacingAndGlyphs" stroke="#e8e8e8" stroke-width="0.35">mand2</text>
<text x="150.00" y="174.05" font-family="Liberation Mono" font-size="7.59" fill="#e8e8e8" textLength="17.50" lengthAdjust="spacingAndGlyphs" stroke="#e8e8e8" stroke-width="0.35">d1a=1</text>
<polygon points="202.50,231.70 256.70,256.50 256.70,280.20 202.50,304.50" fill="none" stroke="#b0c858" stroke-width="1.3" stroke-linejoin="miter"/>
<line x1="190.00" y1="244.30" x2="202.50" y2="244.30" stroke="#b0c858" stroke-width="1.3"/>
<rect x="187.80" y="242.10" width="4.4" height="4.4" rx="1.3" fill="#e83838"/>
<line x1="190.00" y1="292.90" x2="202.50" y2="292.90" stroke="#b0c858" stroke-width="1.3"/>
<rect x="187.80" y="290.70" width="4.4" height="4.4" rx="1.3" fill="#e83838"/>
<line x1="256.70" y1="268.00" x2="268.90" y2="268.00" stroke="#b0c858" stroke-width="1.3"/>
<rect x="266.70" y="265.80" width="4.4" height="4.4" rx="1.3" fill="#e83838"/>
<line x1="232.50" y1="291.00" x2="232.50" y2="304.90" stroke="#b0c858" stroke-width="1.3"/>
<line x1="232.50" y1="304.90" x2="232.50" y2="329.20" stroke="#5aaed0" stroke-width="1.3"/>
<rect x="230.30" y="302.70" width="4.4" height="4.4" rx="1.3" fill="#e83838"/>
<rect x="230.30" y="327.00" width="4.4" height="4.4" rx="1.3" fill="#e83838"/>
<text x="181.10" y="332.85" font-family="Liberation Mono" font-size="13.66" fill="#78c0d0" textLength="45.40" lengthAdjust="spacingAndGlyphs" stroke="#78c0d0" stroke-width="0.0">RUN_VER</text>
<text x="204.30" y="247.00" font-family="Liberation Mono" font-size="8.35" fill="#e8e8e8" textLength="4.00" lengthAdjust="spacingAndGlyphs" stroke="#e8e8e8" stroke-width="0.35">A</text>
<text x="204.30" y="295.50" font-family="Liberation Mono" font-size="8.35" fill="#e8e8e8" textLength="4.00" lengthAdjust="spacingAndGlyphs" stroke="#e8e8e8" stroke-width="0.35">B</text>
<text x="228.10" y="289.80" font-family="Liberation Mono" font-size="9.87" fill="#e8e8e8" textLength="5.00" lengthAdjust="spacingAndGlyphs" stroke="#e8e8e8" stroke-width="0.35">S</text>
<text x="249.40" y="270.30" font-family="Liberation Mono" font-size="8.35" fill="#e8e8e8" textLength="4.00" lengthAdjust="spacingAndGlyphs" stroke="#e8e8e8" stroke-width="0.35">Z</text>
<text x="212.00" y="272.05" font-family="Liberation Mono" font-size="9.11" fill="#e8e8e8" textLength="21.50" lengthAdjust="spacingAndGlyphs" stroke="#e8e8e8" stroke-width="0.35">mmux</text>
<text x="222.90" y="240.80" font-family="Liberation Mono" font-size="8.35" fill="#e8e8e8" textLength="22.30" lengthAdjust="spacingAndGlyphs" stroke="#e8e8e8" stroke-width="0.35">dim=70</text>
<text x="258.80" y="247.60" font-family="Liberation Mono" font-size="8.35" fill="#e8e8e8" textLength="15.50" lengthAdjust="spacingAndGlyphs" stroke="#e8e8e8" stroke-width="0.35">x185</text>
<text x="61.90" y="248.45" font-family="Liberation Mono" font-size="13.66" fill="#78c0d0" textLength="121.80" lengthAdjust="spacingAndGlyphs" stroke="#78c0d0" stroke-width="0.0">ILDDBUS_WRITE[69:0]</text>
<text x="46.10" y="296.55" font-family="Liberation Mono" font-size="13.66" fill="#78c0d0" textLength="137.60" lengthAdjust="spacingAndGlyphs" stroke="#78c0d0" stroke-width="0.0">LDDBUS_FF_WRITE[69:0]</text>
<text x="272.20" y="272.05" font-family="Liberation Mono" font-size="13.66" fill="#78c0d0" textLength="137.80" lengthAdjust="spacingAndGlyphs" stroke="#78c0d0" stroke-width="0.0">LDDATAOUT_WRITE[69:0]</text>
<line x1="420.60" y1="268.00" x2="469.60" y2="268.00" stroke="#b0c858" stroke-width="1.3"/>
<polygon points="202.50,359.25 256.70,384.05 256.70,407.75 202.50,432.05" fill="none" stroke="#b0c858" stroke-width="1.3" stroke-linejoin="miter"/>
<line x1="190.00" y1="371.85" x2="202.50" y2="371.85" stroke="#b0c858" stroke-width="1.3"/>
<rect x="187.80" y="369.65" width="4.4" height="4.4" rx="1.3" fill="#e83838"/>
<line x1="190.00" y1="420.45" x2="202.50" y2="420.45" stroke="#b0c858" stroke-width="1.3"/>
<rect x="187.80" y="418.25" width="4.4" height="4.4" rx="1.3" fill="#e83838"/>
<line x1="256.70" y1="395.55" x2="268.90" y2="395.55" stroke="#b0c858" stroke-width="1.3"/>
<rect x="266.70" y="393.35" width="4.4" height="4.4" rx="1.3" fill="#e83838"/>
<line x1="232.50" y1="418.55" x2="232.50" y2="432.45" stroke="#b0c858" stroke-width="1.3"/>
<line x1="232.50" y1="432.45" x2="232.50" y2="456.75" stroke="#5aaed0" stroke-width="1.3"/>
<rect x="230.30" y="430.25" width="4.4" height="4.4" rx="1.3" fill="#e83838"/>
<rect x="230.30" y="454.55" width="4.4" height="4.4" rx="1.3" fill="#e83838"/>
<text x="181.10" y="460.40" font-family="Liberation Mono" font-size="13.66" fill="#78c0d0" textLength="45.40" lengthAdjust="spacingAndGlyphs" stroke="#78c0d0" stroke-width="0.0">RUN_VER</text>
<text x="204.30" y="374.55" font-family="Liberation Mono" font-size="8.35" fill="#e8e8e8" textLength="4.00" lengthAdjust="spacingAndGlyphs" stroke="#e8e8e8" stroke-width="0.35">A</text>
<text x="204.30" y="423.05" font-family="Liberation Mono" font-size="8.35" fill="#e8e8e8" textLength="4.00" lengthAdjust="spacingAndGlyphs" stroke="#e8e8e8" stroke-width="0.35">B</text>
<text x="228.10" y="417.35" font-family="Liberation Mono" font-size="9.87" fill="#e8e8e8" textLength="5.00" lengthAdjust="spacingAndGlyphs" stroke="#e8e8e8" stroke-width="0.35">S</text>
<text x="249.40" y="397.85" font-family="Liberation Mono" font-size="8.35" fill="#e8e8e8" textLength="4.00" lengthAdjust="spacingAndGlyphs" stroke="#e8e8e8" stroke-width="0.35">Z</text>
<text x="212.00" y="399.60" font-family="Liberation Mono" font-size="9.11" fill="#e8e8e8" textLength="21.50" lengthAdjust="spacingAndGlyphs" stroke="#e8e8e8" stroke-width="0.35">mmux</text>
<text x="222.90" y="368.35" font-family="Liberation Mono" font-size="8.35" fill="#e8e8e8" textLength="22.30" lengthAdjust="spacingAndGlyphs" stroke="#e8e8e8" stroke-width="0.35">dim=16</text>
<text x="258.80" y="375.15" font-family="Liberation Mono" font-size="8.35" fill="#e8e8e8" textLength="15.50" lengthAdjust="spacingAndGlyphs" stroke="#e8e8e8" stroke-width="0.35">x186</text>
<text x="21.75" y="376.00" font-family="Liberation Mono" font-size="13.66" fill="#78c0d0" textLength="161.95" lengthAdjust="spacingAndGlyphs" stroke="#78c0d0" stroke-width="0.0">ILDDBUS_TRED0_WRITE[15:0]</text>
<text x="6.75" y="424.10" font-family="Liberation Mono" font-size="13.66" fill="#78c0d0" textLength="176.95" lengthAdjust="spacingAndGlyphs" stroke="#78c0d0" stroke-width="0.0">LDDBUS_TRED0_FF_WRITE[15:0]</text>
<text x="272.20" y="399.60" font-family="Liberation Mono" font-size="13.66" fill="#78c0d0" textLength="177.70" lengthAdjust="spacingAndGlyphs" stroke="#78c0d0" stroke-width="0.0">LDDATAOUT_TRED0_WRITE[15:0]</text>
<line x1="457.50" y1="395.55" x2="469.60" y2="395.55" stroke="#b0c858" stroke-width="1.3"/>
<polygon points="202.50,486.90 256.70,511.70 256.70,535.40 202.50,559.70" fill="none" stroke="#b0c858" stroke-width="1.3" stroke-linejoin="miter"/>
<line x1="190.00" y1="499.50" x2="202.50" y2="499.50" stroke="#b0c858" stroke-width="1.3"/>
<rect x="187.80" y="497.30" width="4.4" height="4.4" rx="1.3" fill="#e83838"/>
<line x1="190.00" y1="548.10" x2="202.50" y2="548.10" stroke="#b0c858" stroke-width="1.3"/>
<rect x="187.80" y="545.90" width="4.4" height="4.4" rx="1.3" fill="#e83838"/>
<line x1="256.70" y1="523.20" x2="268.90" y2="523.20" stroke="#b0c858" stroke-width="1.3"/>
<rect x="266.70" y="521.00" width="4.4" height="4.4" rx="1.3" fill="#e83838"/>
<line x1="232.50" y1="546.20" x2="232.50" y2="560.10" stroke="#b0c858" stroke-width="1.3"/>
<line x1="232.50" y1="560.10" x2="232.50" y2="584.40" stroke="#5aaed0" stroke-width="1.3"/>
<rect x="230.30" y="557.90" width="4.4" height="4.4" rx="1.3" fill="#e83838"/>
<rect x="230.30" y="582.20" width="4.4" height="4.4" rx="1.3" fill="#e83838"/>
<text x="181.10" y="588.05" font-family="Liberation Mono" font-size="13.66" fill="#78c0d0" textLength="45.40" lengthAdjust="spacingAndGlyphs" stroke="#78c0d0" stroke-width="0.0">RUN_VER</text>
<text x="204.30" y="502.20" font-family="Liberation Mono" font-size="8.35" fill="#e8e8e8" textLength="4.00" lengthAdjust="spacingAndGlyphs" stroke="#e8e8e8" stroke-width="0.35">A</text>
<text x="204.30" y="550.70" font-family="Liberation Mono" font-size="8.35" fill="#e8e8e8" textLength="4.00" lengthAdjust="spacingAndGlyphs" stroke="#e8e8e8" stroke-width="0.35">B</text>
<text x="228.10" y="545.00" font-family="Liberation Mono" font-size="9.87" fill="#e8e8e8" textLength="5.00" lengthAdjust="spacingAndGlyphs" stroke="#e8e8e8" stroke-width="0.35">S</text>
<text x="249.40" y="525.50" font-family="Liberation Mono" font-size="8.35" fill="#e8e8e8" textLength="4.00" lengthAdjust="spacingAndGlyphs" stroke="#e8e8e8" stroke-width="0.35">Z</text>
<text x="212.00" y="527.25" font-family="Liberation Mono" font-size="9.11" fill="#e8e8e8" textLength="21.50" lengthAdjust="spacingAndGlyphs" stroke="#e8e8e8" stroke-width="0.35">mmux</text>
<text x="222.90" y="496.00" font-family="Liberation Mono" font-size="8.35" fill="#e8e8e8" textLength="22.30" lengthAdjust="spacingAndGlyphs" stroke="#e8e8e8" stroke-width="0.35">dim=16</text>
<text x="258.80" y="502.80" font-family="Liberation Mono" font-size="8.35" fill="#e8e8e8" textLength="15.50" lengthAdjust="spacingAndGlyphs" stroke="#e8e8e8" stroke-width="0.35">x189</text>
<text x="21.75" y="503.65" font-family="Liberation Mono" font-size="13.66" fill="#78c0d0" textLength="161.95" lengthAdjust="spacingAndGlyphs" stroke="#78c0d0" stroke-width="0.0">ILDDBUS_TRED1_WRITE[15:0]</text>
<text x="6.75" y="551.75" font-family="Liberation Mono" font-size="13.66" fill="#78c0d0" textLength="176.95" lengthAdjust="spacingAndGlyphs" stroke="#78c0d0" stroke-width="0.0">LDDBUS_TRED1_FF_WRITE[15:0]</text>
<text x="272.20" y="527.25" font-family="Liberation Mono" font-size="13.66" fill="#78c0d0" textLength="177.70" lengthAdjust="spacingAndGlyphs" stroke="#78c0d0" stroke-width="0.0">LDDATAOUT_TRED1_WRITE[15:0]</text>
<line x1="457.50" y1="523.20" x2="469.60" y2="523.20" stroke="#b0c858" stroke-width="1.3"/>
<line x1="469.60" y1="176.90" x2="469.60" y2="523.60" stroke="#b0c858" stroke-width="1.3"/>
<line x1="469.60" y1="176.90" x2="493.50" y2="176.90" stroke="#b0c858" stroke-width="1.3"/>
<rect x="493.5" y="146.95" width="91.3" height="54.75" fill="none" stroke="#b0c858" stroke-width="1.3"/>
<text x="480.60" y="138.35" font-family="Liberation Mono" font-size="15.18" fill="#e8e8e8" textLength="123.40" lengthAdjust="spacingAndGlyphs" stroke="#e8e8e8" stroke-width="0.1">RESOLVEROUT WRITE</text>
<line x1="584.80" y1="158.50" x2="600.00" y2="158.50" stroke="#b0c858" stroke-width="1.3"/>
<line x1="600.00" y1="158.50" x2="609.50" y2="158.50" stroke="#5aaed0" stroke-width="1.3"/>
<rect x="607.30" y="156.30" width="4.4" height="4.4" rx="1.3" fill="#e83838"/>
<text x="612.60" y="162.55" font-family="Liberation Mono" font-size="13.66" fill="#78c0d0" textLength="163.80" lengthAdjust="spacingAndGlyphs" stroke="#78c0d0" stroke-width="0.0">LDDATAOUT_RED_WRITE[69:0]</text>
<line x1="529.90" y1="256.10" x2="529.90" y2="600.00" stroke="#b0c858" stroke-width="1.3"/>
<line x1="529.90" y1="256.10" x2="554.50" y2="256.10" stroke="#b0c858" stroke-width="1.3"/>
<polyline points="548.3,249.80 554.5,256.10 548.3,262.40" fill="none" stroke="#b0c858" stroke-width="1.3"/>
<line x1="529.90" y1="377.90" x2="554.50" y2="377.90" stroke="#b0c858" stroke-width="1.3"/>
<polyline points="548.3,371.60 554.5,377.90 548.3,384.20" fill="none" stroke="#b0c858" stroke-width="1.3"/>
<line x1="529.90" y1="505.40" x2="554.50" y2="505.40" stroke="#b0c858" stroke-width="1.3"/>
<polyline points="548.3,499.10 554.5,505.40 548.3,511.70" fill="none" stroke="#b0c858" stroke-width="1.3"/>
<polygon points="760.60,243.40 814.80,268.20 814.80,291.90 760.60,316.20" fill="none" stroke="#b0c858" stroke-width="1.3" stroke-linejoin="miter"/>
<line x1="749.10" y1="256.40" x2="760.60" y2="256.40" stroke="#b0c858" stroke-width="1.3"/>
<rect x="746.90" y="254.20" width="4.4" height="4.4" rx="1.3" fill="#e83838"/>
<line x1="749.10" y1="305.20" x2="760.60" y2="305.20" stroke="#b0c858" stroke-width="1.3"/>
<rect x="746.90" y="303.00" width="4.4" height="4.4" rx="1.3" fill="#e83838"/>
<line x1="791.30" y1="302.40" x2="791.30" y2="316.70" stroke="#b0c858" stroke-width="1.3"/>
<line x1="791.30" y1="316.70" x2="791.30" y2="335.40" stroke="#5aaed0" stroke-width="1.3"/>
<rect x="789.10" y="314.50" width="4.4" height="4.4" rx="1.3" fill="#e83838"/>
<rect x="789.10" y="333.20" width="4.4" height="4.4" rx="1.3" fill="#e83838"/>
<text x="739.70" y="338.75" font-family="Liberation Mono" font-size="13.66" fill="#78c0d0" textLength="44.80" lengthAdjust="spacingAndGlyphs" stroke="#78c0d0" stroke-width="0.0">RUN_PGL</text>
<text x="762.80" y="259.00" font-family="Liberation Mono" font-size="8.35" fill="#e8e8e8" textLength="4.00" lengthAdjust="spacingAndGlyphs" stroke="#e8e8e8" stroke-width="0.35">A</text>
<text x="762.80" y="307.50" font-family="Liberation Mono" font-size="8.35" fill="#e8e8e8" textLength="4.00" lengthAdjust="spacingAndGlyphs" stroke="#e8e8e8" stroke-width="0.35">B</text>
<text x="786.50" y="301.20" font-family="Liberation Mono" font-size="9.87" fill="#e8e8e8" textLength="5.00" lengthAdjust="spacingAndGlyphs" stroke="#e8e8e8" stroke-width="0.35">S</text>
<text x="769.80" y="284.25" font-family="Liberation Mono" font-size="9.11" fill="#e8e8e8" textLength="22.00" lengthAdjust="spacingAndGlyphs" stroke="#e8e8e8" stroke-width="0.35">mmux</text>
<text x="782.00" y="252.10" font-family="Liberation Mono" font-size="8.35" fill="#e8e8e8" textLength="22.00" lengthAdjust="spacingAndGlyphs" stroke="#e8e8e8" stroke-width="0.35">dim=70</text>
<text x="611.60" y="260.75" font-family="Liberation Mono" font-size="13.66" fill="#78c0d0" textLength="130.80" lengthAdjust="spacingAndGlyphs" stroke="#78c0d0" stroke-width="0.0">LDDATAIN_WRITE[69:0]</text>
<text x="605.30" y="309.25" font-family="Liberation Mono" font-size="13.66" fill="#78c0d0" textLength="137.10" lengthAdjust="spacingAndGlyphs" stroke="#78c0d0" stroke-width="0.0">LDDBUS_FF_WRITE[69:0]</text>
<polygon points="760.60,364.80 814.80,389.60 814.80,413.30 760.60,437.60" fill="none" stroke="#b0c858" stroke-width="1.3" stroke-linejoin="miter"/>
<line x1="749.10" y1="377.80" x2="760.60" y2="377.80" stroke="#b0c858" stroke-width="1.3"/>
<rect x="746.90" y="375.60" width="4.4" height="4.4" rx="1.3" fill="#e83838"/>
<line x1="749.10" y1="426.60" x2="760.60" y2="426.60" stroke="#b0c858" stroke-width="1.3"/>
<rect x="746.90" y="424.40" width="4.4" height="4.4" rx="1.3" fill="#e83838"/>
<line x1="791.30" y1="423.80" x2="791.30" y2="438.10" stroke="#b0c858" stroke-width="1.3"/>
<line x1="791.30" y1="438.10" x2="791.30" y2="456.80" stroke="#5aaed0" stroke-width="1.3"/>
<rect x="789.10" y="435.90" width="4.4" height="4.4" rx="1.3" fill="#e83838"/>
<rect x="789.10" y="454.60" width="4.4" height="4.4" rx="1.3" fill="#e83838"/>
<text x="739.70" y="460.15" font-family="Liberation Mono" font-size="13.66" fill="#78c0d0" textLength="44.80" lengthAdjust="spacingAndGlyphs" stroke="#78c0d0" stroke-width="0.0">RUN_PGL</text>
<text x="762.80" y="380.40" font-family="Liberation Mono" font-size="8.35" fill="#e8e8e8" textLength="4.00" lengthAdjust="spacingAndGlyphs" stroke="#e8e8e8" stroke-width="0.35">A</text>
<text x="762.80" y="428.90" font-family="Liberation Mono" font-size="8.35" fill="#e8e8e8" textLength="4.00" lengthAdjust="spacingAndGlyphs" stroke="#e8e8e8" stroke-width="0.35">B</text>
<text x="786.50" y="422.60" font-family="Liberation Mono" font-size="9.87" fill="#e8e8e8" textLength="5.00" lengthAdjust="spacingAndGlyphs" stroke="#e8e8e8" stroke-width="0.35">S</text>
<text x="769.80" y="405.65" font-family="Liberation Mono" font-size="9.11" fill="#e8e8e8" textLength="22.00" lengthAdjust="spacingAndGlyphs" stroke="#e8e8e8" stroke-width="0.35">mmux</text>
<text x="782.00" y="373.50" font-family="Liberation Mono" font-size="8.35" fill="#e8e8e8" textLength="22.00" lengthAdjust="spacingAndGlyphs" stroke="#e8e8e8" stroke-width="0.35">dim=16</text>
<text x="571.70" y="382.15" font-family="Liberation Mono" font-size="13.66" fill="#78c0d0" textLength="170.70" lengthAdjust="spacingAndGlyphs" stroke="#78c0d0" stroke-width="0.0">LDDATAIN_TRED0_WRITE[15:0]</text>
<text x="566.40" y="430.65" font-family="Liberation Mono" font-size="13.66" fill="#78c0d0" textLength="176.00" lengthAdjust="spacingAndGlyphs" stroke="#78c0d0" stroke-width="0.0">LDDBUS_TRED0_FF_WRITE[15:0]</text>
<polygon points="760.60,492.60 814.80,517.40 814.80,541.10 760.60,565.40" fill="none" stroke="#b0c858" stroke-width="1.3" stroke-linejoin="miter"/>
<line x1="749.10" y1="505.60" x2="760.60" y2="505.60" stroke="#b0c858" stroke-width="1.3"/>
<rect x="746.90" y="503.40" width="4.4" height="4.4" rx="1.3" fill="#e83838"/>
<line x1="749.10" y1="554.40" x2="760.60" y2="554.40" stroke="#b0c858" stroke-width="1.3"/>
<rect x="746.90" y="552.20" width="4.4" height="4.4" rx="1.3" fill="#e83838"/>
<line x1="791.30" y1="551.60" x2="791.30" y2="565.90" stroke="#b0c858" stroke-width="1.3"/>
<line x1="791.30" y1="565.90" x2="791.30" y2="584.60" stroke="#5aaed0" stroke-width="1.3"/>
<rect x="789.10" y="563.70" width="4.4" height="4.4" rx="1.3" fill="#e83838"/>
<rect x="789.10" y="582.40" width="4.4" height="4.4" rx="1.3" fill="#e83838"/>
<text x="739.70" y="587.95" font-family="Liberation Mono" font-size="13.66" fill="#78c0d0" textLength="44.80" lengthAdjust="spacingAndGlyphs" stroke="#78c0d0" stroke-width="0.0">RUN_PGL</text>
<text x="762.80" y="508.20" font-family="Liberation Mono" font-size="8.35" fill="#e8e8e8" textLength="4.00" lengthAdjust="spacingAndGlyphs" stroke="#e8e8e8" stroke-width="0.35">A</text>
<text x="762.80" y="556.70" font-family="Liberation Mono" font-size="8.35" fill="#e8e8e8" textLength="4.00" lengthAdjust="spacingAndGlyphs" stroke="#e8e8e8" stroke-width="0.35">B</text>
<text x="786.50" y="550.40" font-family="Liberation Mono" font-size="9.87" fill="#e8e8e8" textLength="5.00" lengthAdjust="spacingAndGlyphs" stroke="#e8e8e8" stroke-width="0.35">S</text>
<text x="769.80" y="533.45" font-family="Liberation Mono" font-size="9.11" fill="#e8e8e8" textLength="22.00" lengthAdjust="spacingAndGlyphs" stroke="#e8e8e8" stroke-width="0.35">mmux</text>
<text x="782.00" y="501.30" font-family="Liberation Mono" font-size="8.35" fill="#e8e8e8" textLength="22.00" lengthAdjust="spacingAndGlyphs" stroke="#e8e8e8" stroke-width="0.35">dim=16</text>
<text x="571.70" y="509.95" font-family="Liberation Mono" font-size="13.66" fill="#78c0d0" textLength="170.70" lengthAdjust="spacingAndGlyphs" stroke="#78c0d0" stroke-width="0.0">LDDATAIN_TRED1_WRITE[15:0]</text>
<text x="566.40" y="558.45" font-family="Liberation Mono" font-size="13.66" fill="#78c0d0" textLength="176.00" lengthAdjust="spacingAndGlyphs" stroke="#78c0d0" stroke-width="0.0">LDDBUS_TRED1_FF_WRITE[15:0]</text>
<polygon points="447.50,49.00 471.50,62.00 447.50,74.50" fill="none" stroke="#b0c858" stroke-width="1.3" stroke-linejoin="miter"/>
<circle cx="475.70" cy="62.00" r="3.6" fill="none" stroke="#b0c858" stroke-width="1.3"/>
<line x1="479.30" y1="62.00" x2="487.80" y2="62.00" stroke="#b0c858" stroke-width="1.3"/>
<line x1="487.80" y1="40.00" x2="487.80" y2="62.00" stroke="#5aaed0" stroke-width="1.3"/>
<rect x="485.60" y="59.80" width="4.4" height="4.4" rx="1.3" fill="#e83838"/>
<line x1="439.50" y1="62.00" x2="447.50" y2="62.00" stroke="#b0c858" stroke-width="1.3"/>
<rect x="437.30" y="59.80" width="4.4" height="4.4" rx="1.3" fill="#e83838"/>
<text x="387.00" y="65.65" font-family="Liberation Mono" font-size="13.66" fill="#78c0d0" textLength="46.00" lengthAdjust="spacingAndGlyphs" stroke="#78c0d0" stroke-width="0.0">LDHEXEC</text>
<text x="466.00" y="53.80" font-family="Liberation Mono" font-size="8.35" fill="#e8e8e8" textLength="10.50" lengthAdjust="spacingAndGlyphs" stroke="#e8e8e8" stroke-width="0.35">x63</text>
<text x="453.00" y="76.80" font-family="Liberation Mono" font-size="8.35" fill="#e8e8e8" textLength="18.00" lengthAdjust="spacingAndGlyphs" stroke="#e8e8e8" stroke-width="0.35">dir=L</text>
<text x="448.50" y="47.25" font-family="Liberation Mono" font-size="10.63" fill="#e8e8e8" textLength="20.00" lengthAdjust="spacingAndGlyphs" stroke="#e8e8e8" stroke-width="0.35">minv</text>
<polygon points="648.70,49.00 672.70,62.00 648.70,74.50" fill="none" stroke="#b0c858" stroke-width="1.3" stroke-linejoin="miter"/>
<circle cx="676.90" cy="62.00" r="3.6" fill="none" stroke="#b0c858" stroke-width="1.3"/>
<line x1="680.50" y1="62.00" x2="689.00" y2="62.00" stroke="#b0c858" stroke-width="1.3"/>
<line x1="689.00" y1="40.00" x2="689.00" y2="62.00" stroke="#5aaed0" stroke-width="1.3"/>
<rect x="686.80" y="59.80" width="4.4" height="4.4" rx="1.3" fill="#e83838"/>
<line x1="640.70" y1="62.00" x2="648.70" y2="62.00" stroke="#b0c858" stroke-width="1.3"/>
<rect x="638.50" y="59.80" width="4.4" height="4.4" rx="1.3" fill="#e83838"/>
<text x="588.20" y="65.65" font-family="Liberation Mono" font-size="13.66" fill="#78c0d0" textLength="46.00" lengthAdjust="spacingAndGlyphs" stroke="#78c0d0" stroke-width="0.0">LDHEXEC</text>
<text x="667.20" y="53.80" font-family="Liberation Mono" font-size="8.35" fill="#e8e8e8" textLength="10.50" lengthAdjust="spacingAndGlyphs" stroke="#e8e8e8" stroke-width="0.35">x64</text>
<text x="654.20" y="76.80" font-family="Liberation Mono" font-size="8.35" fill="#e8e8e8" textLength="18.00" lengthAdjust="spacingAndGlyphs" stroke="#e8e8e8" stroke-width="0.35">d1a=1</text>
<text x="649.70" y="47.25" font-family="Liberation Mono" font-size="10.63" fill="#e8e8e8" textLength="20.00" lengthAdjust="spacingAndGlyphs" stroke="#e8e8e8" stroke-width="0.35">minv</text>
</g>
<rect x="1.8" y="18" width="796" height="27.4" fill="#e2e1e0"/>
<rect x="1.8" y="18.2" width="796" height="2.2" fill="#fafafa"/>
<rect x="1.8" y="42.2" width="796" height="2.2" fill="#f0f0f0"/>
<rect x="1.8" y="44.4" width="796" height="1.2" fill="#909090"/>
<rect x="796.8" y="18" width="1.5" height="27.5" fill="#b0b0b0"/>
<rect x="238.7" y="20.5" width="50.6" height="22" fill="#8cc43c"/>
<text x="9.30" y="35.80" font-family="Liberation Sans" font-size="12.50" fill="#222222" textLength="19.95" lengthAdjust="spacingAndGlyphs" stroke="#222222" stroke-width="0.45">File</text>
<text x="40.20" y="35.80" font-family="Liberation Sans" font-size="12.50" fill="#222222" textLength="22.50" lengthAdjust="spacingAndGlyphs" stroke="#222222" stroke-width="0.45">Edit</text>
<text x="74.00" y="35.80" font-family="Liberation Sans" font-size="12.50" fill="#222222" textLength="47.00" lengthAdjust="spacingAndGlyphs" stroke="#222222" stroke-width="0.45">Options</text>
<text x="131.50" y="35.80" font-family="Liberation Sans" font-size="12.50" fill="#222222" textLength="28.00" lengthAdjust="spacingAndGlyphs" stroke="#222222" stroke-width="0.45">View</text>
<text x="170.00" y="35.80" font-family="Liberation Sans" font-size="12.50" fill="#222222" textLength="63.20" lengthAdjust="spacingAndGlyphs" stroke="#222222" stroke-width="0.45">Properties</text>
<text x="244.20" y="35.80" font-family="Liberation Sans" font-size="12.50" fill="#222222" textLength="39.60" lengthAdjust="spacingAndGlyphs" stroke="#222222" stroke-width="0.45">Layers</text>
<text x="293.70" y="35.80" font-family="Liberation Sans" font-size="12.50" fill="#222222" textLength="32.20" lengthAdjust="spacingAndGlyphs" stroke="#222222" stroke-width="0.45">Tools</text>
<text x="337.90" y="35.80" font-family="Liberation Sans" font-size="12.50" fill="#222222" textLength="42.60" lengthAdjust="spacingAndGlyphs" stroke="#222222" stroke-width="0.45">Symbol</text>
<text x="391.00" y="35.80" font-family="Liberation Sans" font-size="12.50" fill="#222222" textLength="37.60" lengthAdjust="spacingAndGlyphs" stroke="#222222" stroke-width="0.45">Hilight</text>
<text x="440.20" y="35.80" font-family="Liberation Sans" font-size="12.50" fill="#222222" textLength="63.50" lengthAdjust="spacingAndGlyphs" stroke="#222222" stroke-width="0.45">Simulation</text>
<text x="571.40" y="35.80" font-family="Liberation Sans" font-size="12.50" fill="#222222" textLength="39.00" lengthAdjust="spacingAndGlyphs" stroke="#222222" stroke-width="0.45">Waves</text>
<text x="632.60" y="35.80" font-family="Liberation Sans" font-size="12.50" fill="#222222" textLength="53.40" lengthAdjust="spacingAndGlyphs" stroke="#222222" stroke-width="0.45">Simulate</text>
<text x="708.50" y="35.80" font-family="Liberation Sans" font-size="12.50" fill="#222222" textLength="39.00" lengthAdjust="spacingAndGlyphs" stroke="#222222" stroke-width="0.45">Netlist</text>
<text x="764.70" y="35.80" font-family="Liberation Sans" font-size="12.50" fill="#222222" textLength="26.60" lengthAdjust="spacingAndGlyphs" stroke="#222222" stroke-width="0.45">Help</text>
<text x="28.50" y="12.55" font-family="Liberation Sans" font-size="11.63" fill="#f4ecdc" textLength="6.00" lengthAdjust="spacingAndGlyphs" stroke="#f4ecdc" stroke-width="0.3">0</text>
<text x="34.80" y="12.55" font-family="Liberation Mono" font-size="12.15" fill="#f4ecdc" textLength="23.20" lengthAdjust="spacingAndGlyphs" stroke="#f4ecdc" stroke-width="0.3">_top</text>
<rect x="752.9" y="3.6" width="14.3" height="13.8" fill="#e4e4e4"/>
<rect x="752.9" y="16.2" width="14.3" height="1.2" fill="#7a7a7a"/>
<rect x="768.3" y="3.6" width="14.3" height="13.8" fill="#e4e4e4"/>
<rect x="768.3" y="16.2" width="14.3" height="1.2" fill="#7a7a7a"/>
<rect x="784.0" y="3.6" width="14.3" height="13.8" fill="#e4e4e4"/>
<rect x="784.0" y="16.2" width="14.3" height="1.2" fill="#7a7a7a"/>
<rect x="757.4" y="13" width="6.6" height="2.2" fill="#111"/>
<rect x="772.5" y="7" width="8" height="7.6" fill="none" stroke="#111" stroke-width="1.5"/>
<path d="M787.5,7 L796,14.2 M796,7 L787.5,14.2" stroke="#111" stroke-width="1.8"/>
<rect x="2" y="597.8" width="797" height="18" fill="#f0f0f0"/>
<rect x="0" y="615.8" width="800" height="2.2" fill="#a88a62"/>
<rect x="0" y="18" width="2.2" height="600" fill="#9c7a4e"/>
<rect x="798.8" y="18" width="1.2" height="598" fill="#d4d4d4"/>
<text x="4.60" y="610.90" font-family="Liberation Sans" font-size="12.50" fill="#222222" textLength="220.40" lengthAdjust="spacingAndGlyphs" stroke="#222222" stroke-width="0.25">mouse = 2600 -7920 - lpddr2/0_top</text>
<text x="235.00" y="610.90" font-family="Liberation Sans" font-size="12.50" fill="#222222" textLength="68.00" lengthAdjust="spacingAndGlyphs" stroke="#222222" stroke-width="0.25">selected: 0</text>
</svg></body></html>
